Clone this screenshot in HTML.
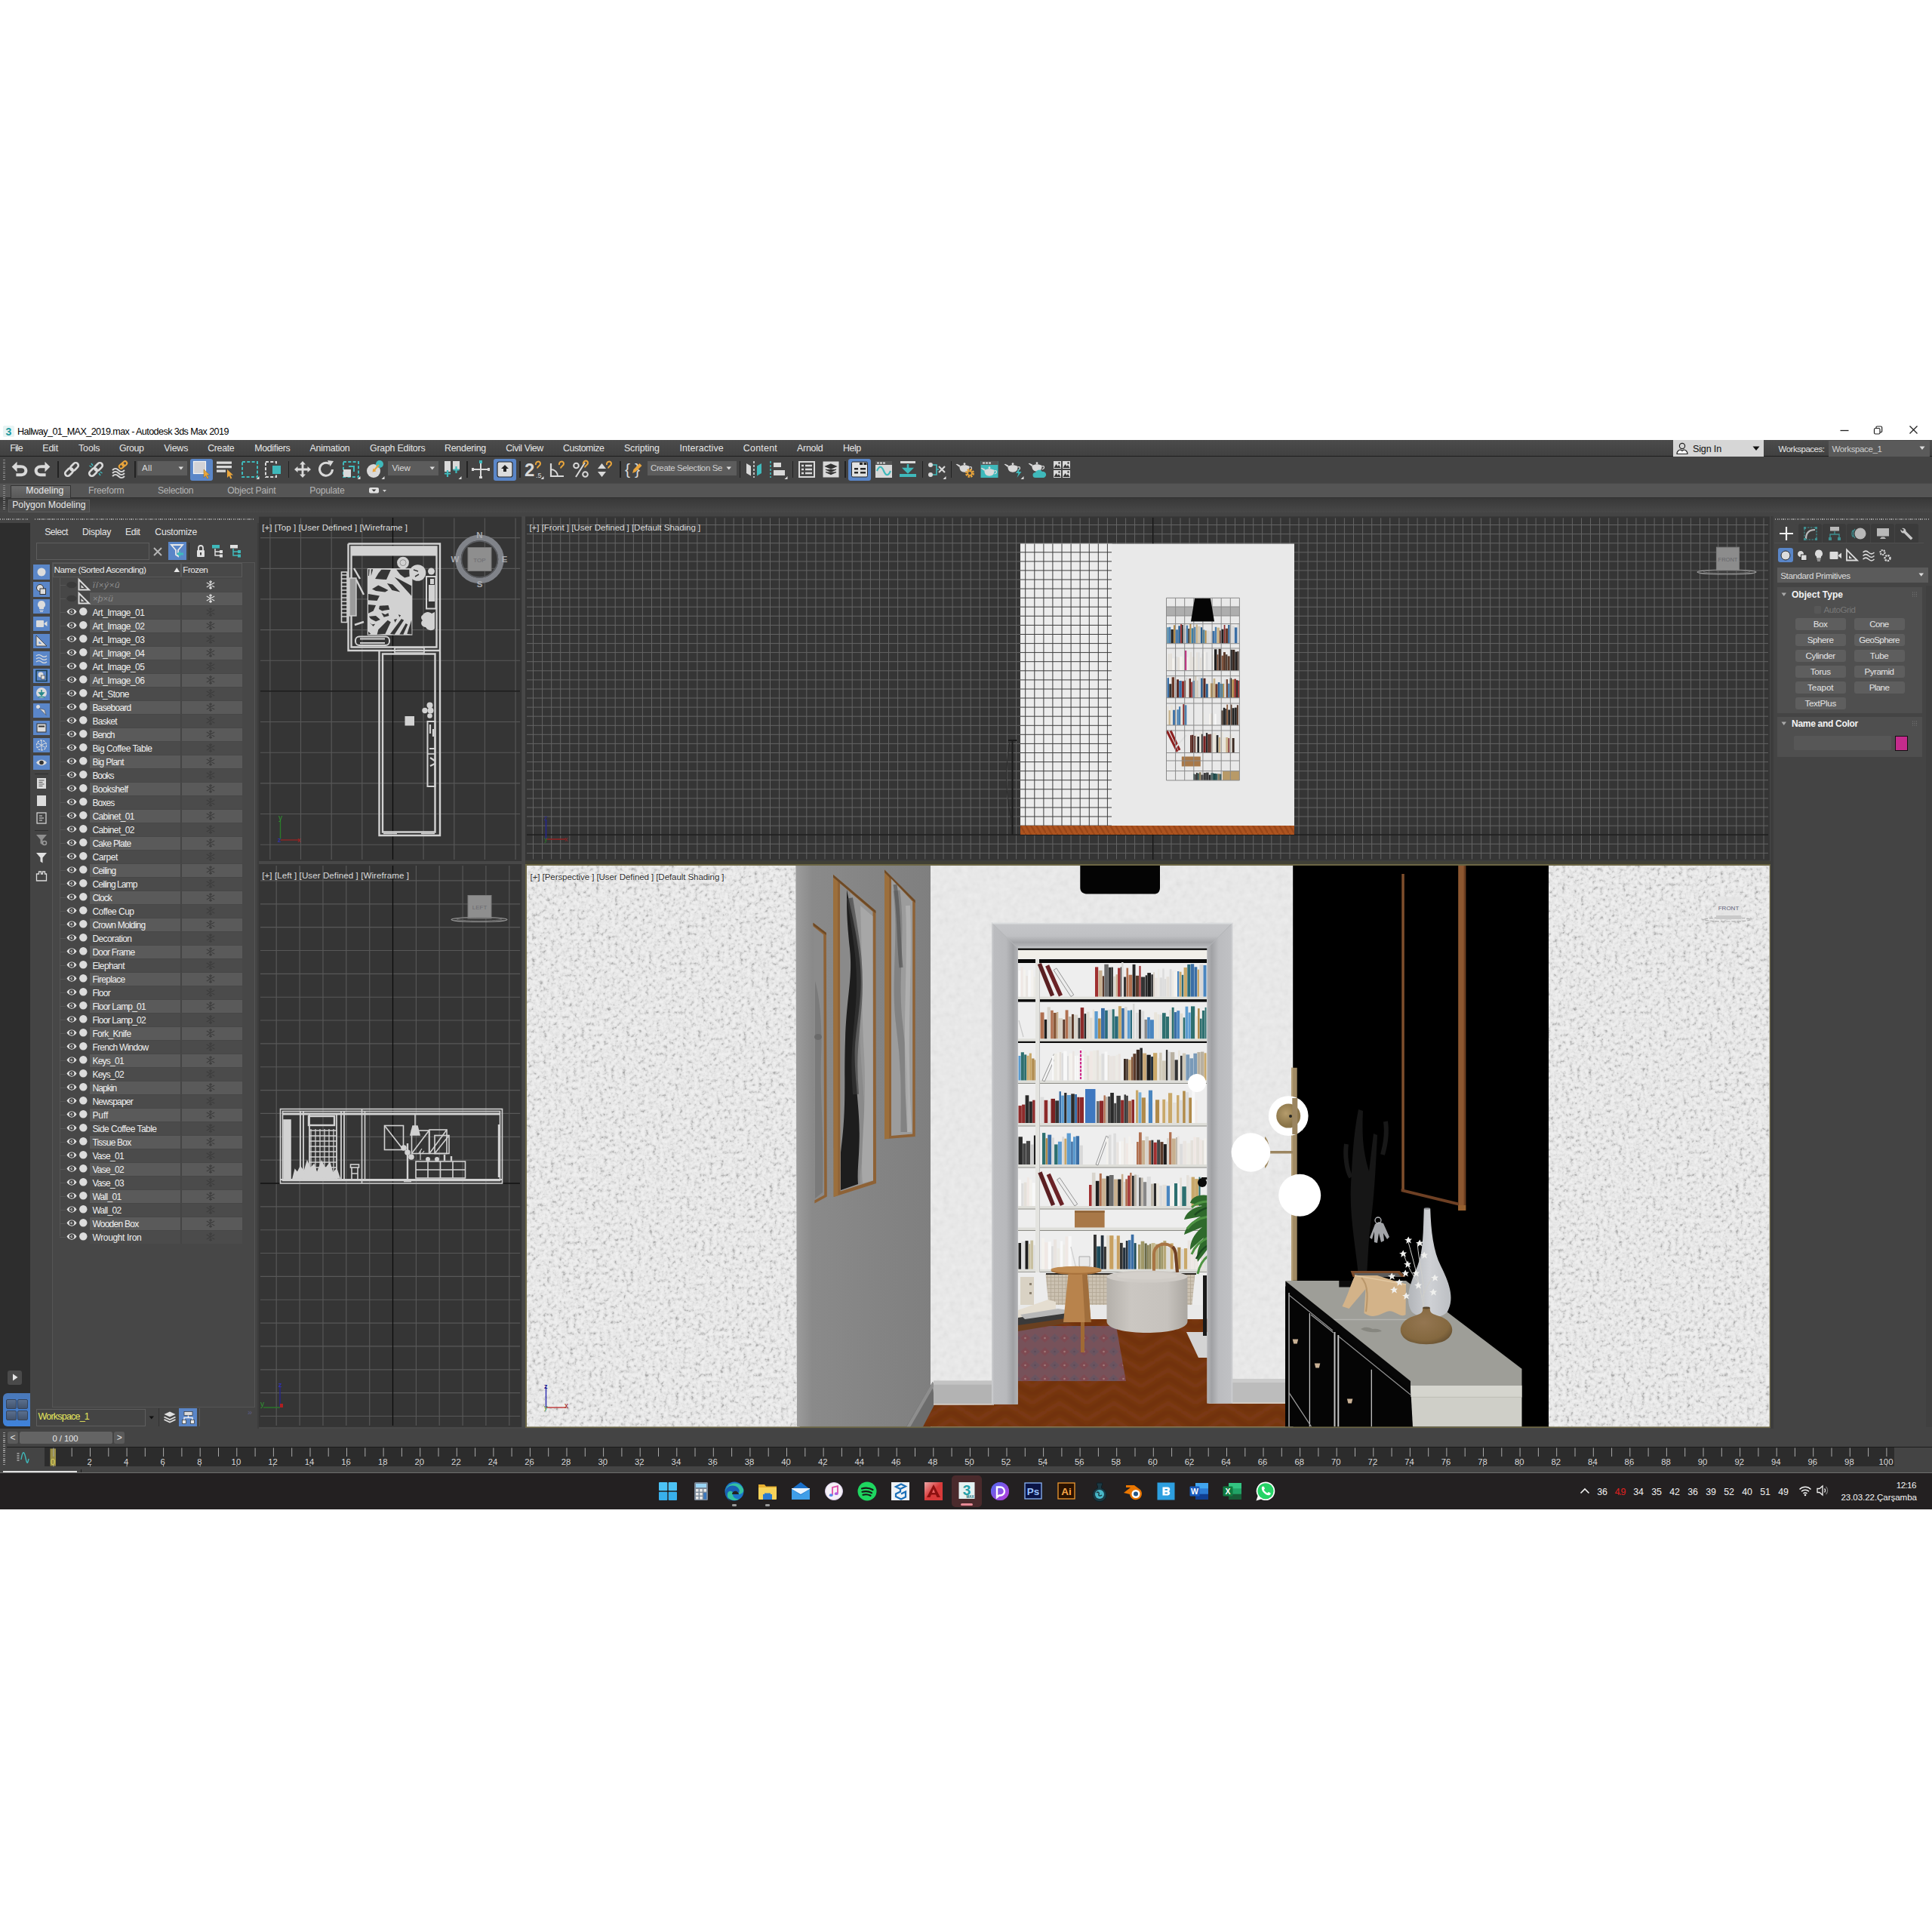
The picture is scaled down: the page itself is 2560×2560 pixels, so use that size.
<!DOCTYPE html>
<html><head><meta charset="utf-8"><title>3ds Max</title>
<style>
html,body{margin:0;padding:0;background:#fff;}
body{width:2560px;height:2560px;position:relative;overflow:hidden;font-family:"Liberation Sans",sans-serif;}
div,svg{box-sizing:border-box;}
svg{overflow:visible;}
</style></head><body>
<div style="position:absolute;left:0;top:560px;width:2560px;height:1440px;background:#444444"></div>
<!-- part_chrome -->
<div style="position:absolute;left:0.0px;top:560.0px;width:2560.0px;height:23.0px;background:#ffffff;"></div>
<svg style="position:absolute;left:3.0px;top:563.0px;" width="17" height="17" viewBox="0 0 17 17"><rect x="1" y="1" width="15" height="15" rx="2" fill="#e8f4f4"/><text x="8.5" y="13.5" font-size="14" font-weight="bold" text-anchor="middle" fill="#1f9aa0" font-family="Liberation Sans">3</text></svg>
<div style="position:absolute;top:563.0px;height:18px;line-height:18px;font-size:12.60px;color:#000;white-space:pre;letter-spacing:-0.584px;left:23.0px;">Hallway_01_MAX_2019.max - Autodesk 3ds Max 2019</div>
<svg style="position:absolute;left:2430.0px;top:558.8px;" width="130" height="20" viewBox="0 0 130 20"><path d="M8.500 11.500h11" stroke="#222" stroke-width="1.300"/><rect x="53.5" y="8.5" width="7.5" height="7.5" rx="1.5" fill="none" stroke="#222" stroke-width="1.2"/><path d="M56 8.5v-1.3a1.2 1.2 0 0 1 1.2-1.2h5a1.5 1.5 0 0 1 1.5 1.5v5a1.2 1.2 0 0 1-1.2 1.2h-1.3" fill="none" stroke="#222" stroke-width="1.2"/><path d="M100.500 5.500l10 10M110.500 5.500l-10 10" stroke="#222" stroke-width="1.3"/></svg>
<div style="position:absolute;left:0.0px;top:583.0px;width:2560.0px;height:22.0px;background:linear-gradient(#4b4b4b,#404040);"></div>
<div style="position:absolute;left:0.0px;top:604.0px;width:2560.0px;height:1.3px;background:#1e1e1e;"></div>
<div style="position:absolute;top:585.8px;height:17px;line-height:17px;font-size:12.40px;color:#e6e6e6;white-space:pre;letter-spacing:-0.845px;left:13.2px;">File</div>
<div style="position:absolute;top:585.8px;height:17px;line-height:17px;font-size:12.40px;color:#e6e6e6;white-space:pre;letter-spacing:-0.167px;left:56.3px;">Edit</div>
<div style="position:absolute;top:585.8px;height:17px;line-height:17px;font-size:12.40px;color:#e6e6e6;white-space:pre;letter-spacing:-0.089px;left:104.0px;">Tools</div>
<div style="position:absolute;top:585.8px;height:17px;line-height:17px;font-size:12.40px;color:#e6e6e6;white-space:pre;letter-spacing:-0.412px;left:158.0px;">Group</div>
<div style="position:absolute;top:585.8px;height:17px;line-height:17px;font-size:12.40px;color:#e6e6e6;white-space:pre;letter-spacing:-0.170px;left:217.2px;">Views</div>
<div style="position:absolute;top:585.8px;height:17px;line-height:17px;font-size:12.40px;color:#e6e6e6;white-space:pre;letter-spacing:-0.336px;left:275.2px;">Create</div>
<div style="position:absolute;top:585.8px;height:17px;line-height:17px;font-size:12.40px;color:#e6e6e6;white-space:pre;letter-spacing:-0.344px;left:337.3px;">Modifiers</div>
<div style="position:absolute;top:585.8px;height:17px;line-height:17px;font-size:12.40px;color:#e6e6e6;white-space:pre;letter-spacing:-0.249px;left:410.6px;">Animation</div>
<div style="position:absolute;top:585.8px;height:17px;line-height:17px;font-size:12.40px;color:#e6e6e6;white-space:pre;letter-spacing:-0.238px;left:490.0px;">Graph Editors</div>
<div style="position:absolute;top:585.8px;height:17px;line-height:17px;font-size:12.40px;color:#e6e6e6;white-space:pre;letter-spacing:-0.246px;left:589.0px;">Rendering</div>
<div style="position:absolute;top:585.8px;height:17px;line-height:17px;font-size:12.40px;color:#e6e6e6;white-space:pre;letter-spacing:-0.372px;left:670.2px;">Civil View</div>
<div style="position:absolute;top:585.8px;height:17px;line-height:17px;font-size:12.40px;color:#e6e6e6;white-space:pre;letter-spacing:-0.452px;left:746.0px;">Customize</div>
<div style="position:absolute;top:585.8px;height:17px;line-height:17px;font-size:12.40px;color:#e6e6e6;white-space:pre;letter-spacing:-0.160px;left:827.0px;">Scripting</div>
<div style="position:absolute;top:585.8px;height:17px;line-height:17px;font-size:12.40px;color:#e6e6e6;white-space:pre;letter-spacing:0.109px;left:900.4px;">Interactive</div>
<div style="position:absolute;top:585.8px;height:17px;line-height:17px;font-size:12.40px;color:#e6e6e6;white-space:pre;letter-spacing:0.253px;left:984.8px;">Content</div>
<div style="position:absolute;top:585.8px;height:17px;line-height:17px;font-size:12.40px;color:#e6e6e6;white-space:pre;letter-spacing:-0.240px;left:1056.0px;">Arnold</div>
<div style="position:absolute;top:585.8px;height:17px;line-height:17px;font-size:12.40px;color:#e6e6e6;white-space:pre;letter-spacing:-0.475px;left:1117.0px;">Help</div>
<div style="position:absolute;left:2216.6px;top:583.0px;width:120.6px;height:21.8px;background:#d6d6d6;"></div>
<svg style="position:absolute;left:2220.0px;top:585.0px;" width="18" height="18" viewBox="0 0 18 18"><circle cx="9" cy="6" r="3.6" fill="none" stroke="#222" stroke-width="1.2"/><path d="M2 16.500c0-4 3-5.500 5-5.500l2 1.500 2-1.500c2 0 5 1.500 5 5.500z" fill="#fff" stroke="#222" stroke-width="1.2"/></svg>
<div style="position:absolute;top:586.2px;height:18px;line-height:18px;font-size:12.60px;color:#111;white-space:pre;letter-spacing:-0.175px;left:2243.0px;">Sign In</div>
<svg style="position:absolute;left:2322.0px;top:591.0px;" width="10" height="7" viewBox="0 0 10 7"><path d="M0.500 0.500h9l-4.500 5.500z" fill="#111"/></svg>
<div style="position:absolute;top:586.5px;height:16px;line-height:16px;font-size:11.50px;color:#e6e6e6;white-space:pre;letter-spacing:-0.477px;left:2356.5px;">Workspaces:</div>
<div style="position:absolute;left:2423.0px;top:584.0px;width:134.0px;height:20.5px;background:#5a5a5a;"></div>
<div style="position:absolute;top:586.5px;height:16px;line-height:16px;font-size:11.50px;color:#d0d0d0;white-space:pre;letter-spacing:-0.372px;left:2427.5px;">Workspace_1</div>
<svg style="position:absolute;left:2543.0px;top:591.0px;" width="8" height="6" viewBox="0 0 8 6"><path d="M0.500 0.500h7l-3.500 4.500z" fill="#ddd"/></svg>
<div style="position:absolute;left:0.0px;top:605.3px;width:2560.0px;height:34.2px;background:#444444;"></div>
<div style="position:absolute;left:0.0px;top:639.5px;width:2560.0px;height:20.0px;background:#555555;"></div>
<div style="position:absolute;left:0.0px;top:639.5px;width:2560.0px;height:1.0px;background:#4a4a4a;"></div>
<div style="position:absolute;left:0.0px;top:659.0px;width:2560.0px;height:1.0px;background:#2f2f2f;"></div>
<div style="position:absolute;left:0.0px;top:660.0px;width:2560.0px;height:19.0px;background:linear-gradient(#383838,#484848);"></div>
<div style="position:absolute;left:0.0px;top:679.0px;width:2560.0px;height:5.0px;background:#444;"></div>
<div style="position:absolute;left:4.0px;top:609.0px;width:3.0px;height:28.0px;background:repeating-linear-gradient(#888 0 1px,transparent 1px 2.600px);"></div>
<div style="position:absolute;left:4.0px;top:643.0px;width:3.0px;height:34.0px;background:repeating-linear-gradient(#888 0 1px,transparent 1px 2.600px);"></div>
<div style="position:absolute;left:14.0px;top:642.5px;width:80.0px;height:17.0px;background:linear-gradient(#6a6a6a,#585858);border:1px solid #333;border-bottom:none;box-sizing:border-box;"></div>
<div style="position:absolute;top:642.3px;height:17px;line-height:17px;font-size:12.20px;color:#e8e8e8;white-space:pre;letter-spacing:0.099px;left:34.2px;">Modeling</div>
<div style="position:absolute;top:642.3px;height:17px;line-height:17px;font-size:12.20px;color:#b4b4b4;white-space:pre;letter-spacing:-0.248px;left:117.0px;">Freeform</div>
<div style="position:absolute;top:642.3px;height:17px;line-height:17px;font-size:12.20px;color:#b4b4b4;white-space:pre;letter-spacing:-0.321px;left:209.0px;">Selection</div>
<div style="position:absolute;top:642.3px;height:17px;line-height:17px;font-size:12.20px;color:#b4b4b4;white-space:pre;letter-spacing:-0.188px;left:301.3px;">Object Paint</div>
<div style="position:absolute;top:642.3px;height:17px;line-height:17px;font-size:12.20px;color:#b4b4b4;white-space:pre;letter-spacing:-0.245px;left:410.3px;">Populate</div>
<svg style="position:absolute;left:488.0px;top:645.0px;" width="26" height="10" viewBox="0 0 26 10"><rect x="1" y="1" width="13" height="7.500" rx="2" fill="#e0e0e0"/><path d="M4.500 3.500h6l-3 3z" fill="#333"/><path d="M19 4h5l-2.500 3z" fill="#ccc"/></svg>
<div style="position:absolute;left:11.0px;top:661.5px;width:108.0px;height:17.0px;background:#4d4d4d;border:1px solid #5c5c5c;box-sizing:border-box;"></div>
<div style="position:absolute;top:660.9px;height:17px;line-height:17px;font-size:12.20px;color:#e8e8e8;white-space:pre;letter-spacing:0.032px;left:16.2px;">Polygon Modeling</div>
<!-- part_toolbar -->
<svg style="position:absolute;left:11.5px;top:608.0px" width="28" height="28" viewBox="-14 -14 28 28"><path transform="scale(1.15)" d="M-9 -3l6 -6v4h4c5 0 8 3 8 6.500s-3 6.500-7 6.500h-6v-3.500h6c2 0 3.500-1 3.500-3s-1.500-3-3.500-3h-5v4.500z" fill="#d9d9d9"/></svg>
<svg style="position:absolute;left:42.3px;top:608.0px" width="28" height="28" viewBox="-14 -14 28 28"><path transform="scale(-1.15 1.15)" d="M-9 -3l6 -6v4h4c5 0 8 3 8 6.500s-3 6.500-7 6.500h-6v-3.500h6c2 0 3.500-1 3.500-3s-1.500-3-3.500-3h-5v4.500z" fill="#d9d9d9"/></svg>
<div style="position:absolute;left:76.0px;top:611.0px;width:1.6px;height:22.0px;background:#222222;"></div>
<svg style="position:absolute;left:81.0px;top:608.0px" width="28" height="28" viewBox="-14 -14 28 28"><g transform="rotate(-45)" fill="none" stroke="#d9d9d9" stroke-width="2.600"><rect x="-11" y="-3.500" width="12" height="7" rx="3.500"/><rect x="-1" y="-3.500" width="12" height="7" rx="3.500"/></g></svg>
<svg style="position:absolute;left:112.8px;top:608.0px" width="28" height="28" viewBox="-14 -14 28 28"><g transform="rotate(-45)" fill="none" stroke="#d9d9d9" stroke-width="2.600"><rect x="-11" y="-3.500" width="12" height="7" rx="3.500"/><rect x="-1" y="-3.500" width="12" height="7" rx="3.500"/></g><path d="M-6 -8l2 3M-8.500 -5l3 2M6 8l-2-3M8.500 5l-3-2" stroke="#3fb9bb" stroke-width="1.500"/></svg>
<svg style="position:absolute;left:145.0px;top:608.0px" width="28" height="28" viewBox="-14 -14 28 28"><path d="M-10 1c3-3 5-3 8 0s5 3 8 0M-10 5c3-3 5-3 8 0s5 3 8 0M-10 9c3-3 5-3 8 0s5 3 8 0" fill="none" stroke="#d9d9d9" stroke-width="2"/><g transform="translate(4 -6) rotate(-40)" fill="none" stroke="#e9a53c" stroke-width="2"><rect x="-6" y="-2.500" width="7" height="5" rx="2.500"/><rect x="-1" y="-2.500" width="7" height="5" rx="2.500"/></g></svg>
<div style="position:absolute;left:178.0px;top:611.0px;width:1.6px;height:22.0px;background:#222222;"></div>
<div style="position:absolute;left:182.0px;top:610.6px;width:66.3px;height:19.0px;background:#5c5c5c;"></div>
<div style="position:absolute;top:612.2px;height:16px;line-height:16px;font-size:11.50px;color:#d8d8d8;white-space:pre;letter-spacing:0.240px;left:188.0px;">All</div>
<svg style="position:absolute;left:236.0px;top:618.0px;" width="8" height="6" viewBox="0 0 8 6"><path d="M0.500 0.500h6.500l-3.250 4z" fill="#ddd"/></svg>
<div style="position:absolute;left:251.7px;top:608.0px;width:30.3px;height:28.8px;background:#5a86c8;border-radius:3px;"></div>
<svg style="position:absolute;left:253.0px;top:608.0px" width="28" height="28" viewBox="-14 -14 28 28"><rect x="-10.500" y="-10.500" width="16" height="16" fill="#d2d2d6" stroke="#f4f4f4" stroke-width="1.200"/><path d="M3 0l0 11 2.600-2.600 2 4 1.800-0.900-2-4 3.600 0z" fill="#e9a53c" stroke="#7a5a10" stroke-width="0.400"/></svg>
<svg style="position:absolute;left:284.0px;top:608.0px" width="28" height="28" viewBox="-14 -14 28 28"><path d="M-11 -10.500h20v3.300h-20zM-11 -5h20v3.300h-20zM-11 0.500h12v3.300h-12z" fill="#d9d9d9"/><path d="M3 0l0 11 2.600-2.600 2 4 1.800-0.900-2-4 3.600 0z" fill="#e9a53c"/></svg>
<svg style="position:absolute;left:317.0px;top:608.0px" width="28" height="28" viewBox="-14 -14 28 28"><rect x="-10" y="-10" width="20" height="20" fill="none" stroke="#3fb9bb" stroke-width="2" stroke-dasharray="4 2.300"/><path d="M12.5 13h-4l4 -4z" fill="#e0e0e0"/></svg>
<svg style="position:absolute;left:348.6px;top:608.0px" width="28" height="28" viewBox="-14 -14 28 28"><rect x="-11" y="-10" width="14" height="20" fill="none" stroke="#d9d9d9" stroke-width="2" stroke-dasharray="4 2.300"/><rect x="-2" y="-5" width="11" height="11" fill="#3fb9bb"/></svg>
<div style="position:absolute;left:381.7px;top:611.0px;width:1.6px;height:22.0px;background:#222222;"></div>
<svg style="position:absolute;left:386.7px;top:608.0px" width="28" height="28" viewBox="-14 -14 28 28"><path d="M0 -11l4 4.500h-2.600v5.100h5.100v-2.600l4.500 4-4.500 4v-2.600h-5.100v5.100h2.600l-4 4.500-4-4.500h2.600v-5.100h-5.100v2.600l-4.500-4 4.500-4v2.600h5.100v-5.100h-2.600z" fill="#d9d9d9"/></svg>
<svg style="position:absolute;left:418.0px;top:608.0px" width="28" height="28" viewBox="-14 -14 28 28"><path d="M4.500 -7.500a8.500 8.500 0 1 0 4 7.500" fill="none" stroke="#d9d9d9" stroke-width="3"/><path d="M2 -12l8 1-4.500 7z" fill="#d9d9d9"/></svg>
<svg style="position:absolute;left:451.0px;top:608.0px" width="28" height="28" viewBox="-14 -14 28 28"><rect x="-10" y="-10" width="20" height="20" fill="none" stroke="#3fb9bb" stroke-width="2" stroke-dasharray="4 2.300"/><rect x="-10" y="0" width="10" height="10" fill="#d9d9d9"/><path d="M-3 -4h7v7" fill="none" stroke="#3fb9bb" stroke-width="2"/><path d="M12.5 13h-4l4 -4z" fill="#e0e0e0"/></svg>
<svg style="position:absolute;left:482.7px;top:608.0px" width="28" height="28" viewBox="-14 -14 28 28"><circle cx="-2" cy="2" r="9" fill="#d9d9d9"/><circle cx="6" cy="-7" r="5" fill="#3fb9bb"/><path d="M-2 2l7-8" stroke="#e9a53c" stroke-width="2"/><path d="M-3.500 3.500l1-5 4 4z" fill="#e9a53c"/><path d="M12.5 13h-4l4 -4z" fill="#e0e0e0"/></svg>
<div style="position:absolute;left:514.0px;top:610.6px;width:67.0px;height:19.0px;background:#5c5c5c;"></div>
<div style="position:absolute;top:612.2px;height:16px;line-height:16px;font-size:11.50px;color:#d8d8d8;white-space:pre;letter-spacing:-0.179px;left:519.5px;">View</div>
<svg style="position:absolute;left:569.0px;top:618.0px;" width="8" height="6" viewBox="0 0 8 6"><path d="M0.500 0.500h6.500l-3.250 4z" fill="#ddd"/></svg>
<svg style="position:absolute;left:584.7px;top:608.0px" width="28" height="28" viewBox="-14 -14 28 28"><path d="M-10 -11h8v14h-8zM1 -11h9v11h-9z" fill="#d9d9d9"/><path d="M-6 1v9M-10 5.500h8M5.500 -4v9M1.500 0.500h8" stroke="#3fb9bb" stroke-width="2.200"/><path d="M12.5 13h-4l4 -4z" fill="#e0e0e0"/></svg>
<div style="position:absolute;left:618.0px;top:611.0px;width:1.6px;height:22.0px;background:#222222;"></div>
<svg style="position:absolute;left:623.0px;top:608.0px" width="28" height="28" viewBox="-14 -14 28 28"><path d="M-10 0h20M0 -10v20" stroke="#d9d9d9" stroke-width="2"/><rect x="-2" y="-12" width="4" height="4" fill="#3fb9bb"/><rect x="-12" y="-2" width="3" height="4" fill="#d9d9d9"/><rect x="9" y="-2" width="3" height="4" fill="#d9d9d9"/><rect x="-2" y="9" width="4" height="3" fill="#d9d9d9"/></svg>
<div style="position:absolute;left:654.0px;top:608.0px;width:30.3px;height:28.8px;background:#5a86c8;border-radius:3px;"></div>
<svg style="position:absolute;left:655.2px;top:608.0px" width="28" height="28" viewBox="-14 -14 28 28"><rect x="-10" y="-10" width="20" height="20" rx="2.500" fill="#dcdcdc" stroke="#2a2a2a" stroke-width="1.200"/><path d="M0 -6l5 5h-3v4h-4v-4h-3z" fill="#222"/></svg>
<div style="position:absolute;left:688.0px;top:611.0px;width:1.6px;height:22.0px;background:#222222;"></div>
<svg style="position:absolute;left:693.5px;top:608.0px" width="28" height="28" viewBox="-14 -14 28 28"><text x="-13" y="9" font-size="24" font-weight="bold" fill="#d9d9d9" font-family="Liberation Sans">2</text><text x="2" y="11" font-size="9" fill="#d9d9d9" font-family="Liberation Sans">.5</text><path d="M2 -6c-1-5 6-6 6-1.500 0 3-4 3-4 6" fill="none" stroke="#e9a53c" stroke-width="2"/><path d="M12.5 13h-4l4 -4z" fill="#e0e0e0"/></svg>
<svg style="position:absolute;left:724.5px;top:608.0px" width="28" height="28" viewBox="-14 -14 28 28"><path d="M-9 -8v17h17" fill="none" stroke="#d9d9d9" stroke-width="2.200"/><path d="M-9 0a9 9 0 0 1 9 9" fill="none" stroke="#d9d9d9" stroke-width="2"/><path d="M2 -6c-1-5 6-6 6-1.500 0 3-4 3-4 6" fill="none" stroke="#e9a53c" stroke-width="2"/></svg>
<svg style="position:absolute;left:756.0px;top:608.0px" width="28" height="28" viewBox="-14 -14 28 28"><circle cx="-6.500" cy="-5" r="3.300" fill="none" stroke="#d9d9d9" stroke-width="2"/><circle cx="5.500" cy="6.500" r="3.300" fill="none" stroke="#d9d9d9" stroke-width="2"/><path d="M-7 10l12-19" stroke="#d9d9d9" stroke-width="2"/><path d="M3 -7c-1-5 6-6 6-1.500 0 3-4 3-4 6" fill="none" stroke="#e9a53c" stroke-width="2"/></svg>
<svg style="position:absolute;left:788.0px;top:608.0px" width="28" height="28" viewBox="-14 -14 28 28"><path d="M-10 -1l5.500-7 5.500 7zM-10 3l5.500 7 5.500-7z" fill="#d9d9d9"/><path d="M2 -6c-1-5 6-6 6-1.500 0 3-4 3-4 6" fill="none" stroke="#e9a53c" stroke-width="2"/></svg>
<div style="position:absolute;left:821.2px;top:611.0px;width:1.6px;height:22.0px;background:#222222;"></div>
<svg style="position:absolute;left:826.7px;top:608.0px" width="28" height="28" viewBox="-14 -14 28 28"><text x="-13" y="7" font-size="21" fill="#d9d9d9" font-family="Liberation Sans">{</text><text x="0" y="7" font-size="21" fill="#d9d9d9" font-family="Liberation Sans">}</text><path d="M-3 5l1.500-5 8-8 3 3-8 8z" fill="#e9a53c"/></svg>
<div style="position:absolute;left:858.0px;top:610.6px;width:118.0px;height:19.0px;background:#5c5c5c;"></div>
<div style="position:absolute;top:612.0px;height:16px;line-height:16px;font-size:11.50px;color:#d0d0d0;white-space:pre;letter-spacing:-0.383px;left:862.0px;">Create Selection Se</div>
<svg style="position:absolute;left:962.0px;top:618.0px;" width="8" height="6" viewBox="0 0 8 6"><path d="M0.500 0.500h6.500l-3.250 4z" fill="#ddd"/></svg>
<div style="position:absolute;left:979.8px;top:611.0px;width:1.6px;height:22.0px;background:#222222;"></div>
<svg style="position:absolute;left:984.5px;top:608.0px" width="28" height="28" viewBox="-14 -14 28 28"><path d="M-10 -8l6 3.500v13l-6-3.500z" fill="#d9d9d9"/><path d="M10 -8l-6 3.500v13l6-3.500z" fill="#3fb9bb"/><path d="M0 -11v22" stroke="#d9d9d9" stroke-width="1.600" stroke-dasharray="3 2"/></svg>
<svg style="position:absolute;left:1016.8px;top:608.0px" width="28" height="28" viewBox="-14 -14 28 28"><path d="M-10 -11v22" stroke="#3fb9bb" stroke-width="1.600" stroke-dasharray="3 2"/><rect x="-6" y="-9" width="10" height="6" fill="#d9d9d9"/><rect x="-6" y="1" width="15" height="7" fill="#d9d9d9"/><path d="M12.5 13h-4l4 -4z" fill="#e0e0e0"/></svg>
<div style="position:absolute;left:1049.9px;top:611.0px;width:1.6px;height:22.0px;background:#222222;"></div>
<svg style="position:absolute;left:1054.8px;top:608.0px" width="28" height="28" viewBox="-14 -14 28 28"><rect x="-10" y="-10" width="20" height="20" fill="none" stroke="#d9d9d9" stroke-width="2"/><path d="M-7 -5h3M-2 -5h9M-7 0h3M-2 0h9M-7 5h3M-2 5h9" stroke="#d9d9d9" stroke-width="2.400"/></svg>
<svg style="position:absolute;left:1086.9px;top:608.0px" width="28" height="28" viewBox="-14 -14 28 28"><rect x="-10.500" y="-10.500" width="21" height="21" fill="#d9d9d9"/><path d="M0 -7l7 3-7 3-7-3zM-7 0l7 3 7-3M-7 3.500l7 3 7-3" fill="#333" stroke="#333" stroke-width="1.300"/></svg>
<div style="position:absolute;left:1119.2px;top:611.0px;width:1.6px;height:22.0px;background:#222222;"></div>
<div style="position:absolute;left:1124.0px;top:608.0px;width:30.3px;height:28.8px;background:#5a86c8;border-radius:3px;"></div>
<svg style="position:absolute;left:1125.2px;top:608.0px" width="28" height="28" viewBox="-14 -14 28 28"><rect x="-10.500" y="-10" width="21" height="20" rx="1.500" fill="#e2e2e2" stroke="#2a2a2a" stroke-width="1"/><path d="M0 -9h4v3h-4zM5.500 -9h4v3h-4zM-7 -2h5v2.500h-5zM1 -2h7v2.500h-7zM-7 3h5v2.500h-5zM1 3h7v2.500h-7z" fill="#2a2a2a"/></svg>
<svg style="position:absolute;left:1156.7px;top:608.0px" width="28" height="28" viewBox="-14 -14 28 28"><rect x="-11" y="-11" width="22" height="22" fill="#d9d9d9"/><rect x="-11" y="-11" width="22" height="5" fill="#555"/><path d="M-9 -8.500h3M-5 -8.500h3M-1 -8.500h3" stroke="#d9d9d9" stroke-width="2"/><path d="M-9 2c3-7 6-7 9 0s6 7 9 0" fill="none" stroke="#3fb9bb" stroke-width="2.200"/></svg>
<svg style="position:absolute;left:1189.0px;top:608.0px" width="28" height="28" viewBox="-14 -14 28 28"><path d="M-10 -9.500h20" stroke="#d9d9d9" stroke-width="3"/><path d="M0 -7v9M-5 -1l5 5 5-5z" fill="#3fb9bb" stroke="#3fb9bb" stroke-width="2.500"/><rect x="-11" y="6" width="22" height="4" fill="#3fb9bb"/></svg>
<div style="position:absolute;left:1221.8px;top:611.0px;width:1.6px;height:22.0px;background:#222222;"></div>
<svg style="position:absolute;left:1227.0px;top:608.0px" width="28" height="28" viewBox="-14 -14 28 28"><circle cx="-8" cy="-6" r="3" fill="#d9d9d9"/><circle cx="-8" cy="7" r="3" fill="#d9d9d9"/><path d="M-5 -6h5v13h-5M0 0h3" fill="none" stroke="#3fb9bb" stroke-width="1.600"/><path d="M3 -4l8 8M11 -4l-8 8" stroke="#d9d9d9" stroke-width="2.200"/><path d="M12.5 13h-4l4 -4z" fill="#e0e0e0"/></svg>
<div style="position:absolute;left:1259.7px;top:611.0px;width:1.6px;height:22.0px;background:#222222;"></div>
<svg style="position:absolute;left:1265.6px;top:608.0px" width="28" height="28" viewBox="-14 -14 28 28"><g transform="translate(-2 -3) scale(0.95)" fill="#d9d9d9"><path d="M-7 -1c0 6 3 8 7 8s7-2 7-8c-2-1.500-5-2-7-2s-5 0.500-7 2z"/><circle cx="0" cy="-4.500" r="1.500"/><path d="M-7 0l-5-4 1.500-0.500 4.500 2z"/><path d="M7 0c4-2 4 4 0 4" fill="none" stroke="#d9d9d9" stroke-width="1.300"/></g><circle cx="5" cy="5" r="4.500" fill="none" stroke="#e9a53c" stroke-width="3" stroke-dasharray="2.300 1.200"/><circle cx="5" cy="5" r="2.800" fill="none" stroke="#e9a53c" stroke-width="1.600"/></svg>
<svg style="position:absolute;left:1296.7px;top:608.0px" width="28" height="28" viewBox="-14 -14 28 28"><rect x="-11.500" y="-11" width="23" height="22" fill="#3fb9bb"/><rect x="-11.500" y="-11" width="23" height="5" fill="#555"/><path d="M-9 -8.500h3M-5 -8.500h3M-1 -8.500h3" stroke="#d9d9d9" stroke-width="2"/><g transform="translate(0 2) scale(0.95)" fill="#d9d9d9"><path d="M-7 -1c0 6 3 8 7 8s7-2 7-8c-2-1.500-5-2-7-2s-5 0.500-7 2z"/><circle cx="0" cy="-4.500" r="1.500"/><path d="M-7 0l-5-4 1.500-0.500 4.500 2z"/><path d="M7 0c4-2 4 4 0 4" fill="none" stroke="#d9d9d9" stroke-width="1.300"/></g></svg>
<svg style="position:absolute;left:1329.5px;top:608.0px" width="28" height="28" viewBox="-14 -14 28 28"><g transform="translate(-2 -3) scale(0.95)" fill="#d9d9d9"><path d="M-7 -1c0 6 3 8 7 8s7-2 7-8c-2-1.500-5-2-7-2s-5 0.500-7 2z"/><circle cx="0" cy="-4.500" r="1.500"/><path d="M-7 0l-5-4 1.500-0.500 4.500 2z"/><path d="M7 0c4-2 4 4 0 4" fill="none" stroke="#d9d9d9" stroke-width="1.300"/></g><path d="M7 -2l-5 7h3.500l-2 6 6-8h-3.500z" fill="#3fb9bb"/><path d="M12.5 13h-4l4 -4z" fill="#e0e0e0"/></svg>
<svg style="position:absolute;left:1361.3px;top:608.0px" width="28" height="28" viewBox="-14 -14 28 28"><g transform="translate(-1 -4) scale(0.95)" fill="#d9d9d9"><path d="M-7 -1c0 6 3 8 7 8s7-2 7-8c-2-1.500-5-2-7-2s-5 0.500-7 2z"/><circle cx="0" cy="-4.500" r="1.500"/><path d="M-7 0l-5-4 1.500-0.500 4.500 2z"/><path d="M7 0c4-2 4 4 0 4" fill="none" stroke="#d9d9d9" stroke-width="1.300"/></g><path d="M-3 11a3.500 3.500 0 0 1 0-7 5 5 0 0 1 9-1 4 4 0 0 1 2 8z" fill="#3fb9bb"/></svg>
<svg style="position:absolute;left:1392.8px;top:608.0px" width="28" height="28" viewBox="-14 -14 28 28"><rect x="-11" y="-11" width="10" height="10" fill="#d9d9d9"/><path d="M-10.5 -2l3-5 2 3 1.500-2 2.500 4z" fill="#333"/><circle cx="-3.5" cy="-8.5" r="1.200" fill="#333"/><rect x="1" y="-11" width="10" height="10" fill="#d9d9d9"/><path d="M1.5 -2l3-5 2 3 1.500-2 2.500 4z" fill="#333"/><circle cx="8.5" cy="-8.5" r="1.200" fill="#333"/><rect x="-11" y="1" width="10" height="10" fill="#d9d9d9"/><path d="M-10.5 10l3-5 2 3 1.500-2 2.500 4z" fill="#333"/><circle cx="-3.5" cy="3.5" r="1.200" fill="#333"/><rect x="1" y="1" width="10" height="10" fill="#d9d9d9"/><path d="M1.5 10l3-5 2 3 1.500-2 2.500 4z" fill="#333"/><circle cx="8.5" cy="3.5" r="1.200" fill="#333"/></svg>
<!-- part_left -->
<div style="position:absolute;left:0.0px;top:686.5px;width:37.0px;height:2.6px;background:repeating-linear-gradient(90deg,#999 0 1.300px,transparent 1.300px 2.600px);"></div>
<div style="position:absolute;left:46.0px;top:686.5px;width:291.0px;height:2.6px;background:repeating-linear-gradient(90deg,#999 0 1.300px,transparent 1.300px 2.600px);"></div>
<div style="position:absolute;left:0.0px;top:693.0px;width:40.0px;height:1204.0px;background:#2d2d2d;"></div>
<div style="position:absolute;left:9.7px;top:1816.0px;width:19.3px;height:18.5px;background:#4a4a4a;border-radius:3px;"></div>
<svg style="position:absolute;left:15.0px;top:1819.0px;" width="10" height="12" viewBox="0 0 10 12"><path d="M2 1.500l6.500 4.500-6.500 4.500z" fill="#e6e6e6"/></svg>
<div style="position:absolute;left:3.7px;top:1846.0px;width:36.3px;height:44.0px;background:linear-gradient(#4a78b8,#3f83dc);border-radius:6px 0 0 6px;"></div>
<div style="position:absolute;left:7.5px;top:1854.0px;width:14.0px;height:13.0px;background:linear-gradient(#5a6f8e,#43546e);border:1px solid #35435a;border-radius:2px;"></div>
<div style="position:absolute;left:22.5px;top:1854.0px;width:14.0px;height:13.0px;background:linear-gradient(#5a6f8e,#43546e);border:1px solid #35435a;border-radius:2px;"></div>
<div style="position:absolute;left:7.5px;top:1868.5px;width:14.0px;height:13.0px;background:linear-gradient(#5a6f8e,#43546e);border:1px solid #35435a;border-radius:2px;"></div>
<div style="position:absolute;left:22.5px;top:1868.5px;width:14.0px;height:13.0px;background:linear-gradient(#5a6f8e,#43546e);border:1px solid #35435a;border-radius:2px;"></div>
<div style="position:absolute;top:696.8px;height:17px;line-height:17px;font-size:12.20px;color:#e6e6e6;white-space:pre;letter-spacing:-0.518px;left:59.2px;">Select</div>
<div style="position:absolute;top:696.8px;height:17px;line-height:17px;font-size:12.20px;color:#e6e6e6;white-space:pre;letter-spacing:-0.286px;left:109.0px;">Display</div>
<div style="position:absolute;top:696.8px;height:17px;line-height:17px;font-size:12.20px;color:#e6e6e6;white-space:pre;letter-spacing:-0.381px;left:166.0px;">Edit</div>
<div style="position:absolute;top:696.8px;height:17px;line-height:17px;font-size:12.20px;color:#e6e6e6;white-space:pre;letter-spacing:-0.214px;left:205.3px;">Customize</div>
<div style="position:absolute;left:48.0px;top:719.0px;width:149.5px;height:22.5px;background:#444;border:1px solid #5e5e5e;"></div>
<svg style="position:absolute;left:202.0px;top:723.5px;" width="14" height="14" viewBox="0 0 14 14"><path d="M2 2l10 10M12 2l-10 10" stroke="#b5b5b5" stroke-width="2"/></svg>
<div style="position:absolute;left:222.7px;top:717.8px;width:24.7px;height:24.2px;background:#5a86c8;"></div>
<svg style="position:absolute;left:224.0px;top:719.0px;" width="22" height="22" viewBox="0 0 22 22"><path d="M3 3h15l-6 7v8l-3-2v-6z" fill="none" stroke="#e8e8e8" stroke-width="1.800"/><path d="M10 15l5-4v2.500h4v3h-4v2.500z" fill="#3fb9bb"/></svg>
<div style="position:absolute;left:250.0px;top:719.0px;width:1.3px;height:23.0px;background:#2c2c2c;"></div>
<svg style="position:absolute;left:258.0px;top:720.0px;" width="16" height="20" viewBox="0 0 16 20"><rect x="3" y="9" width="10" height="9" rx="1" fill="#e0e0e0"/><path d="M5 9v-3a3 3 0 0 1 6 0v3" fill="none" stroke="#e0e0e0" stroke-width="1.800"/><rect x="7" y="12" width="2" height="3.500" fill="#444"/></svg>
<svg style="position:absolute;left:279.0px;top:720.0px;" width="20" height="20" viewBox="0 0 20 20"><rect x="2" y="2" width="10" height="4.500" fill="#3fb9bb"/><path d="M6 7v9h6M6 11h6" fill="none" stroke="#e0e0e0" stroke-width="1.500"/><rect x="12" y="9" width="4" height="4" fill="#e0e0e0"/><rect x="12" y="14.500" width="4" height="4" fill="#e0e0e0"/></svg>
<svg style="position:absolute;left:303.0px;top:720.0px;" width="20" height="20" viewBox="0 0 20 20"><rect x="2" y="2" width="10" height="4.500" fill="#e0e0e0"/><path d="M6 7v9h6M6 11h6" fill="none" stroke="#3fb9bb" stroke-width="1.500"/><rect x="12" y="9" width="4" height="4" fill="#3fb9bb"/><rect x="12" y="14.500" width="4" height="4" fill="#3fb9bb"/></svg>
<div style="position:absolute;left:68.6px;top:745.0px;width:269.6px;height:1119.5px;background:#474747;border:1px solid #555;"></div>
<div style="position:absolute;left:69.5px;top:745.5px;width:251.0px;height:19.0px;background:#484848;border:1px solid #5a5a5a;"></div>
<div style="position:absolute;left:239.4px;top:745.5px;width:1.3px;height:19.0px;background:#5a5a5a;"></div>
<div style="position:absolute;top:746.5px;height:17px;line-height:17px;font-size:11.80px;color:#e8e8e8;white-space:pre;letter-spacing:-0.570px;left:71.5px;">Name (Sorted Ascending)</div>
<svg style="position:absolute;left:229.5px;top:751.0px;" width="9" height="8" viewBox="0 0 9 8"><path d="M0.500 7h7.500l-3.750-6z" fill="#e8e8e8"/></svg>
<div style="position:absolute;top:746.5px;height:17px;line-height:17px;font-size:11.80px;color:#e8e8e8;white-space:pre;letter-spacing:-0.620px;left:242.3px;">Frozen</div>
<div style="position:absolute;left:78.8px;top:766.0px;width:1.0px;height:872.0px;background:#565656;"></div>
<div style="position:absolute;left:119.0px;top:767.0px;width:201.5px;height:17.4px;background:#4b4b4b;"></div>
<div style="position:absolute;left:239.2px;top:767.0px;width:1.6px;height:17.4px;background:#444;"></div>
<div style="position:absolute;left:79.0px;top:775.4px;width:8.0px;height:1.0px;background:#565656;"></div>
<svg style="position:absolute;left:88.0px;top:770.4px;" width="14" height="10" viewBox="0 0 14 10"><ellipse cx="7" cy="5" rx="6.500" ry="4.200" fill="#3a3a3a"/></svg>
<svg style="position:absolute;left:102.5px;top:767.4px;" width="16" height="16" viewBox="0 0 16 16"><path d="M1.500 1v13.500h13.500z" fill="none" stroke="#dcdcdc" stroke-width="2"/><path d="M4.500 8v4h4z" fill="#dcdcdc"/></svg>
<div style="position:absolute;top:767.4px;height:17px;line-height:17px;font-size:11.80px;color:#8e8e8e;white-space:pre;font-style:italic;letter-spacing:0.616px;left:122.8px;">ïí×ý×û</div>
<svg style="position:absolute;left:272.0px;top:768.4px;" width="14" height="14" viewBox="0 0 14 14"><g transform="translate(7 7) scale(1)" stroke="#e0e0e0" stroke-width="1.100" fill="none"><path d="M0 -6v12M-5.200 -3l10.400 6M-5.200 3l10.400 -6M-1.800 -4.500l1.800 1.500 1.800-1.500M-1.800 4.500l1.800-1.500 1.800 1.500"/></g></svg>
<div style="position:absolute;left:119.0px;top:785.0px;width:201.5px;height:17.4px;background:#5a5a5a;"></div>
<div style="position:absolute;left:239.2px;top:785.0px;width:1.6px;height:17.4px;background:#444;"></div>
<div style="position:absolute;left:79.0px;top:793.4px;width:8.0px;height:1.0px;background:#565656;"></div>
<svg style="position:absolute;left:88.0px;top:788.4px;" width="14" height="10" viewBox="0 0 14 10"><ellipse cx="7" cy="5" rx="6.500" ry="4.200" fill="#3a3a3a"/></svg>
<svg style="position:absolute;left:102.5px;top:785.4px;" width="16" height="16" viewBox="0 0 16 16"><path d="M1.500 1v13.500h13.500z" fill="none" stroke="#dcdcdc" stroke-width="2"/><path d="M4.500 8v4h4z" fill="#dcdcdc"/></svg>
<div style="position:absolute;top:785.4px;height:17px;line-height:17px;font-size:11.80px;color:#8e8e8e;white-space:pre;font-style:italic;letter-spacing:0.023px;left:122.8px;">×þ×ü</div>
<svg style="position:absolute;left:272.0px;top:786.4px;" width="14" height="14" viewBox="0 0 14 14"><g transform="translate(7 7) scale(1)" stroke="#e0e0e0" stroke-width="1.100" fill="none"><path d="M0 -6v12M-5.200 -3l10.400 6M-5.200 3l10.400 -6M-1.800 -4.500l1.800 1.500 1.800-1.500M-1.800 4.500l1.800-1.500 1.800 1.500"/></g></svg>
<div style="position:absolute;left:119.0px;top:803.0px;width:201.5px;height:17.4px;background:#4b4b4b;"></div>
<div style="position:absolute;left:239.2px;top:803.0px;width:1.6px;height:17.4px;background:#444;"></div>
<div style="position:absolute;left:79.0px;top:811.4px;width:8.0px;height:1.0px;background:#565656;"></div>
<svg style="position:absolute;left:88.0px;top:805.4px;" width="14" height="11" viewBox="0 0 14 11"><path d="M0.500 5.500c3-5.500 10-5.500 13 0c-3 5.500-10 5.500-13 0z" fill="#e4e4e4"/><circle cx="7" cy="5.500" r="3.300" fill="#3c3c3c"/><circle cx="7" cy="5.500" r="1.600" fill="#e4e4e4"/><circle cx="7.600" cy="5.500" r="1" fill="#3c3c3c"/></svg>
<svg style="position:absolute;left:104.5px;top:805.4px;" width="11" height="11" viewBox="0 0 11 11"><circle cx="5.300" cy="5.300" r="5.200" fill="#dcdcdc"/></svg>
<div style="position:absolute;top:803.7px;height:17px;line-height:17px;font-size:12.00px;color:#f0f0f0;white-space:pre;letter-spacing:-0.531px;left:122.4px;">Art_Image_01</div>
<svg style="position:absolute;left:272.0px;top:804.4px;" width="14" height="14" viewBox="0 0 14 14"><g transform="translate(7 7) scale(1)" stroke="#3e3e3e" stroke-width="1.100" fill="none"><path d="M0 -6v12M-5.200 -3l10.400 6M-5.200 3l10.400 -6M-1.800 -4.500l1.800 1.500 1.800-1.500M-1.800 4.500l1.800-1.500 1.800 1.500"/></g></svg>
<div style="position:absolute;left:119.0px;top:821.0px;width:201.5px;height:17.4px;background:#5a5a5a;"></div>
<div style="position:absolute;left:239.2px;top:821.0px;width:1.6px;height:17.4px;background:#444;"></div>
<div style="position:absolute;left:79.0px;top:829.4px;width:8.0px;height:1.0px;background:#565656;"></div>
<svg style="position:absolute;left:88.0px;top:823.4px;" width="14" height="11" viewBox="0 0 14 11"><path d="M0.500 5.500c3-5.500 10-5.500 13 0c-3 5.500-10 5.500-13 0z" fill="#e4e4e4"/><circle cx="7" cy="5.500" r="3.300" fill="#3c3c3c"/><circle cx="7" cy="5.500" r="1.600" fill="#e4e4e4"/><circle cx="7.600" cy="5.500" r="1" fill="#3c3c3c"/></svg>
<svg style="position:absolute;left:104.5px;top:823.4px;" width="11" height="11" viewBox="0 0 11 11"><circle cx="5.300" cy="5.300" r="5.200" fill="#dcdcdc"/></svg>
<div style="position:absolute;top:821.7px;height:17px;line-height:17px;font-size:12.00px;color:#f0f0f0;white-space:pre;letter-spacing:-0.531px;left:122.4px;">Art_Image_02</div>
<svg style="position:absolute;left:272.0px;top:822.4px;" width="14" height="14" viewBox="0 0 14 14"><g transform="translate(7 7) scale(1)" stroke="#3e3e3e" stroke-width="1.100" fill="none"><path d="M0 -6v12M-5.200 -3l10.400 6M-5.200 3l10.400 -6M-1.800 -4.500l1.800 1.500 1.800-1.500M-1.800 4.500l1.800-1.500 1.800 1.500"/></g></svg>
<div style="position:absolute;left:119.0px;top:839.0px;width:201.5px;height:17.4px;background:#4b4b4b;"></div>
<div style="position:absolute;left:239.2px;top:839.0px;width:1.6px;height:17.4px;background:#444;"></div>
<div style="position:absolute;left:79.0px;top:847.4px;width:8.0px;height:1.0px;background:#565656;"></div>
<svg style="position:absolute;left:88.0px;top:841.4px;" width="14" height="11" viewBox="0 0 14 11"><path d="M0.500 5.500c3-5.500 10-5.500 13 0c-3 5.500-10 5.500-13 0z" fill="#e4e4e4"/><circle cx="7" cy="5.500" r="3.300" fill="#3c3c3c"/><circle cx="7" cy="5.500" r="1.600" fill="#e4e4e4"/><circle cx="7.600" cy="5.500" r="1" fill="#3c3c3c"/></svg>
<svg style="position:absolute;left:104.5px;top:841.4px;" width="11" height="11" viewBox="0 0 11 11"><circle cx="5.300" cy="5.300" r="5.200" fill="#dcdcdc"/></svg>
<div style="position:absolute;top:839.7px;height:17px;line-height:17px;font-size:12.00px;color:#f0f0f0;white-space:pre;letter-spacing:-0.531px;left:122.4px;">Art_Image_03</div>
<svg style="position:absolute;left:272.0px;top:840.4px;" width="14" height="14" viewBox="0 0 14 14"><g transform="translate(7 7) scale(1)" stroke="#3e3e3e" stroke-width="1.100" fill="none"><path d="M0 -6v12M-5.200 -3l10.400 6M-5.200 3l10.400 -6M-1.800 -4.500l1.800 1.500 1.800-1.500M-1.800 4.500l1.800-1.500 1.800 1.500"/></g></svg>
<div style="position:absolute;left:119.0px;top:857.0px;width:201.5px;height:17.4px;background:#5a5a5a;"></div>
<div style="position:absolute;left:239.2px;top:857.0px;width:1.6px;height:17.4px;background:#444;"></div>
<div style="position:absolute;left:79.0px;top:865.4px;width:8.0px;height:1.0px;background:#565656;"></div>
<svg style="position:absolute;left:88.0px;top:859.4px;" width="14" height="11" viewBox="0 0 14 11"><path d="M0.500 5.500c3-5.500 10-5.500 13 0c-3 5.500-10 5.500-13 0z" fill="#e4e4e4"/><circle cx="7" cy="5.500" r="3.300" fill="#3c3c3c"/><circle cx="7" cy="5.500" r="1.600" fill="#e4e4e4"/><circle cx="7.600" cy="5.500" r="1" fill="#3c3c3c"/></svg>
<svg style="position:absolute;left:104.5px;top:859.4px;" width="11" height="11" viewBox="0 0 11 11"><circle cx="5.300" cy="5.300" r="5.200" fill="#dcdcdc"/></svg>
<div style="position:absolute;top:857.7px;height:17px;line-height:17px;font-size:12.00px;color:#f0f0f0;white-space:pre;letter-spacing:-0.531px;left:122.4px;">Art_Image_04</div>
<svg style="position:absolute;left:272.0px;top:858.4px;" width="14" height="14" viewBox="0 0 14 14"><g transform="translate(7 7) scale(1)" stroke="#3e3e3e" stroke-width="1.100" fill="none"><path d="M0 -6v12M-5.200 -3l10.400 6M-5.200 3l10.400 -6M-1.800 -4.500l1.800 1.500 1.800-1.500M-1.800 4.500l1.800-1.500 1.800 1.500"/></g></svg>
<div style="position:absolute;left:119.0px;top:875.0px;width:201.5px;height:17.4px;background:#4b4b4b;"></div>
<div style="position:absolute;left:239.2px;top:875.0px;width:1.6px;height:17.4px;background:#444;"></div>
<div style="position:absolute;left:79.0px;top:883.4px;width:8.0px;height:1.0px;background:#565656;"></div>
<svg style="position:absolute;left:88.0px;top:877.4px;" width="14" height="11" viewBox="0 0 14 11"><path d="M0.500 5.500c3-5.500 10-5.500 13 0c-3 5.500-10 5.500-13 0z" fill="#e4e4e4"/><circle cx="7" cy="5.500" r="3.300" fill="#3c3c3c"/><circle cx="7" cy="5.500" r="1.600" fill="#e4e4e4"/><circle cx="7.600" cy="5.500" r="1" fill="#3c3c3c"/></svg>
<svg style="position:absolute;left:104.5px;top:877.4px;" width="11" height="11" viewBox="0 0 11 11"><circle cx="5.300" cy="5.300" r="5.200" fill="#dcdcdc"/></svg>
<div style="position:absolute;top:875.7px;height:17px;line-height:17px;font-size:12.00px;color:#f0f0f0;white-space:pre;letter-spacing:-0.531px;left:122.4px;">Art_Image_05</div>
<svg style="position:absolute;left:272.0px;top:876.4px;" width="14" height="14" viewBox="0 0 14 14"><g transform="translate(7 7) scale(1)" stroke="#3e3e3e" stroke-width="1.100" fill="none"><path d="M0 -6v12M-5.200 -3l10.400 6M-5.200 3l10.400 -6M-1.800 -4.500l1.800 1.500 1.800-1.500M-1.800 4.500l1.800-1.500 1.800 1.500"/></g></svg>
<div style="position:absolute;left:119.0px;top:893.0px;width:201.5px;height:17.4px;background:#5a5a5a;"></div>
<div style="position:absolute;left:239.2px;top:893.0px;width:1.6px;height:17.4px;background:#444;"></div>
<div style="position:absolute;left:79.0px;top:901.4px;width:8.0px;height:1.0px;background:#565656;"></div>
<svg style="position:absolute;left:88.0px;top:895.4px;" width="14" height="11" viewBox="0 0 14 11"><path d="M0.500 5.500c3-5.500 10-5.500 13 0c-3 5.500-10 5.500-13 0z" fill="#e4e4e4"/><circle cx="7" cy="5.500" r="3.300" fill="#3c3c3c"/><circle cx="7" cy="5.500" r="1.600" fill="#e4e4e4"/><circle cx="7.600" cy="5.500" r="1" fill="#3c3c3c"/></svg>
<svg style="position:absolute;left:104.5px;top:895.4px;" width="11" height="11" viewBox="0 0 11 11"><circle cx="5.300" cy="5.300" r="5.200" fill="#dcdcdc"/></svg>
<div style="position:absolute;top:893.7px;height:17px;line-height:17px;font-size:12.00px;color:#f0f0f0;white-space:pre;letter-spacing:-0.531px;left:122.4px;">Art_Image_06</div>
<svg style="position:absolute;left:272.0px;top:894.4px;" width="14" height="14" viewBox="0 0 14 14"><g transform="translate(7 7) scale(1)" stroke="#3e3e3e" stroke-width="1.100" fill="none"><path d="M0 -6v12M-5.200 -3l10.400 6M-5.200 3l10.400 -6M-1.800 -4.500l1.800 1.500 1.800-1.500M-1.800 4.500l1.800-1.500 1.800 1.500"/></g></svg>
<div style="position:absolute;left:119.0px;top:911.0px;width:201.5px;height:17.4px;background:#4b4b4b;"></div>
<div style="position:absolute;left:239.2px;top:911.0px;width:1.6px;height:17.4px;background:#444;"></div>
<div style="position:absolute;left:79.0px;top:919.4px;width:8.0px;height:1.0px;background:#565656;"></div>
<svg style="position:absolute;left:88.0px;top:913.4px;" width="14" height="11" viewBox="0 0 14 11"><path d="M0.500 5.500c3-5.500 10-5.500 13 0c-3 5.500-10 5.500-13 0z" fill="#e4e4e4"/><circle cx="7" cy="5.500" r="3.300" fill="#3c3c3c"/><circle cx="7" cy="5.500" r="1.600" fill="#e4e4e4"/><circle cx="7.600" cy="5.500" r="1" fill="#3c3c3c"/></svg>
<svg style="position:absolute;left:104.5px;top:913.4px;" width="11" height="11" viewBox="0 0 11 11"><circle cx="5.300" cy="5.300" r="5.200" fill="#dcdcdc"/></svg>
<div style="position:absolute;top:911.7px;height:17px;line-height:17px;font-size:12.00px;color:#f0f0f0;white-space:pre;letter-spacing:-0.540px;left:122.4px;">Art_Stone</div>
<svg style="position:absolute;left:272.0px;top:912.4px;" width="14" height="14" viewBox="0 0 14 14"><g transform="translate(7 7) scale(1)" stroke="#3e3e3e" stroke-width="1.100" fill="none"><path d="M0 -6v12M-5.200 -3l10.400 6M-5.200 3l10.400 -6M-1.800 -4.500l1.800 1.500 1.800-1.500M-1.800 4.500l1.800-1.500 1.800 1.500"/></g></svg>
<div style="position:absolute;left:119.0px;top:929.0px;width:201.5px;height:17.4px;background:#5a5a5a;"></div>
<div style="position:absolute;left:239.2px;top:929.0px;width:1.6px;height:17.4px;background:#444;"></div>
<div style="position:absolute;left:79.0px;top:937.4px;width:8.0px;height:1.0px;background:#565656;"></div>
<svg style="position:absolute;left:88.0px;top:931.4px;" width="14" height="11" viewBox="0 0 14 11"><path d="M0.500 5.500c3-5.500 10-5.500 13 0c-3 5.500-10 5.500-13 0z" fill="#e4e4e4"/><circle cx="7" cy="5.500" r="3.300" fill="#3c3c3c"/><circle cx="7" cy="5.500" r="1.600" fill="#e4e4e4"/><circle cx="7.600" cy="5.500" r="1" fill="#3c3c3c"/></svg>
<svg style="position:absolute;left:104.5px;top:931.4px;" width="11" height="11" viewBox="0 0 11 11"><circle cx="5.300" cy="5.300" r="5.200" fill="#dcdcdc"/></svg>
<div style="position:absolute;top:929.7px;height:17px;line-height:17px;font-size:12.00px;color:#f0f0f0;white-space:pre;letter-spacing:-0.782px;left:122.4px;">Baseboard</div>
<svg style="position:absolute;left:272.0px;top:930.4px;" width="14" height="14" viewBox="0 0 14 14"><g transform="translate(7 7) scale(1)" stroke="#3e3e3e" stroke-width="1.100" fill="none"><path d="M0 -6v12M-5.200 -3l10.400 6M-5.200 3l10.400 -6M-1.800 -4.500l1.800 1.500 1.800-1.500M-1.800 4.500l1.800-1.500 1.800 1.500"/></g></svg>
<div style="position:absolute;left:119.0px;top:947.0px;width:201.5px;height:17.4px;background:#4b4b4b;"></div>
<div style="position:absolute;left:239.2px;top:947.0px;width:1.6px;height:17.4px;background:#444;"></div>
<div style="position:absolute;left:79.0px;top:955.4px;width:8.0px;height:1.0px;background:#565656;"></div>
<svg style="position:absolute;left:88.0px;top:949.4px;" width="14" height="11" viewBox="0 0 14 11"><path d="M0.500 5.500c3-5.500 10-5.500 13 0c-3 5.500-10 5.500-13 0z" fill="#e4e4e4"/><circle cx="7" cy="5.500" r="3.300" fill="#3c3c3c"/><circle cx="7" cy="5.500" r="1.600" fill="#e4e4e4"/><circle cx="7.600" cy="5.500" r="1" fill="#3c3c3c"/></svg>
<svg style="position:absolute;left:104.5px;top:949.4px;" width="11" height="11" viewBox="0 0 11 11"><circle cx="5.300" cy="5.300" r="5.200" fill="#dcdcdc"/></svg>
<div style="position:absolute;top:947.7px;height:17px;line-height:17px;font-size:12.00px;color:#f0f0f0;white-space:pre;letter-spacing:-0.697px;left:122.4px;">Basket</div>
<svg style="position:absolute;left:272.0px;top:948.4px;" width="14" height="14" viewBox="0 0 14 14"><g transform="translate(7 7) scale(1)" stroke="#3e3e3e" stroke-width="1.100" fill="none"><path d="M0 -6v12M-5.200 -3l10.400 6M-5.200 3l10.400 -6M-1.800 -4.500l1.800 1.500 1.800-1.500M-1.800 4.500l1.800-1.500 1.800 1.500"/></g></svg>
<div style="position:absolute;left:119.0px;top:965.0px;width:201.5px;height:17.4px;background:#5a5a5a;"></div>
<div style="position:absolute;left:239.2px;top:965.0px;width:1.6px;height:17.4px;background:#444;"></div>
<div style="position:absolute;left:79.0px;top:973.4px;width:8.0px;height:1.0px;background:#565656;"></div>
<svg style="position:absolute;left:88.0px;top:967.4px;" width="14" height="11" viewBox="0 0 14 11"><path d="M0.500 5.500c3-5.500 10-5.500 13 0c-3 5.500-10 5.500-13 0z" fill="#e4e4e4"/><circle cx="7" cy="5.500" r="3.300" fill="#3c3c3c"/><circle cx="7" cy="5.500" r="1.600" fill="#e4e4e4"/><circle cx="7.600" cy="5.500" r="1" fill="#3c3c3c"/></svg>
<svg style="position:absolute;left:104.5px;top:967.4px;" width="11" height="11" viewBox="0 0 11 11"><circle cx="5.300" cy="5.300" r="5.200" fill="#dcdcdc"/></svg>
<div style="position:absolute;top:965.7px;height:17px;line-height:17px;font-size:12.00px;color:#f0f0f0;white-space:pre;letter-spacing:-1.005px;left:122.4px;">Bench</div>
<svg style="position:absolute;left:272.0px;top:966.4px;" width="14" height="14" viewBox="0 0 14 14"><g transform="translate(7 7) scale(1)" stroke="#3e3e3e" stroke-width="1.100" fill="none"><path d="M0 -6v12M-5.200 -3l10.400 6M-5.200 3l10.400 -6M-1.800 -4.500l1.800 1.500 1.800-1.500M-1.800 4.500l1.800-1.500 1.800 1.500"/></g></svg>
<div style="position:absolute;left:119.0px;top:983.0px;width:201.5px;height:17.4px;background:#4b4b4b;"></div>
<div style="position:absolute;left:239.2px;top:983.0px;width:1.6px;height:17.4px;background:#444;"></div>
<div style="position:absolute;left:79.0px;top:991.4px;width:8.0px;height:1.0px;background:#565656;"></div>
<svg style="position:absolute;left:88.0px;top:985.4px;" width="14" height="11" viewBox="0 0 14 11"><path d="M0.500 5.500c3-5.500 10-5.500 13 0c-3 5.500-10 5.500-13 0z" fill="#e4e4e4"/><circle cx="7" cy="5.500" r="3.300" fill="#3c3c3c"/><circle cx="7" cy="5.500" r="1.600" fill="#e4e4e4"/><circle cx="7.600" cy="5.500" r="1" fill="#3c3c3c"/></svg>
<svg style="position:absolute;left:104.5px;top:985.4px;" width="11" height="11" viewBox="0 0 11 11"><circle cx="5.300" cy="5.300" r="5.200" fill="#dcdcdc"/></svg>
<div style="position:absolute;top:983.7px;height:17px;line-height:17px;font-size:12.00px;color:#f0f0f0;white-space:pre;letter-spacing:-0.538px;left:122.4px;">Big Coffee Table</div>
<svg style="position:absolute;left:272.0px;top:984.4px;" width="14" height="14" viewBox="0 0 14 14"><g transform="translate(7 7) scale(1)" stroke="#3e3e3e" stroke-width="1.100" fill="none"><path d="M0 -6v12M-5.200 -3l10.400 6M-5.200 3l10.400 -6M-1.800 -4.500l1.800 1.500 1.800-1.500M-1.800 4.500l1.800-1.500 1.800 1.500"/></g></svg>
<div style="position:absolute;left:119.0px;top:1001.0px;width:201.5px;height:17.4px;background:#5a5a5a;"></div>
<div style="position:absolute;left:239.2px;top:1001.0px;width:1.6px;height:17.4px;background:#444;"></div>
<div style="position:absolute;left:79.0px;top:1009.4px;width:8.0px;height:1.0px;background:#565656;"></div>
<svg style="position:absolute;left:88.0px;top:1003.4px;" width="14" height="11" viewBox="0 0 14 11"><path d="M0.500 5.500c3-5.500 10-5.500 13 0c-3 5.500-10 5.500-13 0z" fill="#e4e4e4"/><circle cx="7" cy="5.500" r="3.300" fill="#3c3c3c"/><circle cx="7" cy="5.500" r="1.600" fill="#e4e4e4"/><circle cx="7.600" cy="5.500" r="1" fill="#3c3c3c"/></svg>
<svg style="position:absolute;left:104.5px;top:1003.4px;" width="11" height="11" viewBox="0 0 11 11"><circle cx="5.300" cy="5.300" r="5.200" fill="#dcdcdc"/></svg>
<div style="position:absolute;top:1001.7px;height:17px;line-height:17px;font-size:12.00px;color:#f0f0f0;white-space:pre;letter-spacing:-0.725px;left:122.4px;">Big Plant</div>
<svg style="position:absolute;left:272.0px;top:1002.4px;" width="14" height="14" viewBox="0 0 14 14"><g transform="translate(7 7) scale(1)" stroke="#3e3e3e" stroke-width="1.100" fill="none"><path d="M0 -6v12M-5.200 -3l10.400 6M-5.200 3l10.400 -6M-1.800 -4.500l1.800 1.500 1.800-1.500M-1.800 4.500l1.800-1.500 1.800 1.500"/></g></svg>
<div style="position:absolute;left:119.0px;top:1019.0px;width:201.5px;height:17.4px;background:#4b4b4b;"></div>
<div style="position:absolute;left:239.2px;top:1019.0px;width:1.6px;height:17.4px;background:#444;"></div>
<div style="position:absolute;left:79.0px;top:1027.4px;width:8.0px;height:1.0px;background:#565656;"></div>
<svg style="position:absolute;left:88.0px;top:1021.4px;" width="14" height="11" viewBox="0 0 14 11"><path d="M0.500 5.500c3-5.500 10-5.500 13 0c-3 5.500-10 5.500-13 0z" fill="#e4e4e4"/><circle cx="7" cy="5.500" r="3.300" fill="#3c3c3c"/><circle cx="7" cy="5.500" r="1.600" fill="#e4e4e4"/><circle cx="7.600" cy="5.500" r="1" fill="#3c3c3c"/></svg>
<svg style="position:absolute;left:104.5px;top:1021.4px;" width="11" height="11" viewBox="0 0 11 11"><circle cx="5.300" cy="5.300" r="5.200" fill="#dcdcdc"/></svg>
<div style="position:absolute;top:1019.7px;height:17px;line-height:17px;font-size:12.00px;color:#f0f0f0;white-space:pre;letter-spacing:-1.070px;left:122.4px;">Books</div>
<svg style="position:absolute;left:272.0px;top:1020.4px;" width="14" height="14" viewBox="0 0 14 14"><g transform="translate(7 7) scale(1)" stroke="#3e3e3e" stroke-width="1.100" fill="none"><path d="M0 -6v12M-5.200 -3l10.400 6M-5.200 3l10.400 -6M-1.800 -4.500l1.800 1.500 1.800-1.500M-1.800 4.500l1.800-1.500 1.800 1.500"/></g></svg>
<div style="position:absolute;left:119.0px;top:1037.0px;width:201.5px;height:17.4px;background:#5a5a5a;"></div>
<div style="position:absolute;left:239.2px;top:1037.0px;width:1.6px;height:17.4px;background:#444;"></div>
<div style="position:absolute;left:79.0px;top:1045.4px;width:8.0px;height:1.0px;background:#565656;"></div>
<svg style="position:absolute;left:88.0px;top:1039.4px;" width="14" height="11" viewBox="0 0 14 11"><path d="M0.500 5.500c3-5.500 10-5.500 13 0c-3 5.500-10 5.500-13 0z" fill="#e4e4e4"/><circle cx="7" cy="5.500" r="3.300" fill="#3c3c3c"/><circle cx="7" cy="5.500" r="1.600" fill="#e4e4e4"/><circle cx="7.600" cy="5.500" r="1" fill="#3c3c3c"/></svg>
<svg style="position:absolute;left:104.5px;top:1039.4px;" width="11" height="11" viewBox="0 0 11 11"><circle cx="5.300" cy="5.300" r="5.200" fill="#dcdcdc"/></svg>
<div style="position:absolute;top:1037.7px;height:17px;line-height:17px;font-size:12.00px;color:#f0f0f0;white-space:pre;letter-spacing:-0.633px;left:122.4px;">Bookshelf</div>
<svg style="position:absolute;left:272.0px;top:1038.4px;" width="14" height="14" viewBox="0 0 14 14"><g transform="translate(7 7) scale(1)" stroke="#3e3e3e" stroke-width="1.100" fill="none"><path d="M0 -6v12M-5.200 -3l10.400 6M-5.200 3l10.400 -6M-1.800 -4.500l1.800 1.500 1.800-1.500M-1.800 4.500l1.800-1.500 1.800 1.500"/></g></svg>
<div style="position:absolute;left:119.0px;top:1055.0px;width:201.5px;height:17.4px;background:#4b4b4b;"></div>
<div style="position:absolute;left:239.2px;top:1055.0px;width:1.6px;height:17.4px;background:#444;"></div>
<div style="position:absolute;left:79.0px;top:1063.4px;width:8.0px;height:1.0px;background:#565656;"></div>
<svg style="position:absolute;left:88.0px;top:1057.4px;" width="14" height="11" viewBox="0 0 14 11"><path d="M0.500 5.500c3-5.500 10-5.500 13 0c-3 5.500-10 5.500-13 0z" fill="#e4e4e4"/><circle cx="7" cy="5.500" r="3.300" fill="#3c3c3c"/><circle cx="7" cy="5.500" r="1.600" fill="#e4e4e4"/><circle cx="7.600" cy="5.500" r="1" fill="#3c3c3c"/></svg>
<svg style="position:absolute;left:104.5px;top:1057.4px;" width="11" height="11" viewBox="0 0 11 11"><circle cx="5.300" cy="5.300" r="5.200" fill="#dcdcdc"/></svg>
<div style="position:absolute;top:1055.7px;height:17px;line-height:17px;font-size:12.00px;color:#f0f0f0;white-space:pre;letter-spacing:-0.870px;left:122.4px;">Boxes</div>
<svg style="position:absolute;left:272.0px;top:1056.4px;" width="14" height="14" viewBox="0 0 14 14"><g transform="translate(7 7) scale(1)" stroke="#3e3e3e" stroke-width="1.100" fill="none"><path d="M0 -6v12M-5.200 -3l10.400 6M-5.200 3l10.400 -6M-1.800 -4.500l1.800 1.500 1.800-1.500M-1.800 4.500l1.800-1.500 1.800 1.500"/></g></svg>
<div style="position:absolute;left:119.0px;top:1073.0px;width:201.5px;height:17.4px;background:#5a5a5a;"></div>
<div style="position:absolute;left:239.2px;top:1073.0px;width:1.6px;height:17.4px;background:#444;"></div>
<div style="position:absolute;left:79.0px;top:1081.4px;width:8.0px;height:1.0px;background:#565656;"></div>
<svg style="position:absolute;left:88.0px;top:1075.4px;" width="14" height="11" viewBox="0 0 14 11"><path d="M0.500 5.500c3-5.500 10-5.500 13 0c-3 5.500-10 5.500-13 0z" fill="#e4e4e4"/><circle cx="7" cy="5.500" r="3.300" fill="#3c3c3c"/><circle cx="7" cy="5.500" r="1.600" fill="#e4e4e4"/><circle cx="7.600" cy="5.500" r="1" fill="#3c3c3c"/></svg>
<svg style="position:absolute;left:104.5px;top:1075.4px;" width="11" height="11" viewBox="0 0 11 11"><circle cx="5.300" cy="5.300" r="5.200" fill="#dcdcdc"/></svg>
<div style="position:absolute;top:1073.7px;height:17px;line-height:17px;font-size:12.00px;color:#f0f0f0;white-space:pre;letter-spacing:-0.588px;left:122.4px;">Cabinet_01</div>
<svg style="position:absolute;left:272.0px;top:1074.4px;" width="14" height="14" viewBox="0 0 14 14"><g transform="translate(7 7) scale(1)" stroke="#3e3e3e" stroke-width="1.100" fill="none"><path d="M0 -6v12M-5.200 -3l10.400 6M-5.200 3l10.400 -6M-1.800 -4.500l1.800 1.500 1.800-1.500M-1.800 4.500l1.800-1.500 1.800 1.500"/></g></svg>
<div style="position:absolute;left:119.0px;top:1091.0px;width:201.5px;height:17.4px;background:#4b4b4b;"></div>
<div style="position:absolute;left:239.2px;top:1091.0px;width:1.6px;height:17.4px;background:#444;"></div>
<div style="position:absolute;left:79.0px;top:1099.4px;width:8.0px;height:1.0px;background:#565656;"></div>
<svg style="position:absolute;left:88.0px;top:1093.4px;" width="14" height="11" viewBox="0 0 14 11"><path d="M0.500 5.500c3-5.500 10-5.500 13 0c-3 5.500-10 5.500-13 0z" fill="#e4e4e4"/><circle cx="7" cy="5.500" r="3.300" fill="#3c3c3c"/><circle cx="7" cy="5.500" r="1.600" fill="#e4e4e4"/><circle cx="7.600" cy="5.500" r="1" fill="#3c3c3c"/></svg>
<svg style="position:absolute;left:104.5px;top:1093.4px;" width="11" height="11" viewBox="0 0 11 11"><circle cx="5.300" cy="5.300" r="5.200" fill="#dcdcdc"/></svg>
<div style="position:absolute;top:1091.7px;height:17px;line-height:17px;font-size:12.00px;color:#f0f0f0;white-space:pre;letter-spacing:-0.588px;left:122.4px;">Cabinet_02</div>
<svg style="position:absolute;left:272.0px;top:1092.4px;" width="14" height="14" viewBox="0 0 14 14"><g transform="translate(7 7) scale(1)" stroke="#3e3e3e" stroke-width="1.100" fill="none"><path d="M0 -6v12M-5.200 -3l10.400 6M-5.200 3l10.400 -6M-1.800 -4.500l1.800 1.500 1.800-1.500M-1.800 4.500l1.800-1.500 1.800 1.500"/></g></svg>
<div style="position:absolute;left:119.0px;top:1109.0px;width:201.5px;height:17.4px;background:#5a5a5a;"></div>
<div style="position:absolute;left:239.2px;top:1109.0px;width:1.6px;height:17.4px;background:#444;"></div>
<div style="position:absolute;left:79.0px;top:1117.4px;width:8.0px;height:1.0px;background:#565656;"></div>
<svg style="position:absolute;left:88.0px;top:1111.4px;" width="14" height="11" viewBox="0 0 14 11"><path d="M0.500 5.500c3-5.500 10-5.500 13 0c-3 5.500-10 5.500-13 0z" fill="#e4e4e4"/><circle cx="7" cy="5.500" r="3.300" fill="#3c3c3c"/><circle cx="7" cy="5.500" r="1.600" fill="#e4e4e4"/><circle cx="7.600" cy="5.500" r="1" fill="#3c3c3c"/></svg>
<svg style="position:absolute;left:104.5px;top:1111.4px;" width="11" height="11" viewBox="0 0 11 11"><circle cx="5.300" cy="5.300" r="5.200" fill="#dcdcdc"/></svg>
<div style="position:absolute;top:1109.7px;height:17px;line-height:17px;font-size:12.00px;color:#f0f0f0;white-space:pre;letter-spacing:-0.770px;left:122.4px;">Cake Plate</div>
<svg style="position:absolute;left:272.0px;top:1110.4px;" width="14" height="14" viewBox="0 0 14 14"><g transform="translate(7 7) scale(1)" stroke="#3e3e3e" stroke-width="1.100" fill="none"><path d="M0 -6v12M-5.200 -3l10.400 6M-5.200 3l10.400 -6M-1.800 -4.500l1.800 1.500 1.800-1.500M-1.800 4.500l1.800-1.500 1.800 1.500"/></g></svg>
<div style="position:absolute;left:119.0px;top:1127.0px;width:201.5px;height:17.4px;background:#4b4b4b;"></div>
<div style="position:absolute;left:239.2px;top:1127.0px;width:1.6px;height:17.4px;background:#444;"></div>
<div style="position:absolute;left:79.0px;top:1135.4px;width:8.0px;height:1.0px;background:#565656;"></div>
<svg style="position:absolute;left:88.0px;top:1129.4px;" width="14" height="11" viewBox="0 0 14 11"><path d="M0.500 5.500c3-5.500 10-5.500 13 0c-3 5.500-10 5.500-13 0z" fill="#e4e4e4"/><circle cx="7" cy="5.500" r="3.300" fill="#3c3c3c"/><circle cx="7" cy="5.500" r="1.600" fill="#e4e4e4"/><circle cx="7.600" cy="5.500" r="1" fill="#3c3c3c"/></svg>
<svg style="position:absolute;left:104.5px;top:1129.4px;" width="11" height="11" viewBox="0 0 11 11"><circle cx="5.300" cy="5.300" r="5.200" fill="#dcdcdc"/></svg>
<div style="position:absolute;top:1127.7px;height:17px;line-height:17px;font-size:12.00px;color:#f0f0f0;white-space:pre;letter-spacing:-0.419px;left:122.4px;">Carpet</div>
<svg style="position:absolute;left:272.0px;top:1128.4px;" width="14" height="14" viewBox="0 0 14 14"><g transform="translate(7 7) scale(1)" stroke="#3e3e3e" stroke-width="1.100" fill="none"><path d="M0 -6v12M-5.200 -3l10.400 6M-5.200 3l10.400 -6M-1.800 -4.500l1.800 1.500 1.800-1.500M-1.800 4.500l1.800-1.500 1.800 1.500"/></g></svg>
<div style="position:absolute;left:119.0px;top:1145.0px;width:201.5px;height:17.4px;background:#5a5a5a;"></div>
<div style="position:absolute;left:239.2px;top:1145.0px;width:1.6px;height:17.4px;background:#444;"></div>
<div style="position:absolute;left:79.0px;top:1153.4px;width:8.0px;height:1.0px;background:#565656;"></div>
<svg style="position:absolute;left:88.0px;top:1147.4px;" width="14" height="11" viewBox="0 0 14 11"><path d="M0.500 5.500c3-5.500 10-5.500 13 0c-3 5.500-10 5.500-13 0z" fill="#e4e4e4"/><circle cx="7" cy="5.500" r="3.300" fill="#3c3c3c"/><circle cx="7" cy="5.500" r="1.600" fill="#e4e4e4"/><circle cx="7.600" cy="5.500" r="1" fill="#3c3c3c"/></svg>
<svg style="position:absolute;left:104.5px;top:1147.4px;" width="11" height="11" viewBox="0 0 11 11"><circle cx="5.300" cy="5.300" r="5.200" fill="#dcdcdc"/></svg>
<div style="position:absolute;top:1145.7px;height:17px;line-height:17px;font-size:12.00px;color:#f0f0f0;white-space:pre;letter-spacing:-0.812px;left:122.4px;">Ceiling</div>
<svg style="position:absolute;left:272.0px;top:1146.4px;" width="14" height="14" viewBox="0 0 14 14"><g transform="translate(7 7) scale(1)" stroke="#3e3e3e" stroke-width="1.100" fill="none"><path d="M0 -6v12M-5.200 -3l10.400 6M-5.200 3l10.400 -6M-1.800 -4.500l1.800 1.500 1.800-1.500M-1.800 4.500l1.800-1.500 1.800 1.500"/></g></svg>
<div style="position:absolute;left:119.0px;top:1163.0px;width:201.5px;height:17.4px;background:#4b4b4b;"></div>
<div style="position:absolute;left:239.2px;top:1163.0px;width:1.6px;height:17.4px;background:#444;"></div>
<div style="position:absolute;left:79.0px;top:1171.4px;width:8.0px;height:1.0px;background:#565656;"></div>
<svg style="position:absolute;left:88.0px;top:1165.4px;" width="14" height="11" viewBox="0 0 14 11"><path d="M0.500 5.500c3-5.500 10-5.500 13 0c-3 5.500-10 5.500-13 0z" fill="#e4e4e4"/><circle cx="7" cy="5.500" r="3.300" fill="#3c3c3c"/><circle cx="7" cy="5.500" r="1.600" fill="#e4e4e4"/><circle cx="7.600" cy="5.500" r="1" fill="#3c3c3c"/></svg>
<svg style="position:absolute;left:104.5px;top:1165.4px;" width="11" height="11" viewBox="0 0 11 11"><circle cx="5.300" cy="5.300" r="5.200" fill="#dcdcdc"/></svg>
<div style="position:absolute;top:1163.7px;height:17px;line-height:17px;font-size:12.00px;color:#f0f0f0;white-space:pre;letter-spacing:-0.919px;left:122.4px;">Ceiling Lamp</div>
<svg style="position:absolute;left:272.0px;top:1164.4px;" width="14" height="14" viewBox="0 0 14 14"><g transform="translate(7 7) scale(1)" stroke="#3e3e3e" stroke-width="1.100" fill="none"><path d="M0 -6v12M-5.200 -3l10.400 6M-5.200 3l10.400 -6M-1.800 -4.500l1.800 1.500 1.800-1.500M-1.800 4.500l1.800-1.500 1.800 1.500"/></g></svg>
<div style="position:absolute;left:119.0px;top:1181.0px;width:201.5px;height:17.4px;background:#5a5a5a;"></div>
<div style="position:absolute;left:239.2px;top:1181.0px;width:1.6px;height:17.4px;background:#444;"></div>
<div style="position:absolute;left:79.0px;top:1189.4px;width:8.0px;height:1.0px;background:#565656;"></div>
<svg style="position:absolute;left:88.0px;top:1183.4px;" width="14" height="11" viewBox="0 0 14 11"><path d="M0.500 5.500c3-5.500 10-5.500 13 0c-3 5.500-10 5.500-13 0z" fill="#e4e4e4"/><circle cx="7" cy="5.500" r="3.300" fill="#3c3c3c"/><circle cx="7" cy="5.500" r="1.600" fill="#e4e4e4"/><circle cx="7.600" cy="5.500" r="1" fill="#3c3c3c"/></svg>
<svg style="position:absolute;left:104.5px;top:1183.4px;" width="11" height="11" viewBox="0 0 11 11"><circle cx="5.300" cy="5.300" r="5.200" fill="#dcdcdc"/></svg>
<div style="position:absolute;top:1181.7px;height:17px;line-height:17px;font-size:12.00px;color:#f0f0f0;white-space:pre;letter-spacing:-0.901px;left:122.4px;">Clock</div>
<svg style="position:absolute;left:272.0px;top:1182.4px;" width="14" height="14" viewBox="0 0 14 14"><g transform="translate(7 7) scale(1)" stroke="#3e3e3e" stroke-width="1.100" fill="none"><path d="M0 -6v12M-5.200 -3l10.400 6M-5.200 3l10.400 -6M-1.800 -4.500l1.800 1.500 1.800-1.500M-1.800 4.500l1.800-1.500 1.800 1.500"/></g></svg>
<div style="position:absolute;left:119.0px;top:1199.0px;width:201.5px;height:17.4px;background:#4b4b4b;"></div>
<div style="position:absolute;left:239.2px;top:1199.0px;width:1.6px;height:17.4px;background:#444;"></div>
<div style="position:absolute;left:79.0px;top:1207.4px;width:8.0px;height:1.0px;background:#565656;"></div>
<svg style="position:absolute;left:88.0px;top:1201.4px;" width="14" height="11" viewBox="0 0 14 11"><path d="M0.500 5.500c3-5.500 10-5.500 13 0c-3 5.500-10 5.500-13 0z" fill="#e4e4e4"/><circle cx="7" cy="5.500" r="3.300" fill="#3c3c3c"/><circle cx="7" cy="5.500" r="1.600" fill="#e4e4e4"/><circle cx="7.600" cy="5.500" r="1" fill="#3c3c3c"/></svg>
<svg style="position:absolute;left:104.5px;top:1201.4px;" width="11" height="11" viewBox="0 0 11 11"><circle cx="5.300" cy="5.300" r="5.200" fill="#dcdcdc"/></svg>
<div style="position:absolute;top:1199.7px;height:17px;line-height:17px;font-size:12.00px;color:#f0f0f0;white-space:pre;letter-spacing:-0.548px;left:122.4px;">Coffee Cup</div>
<svg style="position:absolute;left:272.0px;top:1200.4px;" width="14" height="14" viewBox="0 0 14 14"><g transform="translate(7 7) scale(1)" stroke="#3e3e3e" stroke-width="1.100" fill="none"><path d="M0 -6v12M-5.200 -3l10.400 6M-5.200 3l10.400 -6M-1.800 -4.500l1.800 1.500 1.800-1.500M-1.800 4.500l1.800-1.500 1.800 1.500"/></g></svg>
<div style="position:absolute;left:119.0px;top:1217.0px;width:201.5px;height:17.4px;background:#5a5a5a;"></div>
<div style="position:absolute;left:239.2px;top:1217.0px;width:1.6px;height:17.4px;background:#444;"></div>
<div style="position:absolute;left:79.0px;top:1225.4px;width:8.0px;height:1.0px;background:#565656;"></div>
<svg style="position:absolute;left:88.0px;top:1219.4px;" width="14" height="11" viewBox="0 0 14 11"><path d="M0.500 5.500c3-5.500 10-5.500 13 0c-3 5.500-10 5.500-13 0z" fill="#e4e4e4"/><circle cx="7" cy="5.500" r="3.300" fill="#3c3c3c"/><circle cx="7" cy="5.500" r="1.600" fill="#e4e4e4"/><circle cx="7.600" cy="5.500" r="1" fill="#3c3c3c"/></svg>
<svg style="position:absolute;left:104.5px;top:1219.4px;" width="11" height="11" viewBox="0 0 11 11"><circle cx="5.300" cy="5.300" r="5.200" fill="#dcdcdc"/></svg>
<div style="position:absolute;top:1217.7px;height:17px;line-height:17px;font-size:12.00px;color:#f0f0f0;white-space:pre;letter-spacing:-0.771px;left:122.4px;">Crown Molding</div>
<svg style="position:absolute;left:272.0px;top:1218.4px;" width="14" height="14" viewBox="0 0 14 14"><g transform="translate(7 7) scale(1)" stroke="#3e3e3e" stroke-width="1.100" fill="none"><path d="M0 -6v12M-5.200 -3l10.400 6M-5.200 3l10.400 -6M-1.800 -4.500l1.800 1.500 1.800-1.500M-1.800 4.500l1.800-1.500 1.800 1.500"/></g></svg>
<div style="position:absolute;left:119.0px;top:1235.0px;width:201.5px;height:17.4px;background:#4b4b4b;"></div>
<div style="position:absolute;left:239.2px;top:1235.0px;width:1.6px;height:17.4px;background:#444;"></div>
<div style="position:absolute;left:79.0px;top:1243.4px;width:8.0px;height:1.0px;background:#565656;"></div>
<svg style="position:absolute;left:88.0px;top:1237.4px;" width="14" height="11" viewBox="0 0 14 11"><path d="M0.500 5.500c3-5.500 10-5.500 13 0c-3 5.500-10 5.500-13 0z" fill="#e4e4e4"/><circle cx="7" cy="5.500" r="3.300" fill="#3c3c3c"/><circle cx="7" cy="5.500" r="1.600" fill="#e4e4e4"/><circle cx="7.600" cy="5.500" r="1" fill="#3c3c3c"/></svg>
<svg style="position:absolute;left:104.5px;top:1237.4px;" width="11" height="11" viewBox="0 0 11 11"><circle cx="5.300" cy="5.300" r="5.200" fill="#dcdcdc"/></svg>
<div style="position:absolute;top:1235.7px;height:17px;line-height:17px;font-size:12.00px;color:#f0f0f0;white-space:pre;letter-spacing:-0.603px;left:122.4px;">Decoration</div>
<svg style="position:absolute;left:272.0px;top:1236.4px;" width="14" height="14" viewBox="0 0 14 14"><g transform="translate(7 7) scale(1)" stroke="#3e3e3e" stroke-width="1.100" fill="none"><path d="M0 -6v12M-5.200 -3l10.400 6M-5.200 3l10.400 -6M-1.800 -4.500l1.800 1.500 1.800-1.500M-1.800 4.500l1.800-1.500 1.800 1.500"/></g></svg>
<div style="position:absolute;left:119.0px;top:1253.0px;width:201.5px;height:17.4px;background:#5a5a5a;"></div>
<div style="position:absolute;left:239.2px;top:1253.0px;width:1.6px;height:17.4px;background:#444;"></div>
<div style="position:absolute;left:79.0px;top:1261.4px;width:8.0px;height:1.0px;background:#565656;"></div>
<svg style="position:absolute;left:88.0px;top:1255.4px;" width="14" height="11" viewBox="0 0 14 11"><path d="M0.500 5.500c3-5.500 10-5.500 13 0c-3 5.500-10 5.500-13 0z" fill="#e4e4e4"/><circle cx="7" cy="5.500" r="3.300" fill="#3c3c3c"/><circle cx="7" cy="5.500" r="1.600" fill="#e4e4e4"/><circle cx="7.600" cy="5.500" r="1" fill="#3c3c3c"/></svg>
<svg style="position:absolute;left:104.5px;top:1255.4px;" width="11" height="11" viewBox="0 0 11 11"><circle cx="5.300" cy="5.300" r="5.200" fill="#dcdcdc"/></svg>
<div style="position:absolute;top:1253.7px;height:17px;line-height:17px;font-size:12.00px;color:#f0f0f0;white-space:pre;letter-spacing:-0.801px;left:122.4px;">Door Frame</div>
<svg style="position:absolute;left:272.0px;top:1254.4px;" width="14" height="14" viewBox="0 0 14 14"><g transform="translate(7 7) scale(1)" stroke="#3e3e3e" stroke-width="1.100" fill="none"><path d="M0 -6v12M-5.200 -3l10.400 6M-5.200 3l10.400 -6M-1.800 -4.500l1.800 1.500 1.800-1.500M-1.800 4.500l1.800-1.500 1.800 1.500"/></g></svg>
<div style="position:absolute;left:119.0px;top:1271.0px;width:201.5px;height:17.4px;background:#4b4b4b;"></div>
<div style="position:absolute;left:239.2px;top:1271.0px;width:1.6px;height:17.4px;background:#444;"></div>
<div style="position:absolute;left:79.0px;top:1279.4px;width:8.0px;height:1.0px;background:#565656;"></div>
<svg style="position:absolute;left:88.0px;top:1273.4px;" width="14" height="11" viewBox="0 0 14 11"><path d="M0.500 5.500c3-5.500 10-5.500 13 0c-3 5.500-10 5.500-13 0z" fill="#e4e4e4"/><circle cx="7" cy="5.500" r="3.300" fill="#3c3c3c"/><circle cx="7" cy="5.500" r="1.600" fill="#e4e4e4"/><circle cx="7.600" cy="5.500" r="1" fill="#3c3c3c"/></svg>
<svg style="position:absolute;left:104.5px;top:1273.4px;" width="11" height="11" viewBox="0 0 11 11"><circle cx="5.300" cy="5.300" r="5.200" fill="#dcdcdc"/></svg>
<div style="position:absolute;top:1271.7px;height:17px;line-height:17px;font-size:12.00px;color:#f0f0f0;white-space:pre;letter-spacing:-0.609px;left:122.4px;">Elephant</div>
<svg style="position:absolute;left:272.0px;top:1272.4px;" width="14" height="14" viewBox="0 0 14 14"><g transform="translate(7 7) scale(1)" stroke="#3e3e3e" stroke-width="1.100" fill="none"><path d="M0 -6v12M-5.200 -3l10.400 6M-5.200 3l10.400 -6M-1.800 -4.500l1.800 1.500 1.800-1.500M-1.800 4.500l1.800-1.500 1.800 1.500"/></g></svg>
<div style="position:absolute;left:119.0px;top:1289.0px;width:201.5px;height:17.4px;background:#5a5a5a;"></div>
<div style="position:absolute;left:239.2px;top:1289.0px;width:1.6px;height:17.4px;background:#444;"></div>
<div style="position:absolute;left:79.0px;top:1297.4px;width:8.0px;height:1.0px;background:#565656;"></div>
<svg style="position:absolute;left:88.0px;top:1291.4px;" width="14" height="11" viewBox="0 0 14 11"><path d="M0.500 5.500c3-5.500 10-5.500 13 0c-3 5.500-10 5.500-13 0z" fill="#e4e4e4"/><circle cx="7" cy="5.500" r="3.300" fill="#3c3c3c"/><circle cx="7" cy="5.500" r="1.600" fill="#e4e4e4"/><circle cx="7.600" cy="5.500" r="1" fill="#3c3c3c"/></svg>
<svg style="position:absolute;left:104.5px;top:1291.4px;" width="11" height="11" viewBox="0 0 11 11"><circle cx="5.300" cy="5.300" r="5.200" fill="#dcdcdc"/></svg>
<div style="position:absolute;top:1289.7px;height:17px;line-height:17px;font-size:12.00px;color:#f0f0f0;white-space:pre;letter-spacing:-0.706px;left:122.4px;">Fireplace</div>
<svg style="position:absolute;left:272.0px;top:1290.4px;" width="14" height="14" viewBox="0 0 14 14"><g transform="translate(7 7) scale(1)" stroke="#3e3e3e" stroke-width="1.100" fill="none"><path d="M0 -6v12M-5.200 -3l10.400 6M-5.200 3l10.400 -6M-1.800 -4.500l1.800 1.500 1.800-1.500M-1.800 4.500l1.800-1.500 1.800 1.500"/></g></svg>
<div style="position:absolute;left:119.0px;top:1307.0px;width:201.5px;height:17.4px;background:#4b4b4b;"></div>
<div style="position:absolute;left:239.2px;top:1307.0px;width:1.6px;height:17.4px;background:#444;"></div>
<div style="position:absolute;left:79.0px;top:1315.4px;width:8.0px;height:1.0px;background:#565656;"></div>
<svg style="position:absolute;left:88.0px;top:1309.4px;" width="14" height="11" viewBox="0 0 14 11"><path d="M0.500 5.500c3-5.500 10-5.500 13 0c-3 5.500-10 5.500-13 0z" fill="#e4e4e4"/><circle cx="7" cy="5.500" r="3.300" fill="#3c3c3c"/><circle cx="7" cy="5.500" r="1.600" fill="#e4e4e4"/><circle cx="7.600" cy="5.500" r="1" fill="#3c3c3c"/></svg>
<svg style="position:absolute;left:104.5px;top:1309.4px;" width="11" height="11" viewBox="0 0 11 11"><circle cx="5.300" cy="5.300" r="5.200" fill="#dcdcdc"/></svg>
<div style="position:absolute;top:1307.7px;height:17px;line-height:17px;font-size:12.00px;color:#f0f0f0;white-space:pre;letter-spacing:-0.767px;left:122.4px;">Floor</div>
<svg style="position:absolute;left:272.0px;top:1308.4px;" width="14" height="14" viewBox="0 0 14 14"><g transform="translate(7 7) scale(1)" stroke="#3e3e3e" stroke-width="1.100" fill="none"><path d="M0 -6v12M-5.200 -3l10.400 6M-5.200 3l10.400 -6M-1.800 -4.500l1.800 1.500 1.800-1.500M-1.800 4.500l1.800-1.500 1.800 1.500"/></g></svg>
<div style="position:absolute;left:119.0px;top:1325.0px;width:201.5px;height:17.4px;background:#5a5a5a;"></div>
<div style="position:absolute;left:239.2px;top:1325.0px;width:1.6px;height:17.4px;background:#444;"></div>
<div style="position:absolute;left:79.0px;top:1333.4px;width:8.0px;height:1.0px;background:#565656;"></div>
<svg style="position:absolute;left:88.0px;top:1327.4px;" width="14" height="11" viewBox="0 0 14 11"><path d="M0.500 5.500c3-5.500 10-5.500 13 0c-3 5.500-10 5.500-13 0z" fill="#e4e4e4"/><circle cx="7" cy="5.500" r="3.300" fill="#3c3c3c"/><circle cx="7" cy="5.500" r="1.600" fill="#e4e4e4"/><circle cx="7.600" cy="5.500" r="1" fill="#3c3c3c"/></svg>
<svg style="position:absolute;left:104.5px;top:1327.4px;" width="11" height="11" viewBox="0 0 11 11"><circle cx="5.300" cy="5.300" r="5.200" fill="#dcdcdc"/></svg>
<div style="position:absolute;top:1325.7px;height:17px;line-height:17px;font-size:12.00px;color:#f0f0f0;white-space:pre;letter-spacing:-0.785px;left:122.4px;">Floor Lamp_01</div>
<svg style="position:absolute;left:272.0px;top:1326.4px;" width="14" height="14" viewBox="0 0 14 14"><g transform="translate(7 7) scale(1)" stroke="#3e3e3e" stroke-width="1.100" fill="none"><path d="M0 -6v12M-5.200 -3l10.400 6M-5.200 3l10.400 -6M-1.800 -4.500l1.800 1.500 1.800-1.500M-1.800 4.500l1.800-1.500 1.800 1.500"/></g></svg>
<div style="position:absolute;left:119.0px;top:1343.0px;width:201.5px;height:17.4px;background:#4b4b4b;"></div>
<div style="position:absolute;left:239.2px;top:1343.0px;width:1.6px;height:17.4px;background:#444;"></div>
<div style="position:absolute;left:79.0px;top:1351.4px;width:8.0px;height:1.0px;background:#565656;"></div>
<svg style="position:absolute;left:88.0px;top:1345.4px;" width="14" height="11" viewBox="0 0 14 11"><path d="M0.500 5.500c3-5.500 10-5.500 13 0c-3 5.500-10 5.500-13 0z" fill="#e4e4e4"/><circle cx="7" cy="5.500" r="3.300" fill="#3c3c3c"/><circle cx="7" cy="5.500" r="1.600" fill="#e4e4e4"/><circle cx="7.600" cy="5.500" r="1" fill="#3c3c3c"/></svg>
<svg style="position:absolute;left:104.5px;top:1345.4px;" width="11" height="11" viewBox="0 0 11 11"><circle cx="5.300" cy="5.300" r="5.200" fill="#dcdcdc"/></svg>
<div style="position:absolute;top:1343.7px;height:17px;line-height:17px;font-size:12.00px;color:#f0f0f0;white-space:pre;letter-spacing:-0.785px;left:122.4px;">Floor Lamp_02</div>
<svg style="position:absolute;left:272.0px;top:1344.4px;" width="14" height="14" viewBox="0 0 14 14"><g transform="translate(7 7) scale(1)" stroke="#3e3e3e" stroke-width="1.100" fill="none"><path d="M0 -6v12M-5.200 -3l10.400 6M-5.200 3l10.400 -6M-1.800 -4.500l1.800 1.500 1.800-1.500M-1.800 4.500l1.800-1.500 1.800 1.500"/></g></svg>
<div style="position:absolute;left:119.0px;top:1361.0px;width:201.5px;height:17.4px;background:#5a5a5a;"></div>
<div style="position:absolute;left:239.2px;top:1361.0px;width:1.6px;height:17.4px;background:#444;"></div>
<div style="position:absolute;left:79.0px;top:1369.4px;width:8.0px;height:1.0px;background:#565656;"></div>
<svg style="position:absolute;left:88.0px;top:1363.4px;" width="14" height="11" viewBox="0 0 14 11"><path d="M0.500 5.500c3-5.500 10-5.500 13 0c-3 5.500-10 5.500-13 0z" fill="#e4e4e4"/><circle cx="7" cy="5.500" r="3.300" fill="#3c3c3c"/><circle cx="7" cy="5.500" r="1.600" fill="#e4e4e4"/><circle cx="7.600" cy="5.500" r="1" fill="#3c3c3c"/></svg>
<svg style="position:absolute;left:104.5px;top:1363.4px;" width="11" height="11" viewBox="0 0 11 11"><circle cx="5.300" cy="5.300" r="5.200" fill="#dcdcdc"/></svg>
<div style="position:absolute;top:1361.7px;height:17px;line-height:17px;font-size:12.00px;color:#f0f0f0;white-space:pre;letter-spacing:-0.702px;left:122.4px;">Fork_Knife</div>
<svg style="position:absolute;left:272.0px;top:1362.4px;" width="14" height="14" viewBox="0 0 14 14"><g transform="translate(7 7) scale(1)" stroke="#3e3e3e" stroke-width="1.100" fill="none"><path d="M0 -6v12M-5.200 -3l10.400 6M-5.200 3l10.400 -6M-1.800 -4.500l1.800 1.500 1.800-1.500M-1.800 4.500l1.800-1.500 1.800 1.500"/></g></svg>
<div style="position:absolute;left:119.0px;top:1379.0px;width:201.5px;height:17.4px;background:#4b4b4b;"></div>
<div style="position:absolute;left:239.2px;top:1379.0px;width:1.6px;height:17.4px;background:#444;"></div>
<div style="position:absolute;left:79.0px;top:1387.4px;width:8.0px;height:1.0px;background:#565656;"></div>
<svg style="position:absolute;left:88.0px;top:1381.4px;" width="14" height="11" viewBox="0 0 14 11"><path d="M0.500 5.500c3-5.500 10-5.500 13 0c-3 5.500-10 5.500-13 0z" fill="#e4e4e4"/><circle cx="7" cy="5.500" r="3.300" fill="#3c3c3c"/><circle cx="7" cy="5.500" r="1.600" fill="#e4e4e4"/><circle cx="7.600" cy="5.500" r="1" fill="#3c3c3c"/></svg>
<svg style="position:absolute;left:104.5px;top:1381.4px;" width="11" height="11" viewBox="0 0 11 11"><circle cx="5.300" cy="5.300" r="5.200" fill="#dcdcdc"/></svg>
<div style="position:absolute;top:1379.7px;height:17px;line-height:17px;font-size:12.00px;color:#f0f0f0;white-space:pre;letter-spacing:-0.720px;left:122.4px;">French Window</div>
<svg style="position:absolute;left:272.0px;top:1380.4px;" width="14" height="14" viewBox="0 0 14 14"><g transform="translate(7 7) scale(1)" stroke="#3e3e3e" stroke-width="1.100" fill="none"><path d="M0 -6v12M-5.200 -3l10.400 6M-5.200 3l10.400 -6M-1.800 -4.500l1.800 1.500 1.800-1.500M-1.800 4.500l1.800-1.500 1.800 1.500"/></g></svg>
<div style="position:absolute;left:119.0px;top:1397.0px;width:201.5px;height:17.4px;background:#5a5a5a;"></div>
<div style="position:absolute;left:239.2px;top:1397.0px;width:1.6px;height:17.4px;background:#444;"></div>
<div style="position:absolute;left:79.0px;top:1405.4px;width:8.0px;height:1.0px;background:#565656;"></div>
<svg style="position:absolute;left:88.0px;top:1399.4px;" width="14" height="11" viewBox="0 0 14 11"><path d="M0.500 5.500c3-5.500 10-5.500 13 0c-3 5.500-10 5.500-13 0z" fill="#e4e4e4"/><circle cx="7" cy="5.500" r="3.300" fill="#3c3c3c"/><circle cx="7" cy="5.500" r="1.600" fill="#e4e4e4"/><circle cx="7.600" cy="5.500" r="1" fill="#3c3c3c"/></svg>
<svg style="position:absolute;left:104.5px;top:1399.4px;" width="11" height="11" viewBox="0 0 11 11"><circle cx="5.300" cy="5.300" r="5.200" fill="#dcdcdc"/></svg>
<div style="position:absolute;top:1397.7px;height:17px;line-height:17px;font-size:12.00px;color:#f0f0f0;white-space:pre;letter-spacing:-0.742px;left:122.4px;">Keys_01</div>
<svg style="position:absolute;left:272.0px;top:1398.4px;" width="14" height="14" viewBox="0 0 14 14"><g transform="translate(7 7) scale(1)" stroke="#3e3e3e" stroke-width="1.100" fill="none"><path d="M0 -6v12M-5.200 -3l10.400 6M-5.200 3l10.400 -6M-1.800 -4.500l1.800 1.500 1.800-1.500M-1.800 4.500l1.800-1.500 1.800 1.500"/></g></svg>
<div style="position:absolute;left:119.0px;top:1415.0px;width:201.5px;height:17.4px;background:#4b4b4b;"></div>
<div style="position:absolute;left:239.2px;top:1415.0px;width:1.6px;height:17.4px;background:#444;"></div>
<div style="position:absolute;left:79.0px;top:1423.4px;width:8.0px;height:1.0px;background:#565656;"></div>
<svg style="position:absolute;left:88.0px;top:1417.4px;" width="14" height="11" viewBox="0 0 14 11"><path d="M0.500 5.500c3-5.500 10-5.500 13 0c-3 5.500-10 5.500-13 0z" fill="#e4e4e4"/><circle cx="7" cy="5.500" r="3.300" fill="#3c3c3c"/><circle cx="7" cy="5.500" r="1.600" fill="#e4e4e4"/><circle cx="7.600" cy="5.500" r="1" fill="#3c3c3c"/></svg>
<svg style="position:absolute;left:104.5px;top:1417.4px;" width="11" height="11" viewBox="0 0 11 11"><circle cx="5.300" cy="5.300" r="5.200" fill="#dcdcdc"/></svg>
<div style="position:absolute;top:1415.7px;height:17px;line-height:17px;font-size:12.00px;color:#f0f0f0;white-space:pre;letter-spacing:-0.742px;left:122.4px;">Keys_02</div>
<svg style="position:absolute;left:272.0px;top:1416.4px;" width="14" height="14" viewBox="0 0 14 14"><g transform="translate(7 7) scale(1)" stroke="#3e3e3e" stroke-width="1.100" fill="none"><path d="M0 -6v12M-5.200 -3l10.400 6M-5.200 3l10.400 -6M-1.800 -4.500l1.800 1.500 1.800-1.500M-1.800 4.500l1.800-1.500 1.800 1.500"/></g></svg>
<div style="position:absolute;left:119.0px;top:1433.0px;width:201.5px;height:17.4px;background:#5a5a5a;"></div>
<div style="position:absolute;left:239.2px;top:1433.0px;width:1.6px;height:17.4px;background:#444;"></div>
<div style="position:absolute;left:79.0px;top:1441.4px;width:8.0px;height:1.0px;background:#565656;"></div>
<svg style="position:absolute;left:88.0px;top:1435.4px;" width="14" height="11" viewBox="0 0 14 11"><path d="M0.500 5.500c3-5.500 10-5.500 13 0c-3 5.500-10 5.500-13 0z" fill="#e4e4e4"/><circle cx="7" cy="5.500" r="3.300" fill="#3c3c3c"/><circle cx="7" cy="5.500" r="1.600" fill="#e4e4e4"/><circle cx="7.600" cy="5.500" r="1" fill="#3c3c3c"/></svg>
<svg style="position:absolute;left:104.5px;top:1435.4px;" width="11" height="11" viewBox="0 0 11 11"><circle cx="5.300" cy="5.300" r="5.200" fill="#dcdcdc"/></svg>
<div style="position:absolute;top:1433.7px;height:17px;line-height:17px;font-size:12.00px;color:#f0f0f0;white-space:pre;letter-spacing:-0.892px;left:122.4px;">Napkin</div>
<svg style="position:absolute;left:272.0px;top:1434.4px;" width="14" height="14" viewBox="0 0 14 14"><g transform="translate(7 7) scale(1)" stroke="#3e3e3e" stroke-width="1.100" fill="none"><path d="M0 -6v12M-5.200 -3l10.400 6M-5.200 3l10.400 -6M-1.800 -4.500l1.800 1.500 1.800-1.500M-1.800 4.500l1.800-1.500 1.800 1.500"/></g></svg>
<div style="position:absolute;left:119.0px;top:1451.0px;width:201.5px;height:17.4px;background:#4b4b4b;"></div>
<div style="position:absolute;left:239.2px;top:1451.0px;width:1.6px;height:17.4px;background:#444;"></div>
<div style="position:absolute;left:79.0px;top:1459.4px;width:8.0px;height:1.0px;background:#565656;"></div>
<svg style="position:absolute;left:88.0px;top:1453.4px;" width="14" height="11" viewBox="0 0 14 11"><path d="M0.500 5.500c3-5.500 10-5.500 13 0c-3 5.500-10 5.500-13 0z" fill="#e4e4e4"/><circle cx="7" cy="5.500" r="3.300" fill="#3c3c3c"/><circle cx="7" cy="5.500" r="1.600" fill="#e4e4e4"/><circle cx="7.600" cy="5.500" r="1" fill="#3c3c3c"/></svg>
<svg style="position:absolute;left:104.5px;top:1453.4px;" width="11" height="11" viewBox="0 0 11 11"><circle cx="5.300" cy="5.300" r="5.200" fill="#dcdcdc"/></svg>
<div style="position:absolute;top:1451.7px;height:17px;line-height:17px;font-size:12.00px;color:#f0f0f0;white-space:pre;letter-spacing:-0.799px;left:122.4px;">Newspaper</div>
<svg style="position:absolute;left:272.0px;top:1452.4px;" width="14" height="14" viewBox="0 0 14 14"><g transform="translate(7 7) scale(1)" stroke="#3e3e3e" stroke-width="1.100" fill="none"><path d="M0 -6v12M-5.200 -3l10.400 6M-5.200 3l10.400 -6M-1.800 -4.500l1.800 1.500 1.800-1.500M-1.800 4.500l1.800-1.500 1.800 1.500"/></g></svg>
<div style="position:absolute;left:119.0px;top:1469.0px;width:201.5px;height:17.4px;background:#5a5a5a;"></div>
<div style="position:absolute;left:239.2px;top:1469.0px;width:1.6px;height:17.4px;background:#444;"></div>
<div style="position:absolute;left:79.0px;top:1477.4px;width:8.0px;height:1.0px;background:#565656;"></div>
<svg style="position:absolute;left:88.0px;top:1471.4px;" width="14" height="11" viewBox="0 0 14 11"><path d="M0.500 5.500c3-5.500 10-5.500 13 0c-3 5.500-10 5.500-13 0z" fill="#e4e4e4"/><circle cx="7" cy="5.500" r="3.300" fill="#3c3c3c"/><circle cx="7" cy="5.500" r="1.600" fill="#e4e4e4"/><circle cx="7.600" cy="5.500" r="1" fill="#3c3c3c"/></svg>
<svg style="position:absolute;left:104.5px;top:1471.4px;" width="11" height="11" viewBox="0 0 11 11"><circle cx="5.300" cy="5.300" r="5.200" fill="#dcdcdc"/></svg>
<div style="position:absolute;top:1469.7px;height:17px;line-height:17px;font-size:12.00px;color:#f0f0f0;white-space:pre;letter-spacing:-0.032px;left:122.4px;">Puff</div>
<svg style="position:absolute;left:272.0px;top:1470.4px;" width="14" height="14" viewBox="0 0 14 14"><g transform="translate(7 7) scale(1)" stroke="#3e3e3e" stroke-width="1.100" fill="none"><path d="M0 -6v12M-5.200 -3l10.400 6M-5.200 3l10.400 -6M-1.800 -4.500l1.800 1.500 1.800-1.500M-1.800 4.500l1.800-1.500 1.800 1.500"/></g></svg>
<div style="position:absolute;left:119.0px;top:1487.0px;width:201.5px;height:17.4px;background:#4b4b4b;"></div>
<div style="position:absolute;left:239.2px;top:1487.0px;width:1.6px;height:17.4px;background:#444;"></div>
<div style="position:absolute;left:79.0px;top:1495.4px;width:8.0px;height:1.0px;background:#565656;"></div>
<svg style="position:absolute;left:88.0px;top:1489.4px;" width="14" height="11" viewBox="0 0 14 11"><path d="M0.500 5.500c3-5.500 10-5.500 13 0c-3 5.500-10 5.500-13 0z" fill="#e4e4e4"/><circle cx="7" cy="5.500" r="3.300" fill="#3c3c3c"/><circle cx="7" cy="5.500" r="1.600" fill="#e4e4e4"/><circle cx="7.600" cy="5.500" r="1" fill="#3c3c3c"/></svg>
<svg style="position:absolute;left:104.5px;top:1489.4px;" width="11" height="11" viewBox="0 0 11 11"><circle cx="5.300" cy="5.300" r="5.200" fill="#dcdcdc"/></svg>
<div style="position:absolute;top:1487.7px;height:17px;line-height:17px;font-size:12.00px;color:#f0f0f0;white-space:pre;letter-spacing:-0.546px;left:122.4px;">Side Coffee Table</div>
<svg style="position:absolute;left:272.0px;top:1488.4px;" width="14" height="14" viewBox="0 0 14 14"><g transform="translate(7 7) scale(1)" stroke="#3e3e3e" stroke-width="1.100" fill="none"><path d="M0 -6v12M-5.200 -3l10.400 6M-5.200 3l10.400 -6M-1.800 -4.500l1.800 1.500 1.800-1.500M-1.800 4.500l1.800-1.500 1.800 1.500"/></g></svg>
<div style="position:absolute;left:119.0px;top:1505.0px;width:201.5px;height:17.4px;background:#5a5a5a;"></div>
<div style="position:absolute;left:239.2px;top:1505.0px;width:1.6px;height:17.4px;background:#444;"></div>
<div style="position:absolute;left:79.0px;top:1513.4px;width:8.0px;height:1.0px;background:#565656;"></div>
<svg style="position:absolute;left:88.0px;top:1507.4px;" width="14" height="11" viewBox="0 0 14 11"><path d="M0.500 5.500c3-5.500 10-5.500 13 0c-3 5.500-10 5.500-13 0z" fill="#e4e4e4"/><circle cx="7" cy="5.500" r="3.300" fill="#3c3c3c"/><circle cx="7" cy="5.500" r="1.600" fill="#e4e4e4"/><circle cx="7.600" cy="5.500" r="1" fill="#3c3c3c"/></svg>
<svg style="position:absolute;left:104.5px;top:1507.4px;" width="11" height="11" viewBox="0 0 11 11"><circle cx="5.300" cy="5.300" r="5.200" fill="#dcdcdc"/></svg>
<div style="position:absolute;top:1505.7px;height:17px;line-height:17px;font-size:12.00px;color:#f0f0f0;white-space:pre;letter-spacing:-0.791px;left:122.4px;">Tissue Box</div>
<svg style="position:absolute;left:272.0px;top:1506.4px;" width="14" height="14" viewBox="0 0 14 14"><g transform="translate(7 7) scale(1)" stroke="#3e3e3e" stroke-width="1.100" fill="none"><path d="M0 -6v12M-5.200 -3l10.400 6M-5.200 3l10.400 -6M-1.800 -4.500l1.800 1.500 1.800-1.500M-1.800 4.500l1.800-1.500 1.800 1.500"/></g></svg>
<div style="position:absolute;left:119.0px;top:1523.0px;width:201.5px;height:17.4px;background:#4b4b4b;"></div>
<div style="position:absolute;left:239.2px;top:1523.0px;width:1.6px;height:17.4px;background:#444;"></div>
<div style="position:absolute;left:79.0px;top:1531.4px;width:8.0px;height:1.0px;background:#565656;"></div>
<svg style="position:absolute;left:88.0px;top:1525.4px;" width="14" height="11" viewBox="0 0 14 11"><path d="M0.500 5.500c3-5.500 10-5.500 13 0c-3 5.500-10 5.500-13 0z" fill="#e4e4e4"/><circle cx="7" cy="5.500" r="3.300" fill="#3c3c3c"/><circle cx="7" cy="5.500" r="1.600" fill="#e4e4e4"/><circle cx="7.600" cy="5.500" r="1" fill="#3c3c3c"/></svg>
<svg style="position:absolute;left:104.5px;top:1525.4px;" width="11" height="11" viewBox="0 0 11 11"><circle cx="5.300" cy="5.300" r="5.200" fill="#dcdcdc"/></svg>
<div style="position:absolute;top:1523.7px;height:17px;line-height:17px;font-size:12.00px;color:#f0f0f0;white-space:pre;letter-spacing:-0.711px;left:122.4px;">Vase_01</div>
<svg style="position:absolute;left:272.0px;top:1524.4px;" width="14" height="14" viewBox="0 0 14 14"><g transform="translate(7 7) scale(1)" stroke="#3e3e3e" stroke-width="1.100" fill="none"><path d="M0 -6v12M-5.200 -3l10.400 6M-5.200 3l10.400 -6M-1.800 -4.500l1.800 1.500 1.800-1.500M-1.800 4.500l1.800-1.500 1.800 1.500"/></g></svg>
<div style="position:absolute;left:119.0px;top:1541.0px;width:201.5px;height:17.4px;background:#5a5a5a;"></div>
<div style="position:absolute;left:239.2px;top:1541.0px;width:1.6px;height:17.4px;background:#444;"></div>
<div style="position:absolute;left:79.0px;top:1549.4px;width:8.0px;height:1.0px;background:#565656;"></div>
<svg style="position:absolute;left:88.0px;top:1543.4px;" width="14" height="11" viewBox="0 0 14 11"><path d="M0.500 5.500c3-5.500 10-5.500 13 0c-3 5.500-10 5.500-13 0z" fill="#e4e4e4"/><circle cx="7" cy="5.500" r="3.300" fill="#3c3c3c"/><circle cx="7" cy="5.500" r="1.600" fill="#e4e4e4"/><circle cx="7.600" cy="5.500" r="1" fill="#3c3c3c"/></svg>
<svg style="position:absolute;left:104.5px;top:1543.4px;" width="11" height="11" viewBox="0 0 11 11"><circle cx="5.300" cy="5.300" r="5.200" fill="#dcdcdc"/></svg>
<div style="position:absolute;top:1541.7px;height:17px;line-height:17px;font-size:12.00px;color:#f0f0f0;white-space:pre;letter-spacing:-0.711px;left:122.4px;">Vase_02</div>
<svg style="position:absolute;left:272.0px;top:1542.4px;" width="14" height="14" viewBox="0 0 14 14"><g transform="translate(7 7) scale(1)" stroke="#3e3e3e" stroke-width="1.100" fill="none"><path d="M0 -6v12M-5.200 -3l10.400 6M-5.200 3l10.400 -6M-1.800 -4.500l1.800 1.500 1.800-1.500M-1.800 4.500l1.800-1.500 1.800 1.500"/></g></svg>
<div style="position:absolute;left:119.0px;top:1559.0px;width:201.5px;height:17.4px;background:#4b4b4b;"></div>
<div style="position:absolute;left:239.2px;top:1559.0px;width:1.6px;height:17.4px;background:#444;"></div>
<div style="position:absolute;left:79.0px;top:1567.4px;width:8.0px;height:1.0px;background:#565656;"></div>
<svg style="position:absolute;left:88.0px;top:1561.4px;" width="14" height="11" viewBox="0 0 14 11"><path d="M0.500 5.500c3-5.500 10-5.500 13 0c-3 5.500-10 5.500-13 0z" fill="#e4e4e4"/><circle cx="7" cy="5.500" r="3.300" fill="#3c3c3c"/><circle cx="7" cy="5.500" r="1.600" fill="#e4e4e4"/><circle cx="7.600" cy="5.500" r="1" fill="#3c3c3c"/></svg>
<svg style="position:absolute;left:104.5px;top:1561.4px;" width="11" height="11" viewBox="0 0 11 11"><circle cx="5.300" cy="5.300" r="5.200" fill="#dcdcdc"/></svg>
<div style="position:absolute;top:1559.7px;height:17px;line-height:17px;font-size:12.00px;color:#f0f0f0;white-space:pre;letter-spacing:-0.711px;left:122.4px;">Vase_03</div>
<svg style="position:absolute;left:272.0px;top:1560.4px;" width="14" height="14" viewBox="0 0 14 14"><g transform="translate(7 7) scale(1)" stroke="#3e3e3e" stroke-width="1.100" fill="none"><path d="M0 -6v12M-5.200 -3l10.400 6M-5.200 3l10.400 -6M-1.800 -4.500l1.800 1.500 1.800-1.500M-1.800 4.500l1.800-1.500 1.800 1.500"/></g></svg>
<div style="position:absolute;left:119.0px;top:1577.0px;width:201.5px;height:17.4px;background:#5a5a5a;"></div>
<div style="position:absolute;left:239.2px;top:1577.0px;width:1.6px;height:17.4px;background:#444;"></div>
<div style="position:absolute;left:79.0px;top:1585.4px;width:8.0px;height:1.0px;background:#565656;"></div>
<svg style="position:absolute;left:88.0px;top:1579.4px;" width="14" height="11" viewBox="0 0 14 11"><path d="M0.500 5.500c3-5.500 10-5.500 13 0c-3 5.500-10 5.500-13 0z" fill="#e4e4e4"/><circle cx="7" cy="5.500" r="3.300" fill="#3c3c3c"/><circle cx="7" cy="5.500" r="1.600" fill="#e4e4e4"/><circle cx="7.600" cy="5.500" r="1" fill="#3c3c3c"/></svg>
<svg style="position:absolute;left:104.5px;top:1579.4px;" width="11" height="11" viewBox="0 0 11 11"><circle cx="5.300" cy="5.300" r="5.200" fill="#dcdcdc"/></svg>
<div style="position:absolute;top:1577.7px;height:17px;line-height:17px;font-size:12.00px;color:#f0f0f0;white-space:pre;letter-spacing:-0.701px;left:122.4px;">Wall_01</div>
<svg style="position:absolute;left:272.0px;top:1578.4px;" width="14" height="14" viewBox="0 0 14 14"><g transform="translate(7 7) scale(1)" stroke="#3e3e3e" stroke-width="1.100" fill="none"><path d="M0 -6v12M-5.200 -3l10.400 6M-5.200 3l10.400 -6M-1.800 -4.500l1.800 1.500 1.800-1.500M-1.800 4.500l1.800-1.500 1.800 1.500"/></g></svg>
<div style="position:absolute;left:119.0px;top:1595.0px;width:201.5px;height:17.4px;background:#4b4b4b;"></div>
<div style="position:absolute;left:239.2px;top:1595.0px;width:1.6px;height:17.4px;background:#444;"></div>
<div style="position:absolute;left:79.0px;top:1603.4px;width:8.0px;height:1.0px;background:#565656;"></div>
<svg style="position:absolute;left:88.0px;top:1597.4px;" width="14" height="11" viewBox="0 0 14 11"><path d="M0.500 5.500c3-5.500 10-5.500 13 0c-3 5.500-10 5.500-13 0z" fill="#e4e4e4"/><circle cx="7" cy="5.500" r="3.300" fill="#3c3c3c"/><circle cx="7" cy="5.500" r="1.600" fill="#e4e4e4"/><circle cx="7.600" cy="5.500" r="1" fill="#3c3c3c"/></svg>
<svg style="position:absolute;left:104.5px;top:1597.4px;" width="11" height="11" viewBox="0 0 11 11"><circle cx="5.300" cy="5.300" r="5.200" fill="#dcdcdc"/></svg>
<div style="position:absolute;top:1595.7px;height:17px;line-height:17px;font-size:12.00px;color:#f0f0f0;white-space:pre;letter-spacing:-0.701px;left:122.4px;">Wall_02</div>
<svg style="position:absolute;left:272.0px;top:1596.4px;" width="14" height="14" viewBox="0 0 14 14"><g transform="translate(7 7) scale(1)" stroke="#3e3e3e" stroke-width="1.100" fill="none"><path d="M0 -6v12M-5.200 -3l10.400 6M-5.200 3l10.400 -6M-1.800 -4.500l1.800 1.500 1.800-1.500M-1.800 4.500l1.800-1.500 1.800 1.500"/></g></svg>
<div style="position:absolute;left:119.0px;top:1613.0px;width:201.5px;height:17.4px;background:#5a5a5a;"></div>
<div style="position:absolute;left:239.2px;top:1613.0px;width:1.6px;height:17.4px;background:#444;"></div>
<div style="position:absolute;left:79.0px;top:1621.4px;width:8.0px;height:1.0px;background:#565656;"></div>
<svg style="position:absolute;left:88.0px;top:1615.4px;" width="14" height="11" viewBox="0 0 14 11"><path d="M0.500 5.500c3-5.500 10-5.500 13 0c-3 5.500-10 5.500-13 0z" fill="#e4e4e4"/><circle cx="7" cy="5.500" r="3.300" fill="#3c3c3c"/><circle cx="7" cy="5.500" r="1.600" fill="#e4e4e4"/><circle cx="7.600" cy="5.500" r="1" fill="#3c3c3c"/></svg>
<svg style="position:absolute;left:104.5px;top:1615.4px;" width="11" height="11" viewBox="0 0 11 11"><circle cx="5.300" cy="5.300" r="5.200" fill="#dcdcdc"/></svg>
<div style="position:absolute;top:1613.7px;height:17px;line-height:17px;font-size:12.00px;color:#f0f0f0;white-space:pre;letter-spacing:-0.749px;left:122.4px;">Wooden Box</div>
<svg style="position:absolute;left:272.0px;top:1614.4px;" width="14" height="14" viewBox="0 0 14 14"><g transform="translate(7 7) scale(1)" stroke="#3e3e3e" stroke-width="1.100" fill="none"><path d="M0 -6v12M-5.200 -3l10.400 6M-5.200 3l10.400 -6M-1.800 -4.500l1.800 1.500 1.800-1.500M-1.800 4.500l1.800-1.500 1.800 1.500"/></g></svg>
<div style="position:absolute;left:119.0px;top:1631.0px;width:201.5px;height:17.4px;background:#4b4b4b;"></div>
<div style="position:absolute;left:239.2px;top:1631.0px;width:1.6px;height:17.4px;background:#444;"></div>
<div style="position:absolute;left:79.0px;top:1639.4px;width:8.0px;height:1.0px;background:#565656;"></div>
<svg style="position:absolute;left:88.0px;top:1633.4px;" width="14" height="11" viewBox="0 0 14 11"><path d="M0.500 5.500c3-5.500 10-5.500 13 0c-3 5.500-10 5.500-13 0z" fill="#e4e4e4"/><circle cx="7" cy="5.500" r="3.300" fill="#3c3c3c"/><circle cx="7" cy="5.500" r="1.600" fill="#e4e4e4"/><circle cx="7.600" cy="5.500" r="1" fill="#3c3c3c"/></svg>
<svg style="position:absolute;left:104.5px;top:1633.4px;" width="11" height="11" viewBox="0 0 11 11"><circle cx="5.300" cy="5.300" r="5.200" fill="#dcdcdc"/></svg>
<div style="position:absolute;top:1631.7px;height:17px;line-height:17px;font-size:12.00px;color:#f0f0f0;white-space:pre;letter-spacing:-0.345px;left:122.4px;">Wrought Iron</div>
<svg style="position:absolute;left:272.0px;top:1632.4px;" width="14" height="14" viewBox="0 0 14 14"><g transform="translate(7 7) scale(1)" stroke="#3e3e3e" stroke-width="1.100" fill="none"><path d="M0 -6v12M-5.200 -3l10.400 6M-5.200 3l10.400 -6M-1.800 -4.500l1.800 1.500 1.800-1.500M-1.800 4.500l1.800-1.500 1.800 1.500"/></g></svg>
<div style="position:absolute;left:43.8px;top:748.0px;width:22.3px;height:19.6px;background:#5a86c8;"></div>
<svg style="position:absolute;left:43.8px;top:747.5px;" width="22" height="21" viewBox="0 0 22 21"><circle cx="11" cy="10" r="5.500" fill="#dcdcdc"/></svg>
<div style="position:absolute;left:43.8px;top:771.0px;width:22.3px;height:19.6px;background:#5a86c8;"></div>
<svg style="position:absolute;left:43.8px;top:770.5px;" width="22" height="21" viewBox="0 0 22 21"><circle cx="9" cy="8" r="4.500" fill="#dcdcdc" stroke="#333" stroke-width="1"/><rect x="9" y="9" width="7.500" height="7.500" fill="#dcdcdc" stroke="#333" stroke-width="1"/></svg>
<div style="position:absolute;left:43.8px;top:793.9px;width:22.3px;height:19.6px;background:#5a86c8;"></div>
<svg style="position:absolute;left:43.8px;top:793.4px;" width="22" height="21" viewBox="0 0 22 21"><path d="M11 3a5 5 0 0 1 3 9v2h-6v-2a5 5 0 0 1 3-9z" fill="#dcdcdc"/><path d="M8.500 15.500h5M9 17.500h4" stroke="#dcdcdc" stroke-width="1.200"/></svg>
<div style="position:absolute;left:43.8px;top:816.9px;width:22.3px;height:19.6px;background:#5a86c8;"></div>
<svg style="position:absolute;left:43.8px;top:816.4px;" width="22" height="21" viewBox="0 0 22 21"><rect x="4" y="6" width="10" height="9" rx="1" fill="#dcdcdc"/><path d="M14.500 10l4-3v7l-4-3z" fill="#dcdcdc"/></svg>
<div style="position:absolute;left:43.8px;top:839.8px;width:22.3px;height:19.6px;background:#5a86c8;"></div>
<svg style="position:absolute;left:43.8px;top:839.3px;" width="22" height="21" viewBox="0 0 22 21"><path d="M4 3v14h14z" fill="#dcdcdc" stroke="#333" stroke-width="0.800"/><path d="M7.500 10.500v3.500h3.500z" fill="#5b8bd0"/></svg>
<div style="position:absolute;left:43.8px;top:862.8px;width:22.3px;height:19.6px;background:#5a86c8;"></div>
<svg style="position:absolute;left:43.8px;top:862.2px;" width="22" height="21" viewBox="0 0 22 21"><path d="M4 7c2.500-2 4.500-2 7 0s4.500 2 7 0M4 11c2.500-2 4.500-2 7 0s4.500 2 7 0M4 15c2.500-2 4.500-2 7 0s4.500 2 7 0" fill="none" stroke="#dcdcdc" stroke-width="1.400"/></svg>
<div style="position:absolute;left:43.8px;top:885.7px;width:22.3px;height:19.6px;background:#5a86c8;"></div>
<svg style="position:absolute;left:43.8px;top:885.2px;" width="22" height="21" viewBox="0 0 22 21"><rect x="4" y="3.500" width="14" height="14" fill="none" stroke="#1d3d4d" stroke-width="1.600"/><circle cx="10" cy="9" r="3.500" fill="#dcdcdc"/><rect x="10.500" y="10" width="5" height="5" fill="#dcdcdc" stroke="#333" stroke-width="0.600"/></svg>
<div style="position:absolute;left:43.8px;top:908.6px;width:22.3px;height:19.6px;background:#5a86c8;"></div>
<svg style="position:absolute;left:43.8px;top:908.1px;" width="22" height="21" viewBox="0 0 22 21"><circle cx="11" cy="10" r="7" fill="#dcdcdc"/><path d="M11 6v6M8 10l3 3.500 3-3.500z" fill="#2a8a8c" stroke="#2a8a8c" stroke-width="1.500"/><path d="M6.500 15.500h9" stroke="#2a8a8c" stroke-width="1.500"/></svg>
<div style="position:absolute;left:43.8px;top:931.6px;width:22.3px;height:19.6px;background:#5a86c8;"></div>
<svg style="position:absolute;left:43.8px;top:931.1px;" width="22" height="21" viewBox="0 0 22 21"><circle cx="6.500" cy="5.500" r="2.500" fill="#dcdcdc"/><path d="M8 7.500l9 9-2-7z" fill="#dcdcdc" stroke="#333" stroke-width="0.500"/></svg>
<div style="position:absolute;left:43.8px;top:954.5px;width:22.3px;height:19.6px;background:#5a86c8;"></div>
<svg style="position:absolute;left:43.8px;top:954.0px;" width="22" height="21" viewBox="0 0 22 21"><rect x="5" y="5" width="12" height="11" fill="#dcdcdc" stroke="#333" stroke-width="1"/><rect x="7" y="7.500" width="8" height="2" fill="#333"/></svg>
<div style="position:absolute;left:43.8px;top:977.5px;width:22.3px;height:19.6px;background:#5a86c8;"></div>
<svg style="position:absolute;left:43.8px;top:977.0px;" width="22" height="21" viewBox="0 0 22 21"><circle cx="11" cy="10.500" r="6.500" fill="none" stroke="#dcdcdc" stroke-width="1.300" stroke-dasharray="2.500 1.500"/><path d="M11 4v13M5.400 7.200l11.200 6.600M5.400 13.800l11.200-6.600" stroke="#dcdcdc" stroke-width="1"/></svg>
<div style="position:absolute;left:43.8px;top:1000.5px;width:22.3px;height:19.6px;background:#5a86c8;"></div>
<svg style="position:absolute;left:43.8px;top:1000.0px;" width="22" height="21" viewBox="0 0 22 21"><path d="M4 10.500c3.500-5 10.500-5 14 0c-3.500 5-10.500 5-14 0z" fill="#dcdcdc"/><circle cx="11" cy="10.500" r="2.800" fill="#333"/></svg>
<div style="position:absolute;left:46.0px;top:1024.9px;width:18.0px;height:1.3px;background:#2e2e2e;"></div>
<svg style="position:absolute;left:46.0px;top:1029.4px;" width="18" height="20" viewBox="0 0 18 20"><rect x="3" y="2" width="12" height="14" fill="#dcdcdc"/><path d="M5.500 5h7M5.500 7.500h5M5.500 10h7M5.500 12.500h5" stroke="#555" stroke-width="1"/></svg>
<svg style="position:absolute;left:46.0px;top:1052.4px;" width="18" height="20" viewBox="0 0 18 20"><rect x="3" y="2" width="12" height="14" fill="#dcdcdc"/></svg>
<svg style="position:absolute;left:46.0px;top:1075.4px;" width="18" height="20" viewBox="0 0 18 20"><rect x="3" y="2" width="12" height="14" fill="#444" stroke="#dcdcdc" stroke-width="1.200"/><path d="M6 6h4M6 9h6M6 12h4" stroke="#dcdcdc" stroke-width="1.200"/></svg>
<div style="position:absolute;left:46.0px;top:1099.9px;width:18.0px;height:1.3px;background:#2e2e2e;"></div>
<svg style="position:absolute;left:46.0px;top:1104.4px;" width="18" height="20" viewBox="0 0 18 20"><path d="M2 2h14l-5.500 6.500v7l-3-2v-5z" fill="#8e8e8e"/><circle cx="13" cy="13" r="2.500" fill="none" stroke="#9a9a9a" stroke-width="1.500"/></svg>
<svg style="position:absolute;left:46.0px;top:1128.4px;" width="18" height="20" viewBox="0 0 18 20"><path d="M2 2h14l-5.500 6.500v7l-3-2v-5z" fill="#e0e0e0"/></svg>
<svg style="position:absolute;left:46.0px;top:1151.4px;" width="18" height="20" viewBox="0 0 18 20"><path d="M2.500 16v-9h3v-3h3v3h2v-3h3v3h2v9z" fill="none" stroke="#dcdcdc" stroke-width="1.300"/></svg>
<div style="position:absolute;left:48.0px;top:1867.0px;width:144.5px;height:22.5px;background:#444;border:1px solid #5e5e5e;"></div>
<div style="position:absolute;top:1868.3px;height:18px;line-height:18px;font-size:12.50px;color:#e6e65c;white-space:pre;letter-spacing:-0.790px;left:50.5px;">Workspace_1</div>
<svg style="position:absolute;left:197.0px;top:1875.5px;" width="8" height="6" viewBox="0 0 8 6"><path d="M0.500 0.500h6.500l-3.250 4z" fill="#111"/></svg>
<div style="position:absolute;left:209.5px;top:1866.0px;width:1.3px;height:24.0px;background:#333;"></div>
<svg style="position:absolute;left:216.0px;top:1869.0px;" width="18" height="19" viewBox="0 0 18 19"><path d="M9 1.500l7.500 3.500-7.500 3.500-7.500-3.500z" fill="#e0e0e0"/><path d="M1.500 8.500l7.500 3.500 7.500-3.500M1.500 12l7.500 3.500 7.500-3.500" fill="none" stroke="#e0e0e0" stroke-width="1.800"/></svg>
<div style="position:absolute;left:236.6px;top:1866.0px;width:24.3px;height:24.0px;background:#5a86c8;"></div>
<svg style="position:absolute;left:239.5px;top:1868.5px;" width="19" height="19" viewBox="0 0 19 19"><rect x="4" y="1.500" width="11" height="5" fill="#dcdcdc" stroke="#333" stroke-width="0.700"/><path d="M9.500 6.500v3M4 13v-3.500h11v3.500" fill="none" stroke="#f0f0f0" stroke-width="1.400"/><rect x="1.500" y="12.500" width="5" height="5" fill="#e8e8e8" stroke="#333" stroke-width="0.700"/><rect x="12.500" y="12.500" width="5" height="5" fill="#e8e8e8" stroke="#333" stroke-width="0.700"/></svg>
<div style="position:absolute;left:263.5px;top:1866.0px;width:1.3px;height:24.0px;background:#5a5a5a;"></div>
<div style="position:absolute;top:1863.5px;height:15px;line-height:15px;font-size:11.00px;color:#5a5a80;white-space:pre;left:328.0px;">»</div>
<div style="position:absolute;left:341.0px;top:693.0px;width:2.0px;height:1200.0px;background:#3c3c3c;"></div>
<!-- part_views -->
<div style="position:absolute;left:343.0px;top:684.0px;width:2003.5px;height:1208.5px;background:#484848;"></div>
<svg style="position:absolute;left:0;top:0" width="2560" height="2560" viewBox="0 0 2560 2560"><defs><pattern id="wood" width="14" height="12" patternUnits="userSpaceOnUse"><path d="M0 0l7 12M7 0l7 12" stroke="#8a3c12" stroke-width="2.500" opacity="0.550"/></pattern></defs><rect x="343" y="684.500" width="348.200" height="456.500" fill="#353535"/><path d="M357.9 686.5V1139.0M398.5 686.5V1139.0M439.2 686.5V1139.0M479.8 686.5V1139.0M520.5 686.5V1139.0M561.1 686.5V1139.0M601.8 686.5V1139.0M642.4 686.5V1139.0M683.1 686.5V1139.0M345.0 712.6H689.2M345.0 753.3H689.2M345.0 793.9H689.2M345.0 834.6H689.2M345.0 875.2H689.2M345.0 915.9H689.2M345.0 956.5H689.2M345.0 997.2H689.2M345.0 1037.8H689.2M345.0 1078.5H689.2M345.0 1119.2H689.2" stroke="#585858" stroke-width="1.15" fill="none"/><path d="M520.500 686V1139M345 915.900H689" stroke="#0c0c0c" stroke-width="1.300"/><g fill="none" stroke="#d2d2d2" stroke-width="2.400"><path d="M461.500 720.500H583V862H502.500V1107H583V862M461.500 720.500V862H502.500"/><path d="M465.500 724.500H578.500V857.500H465.500z"/><path d="M507 866.500H576.500V1102.500H507z"/></g><rect x="466" y="725" width="112" height="11.500" fill="#d2d2d2"/><rect x="486.800" y="753" width="59.600" height="88.700" fill="#d2d2d2"/><path d="M488.0 754.3L489.7 754.3L488.9 763.0L488.0 763.0zM491.8 754.3L494.2 754.3L491.8 763.0zM505.4 754.7L517.8 755.1L512.0 768.0L497.1 767.1L501.3 759.7zM525.3 754.7L542.3 754.7L542.7 763.8L536.1 765.5L530.3 761.3zM522.8 764.7L527.8 767.1L545.2 776.3L545.2 789.5zM493.0 780.4L501.3 775.4L514.5 782.0L510.4 784.5L498.0 782.9zM488.0 787.0L502.9 789.5L499.6 796.1L488.0 795.3zM512.9 772.9L520.3 774.6L530.3 784.5L519.5 782.0zM488.0 801.1L498.0 801.9L494.7 809.4L488.0 812.7zM502.9 802.8L514.5 801.9L516.2 807.7L506.3 809.4L502.1 806.9zM488.9 816.8L498.0 816.0L503.8 821.0L498.0 823.5L491.3 820.1zM501.3 834.2L513.7 821.8L517.8 824.3L510.4 840.0L499.6 840.8zM517.0 840.0L531.9 820.1L535.2 821.8L522.8 840.8zM529.4 840.4L537.7 825.9L540.2 827.6L534.4 840.8zM539.4 840.0L545.2 821.8L545.6 840.4zM488.0 836.7L491.3 840.0L488.0 840.8zM522.0 821.0L526.1 820.1L523.6 825.1zM527.8 814.3L531.1 815.2L529.4 817.7zM505.4 811.9L510.4 814.3L514.5 812.3L515.4 816.0L508.7 817.7zM489.7 825.1L493.0 827.6L497.1 826.8L494.7 830.1z" fill="#353535"/><circle cx="534" cy="745.600" r="7.900" fill="#d2d2d2"/><circle cx="534" cy="745.600" r="4" fill="none" stroke="#353535" stroke-width="0.800" opacity="0.500"/><circle cx="553.500" cy="759" r="10.800" fill="#d2d2d2"/><circle cx="571.500" cy="757" r="4.500" fill="#d2d2d2"/><path d="M548 755l6 2M550 764l5 -3" stroke="#353535" stroke-width="1.500"/><rect x="452.500" y="758" width="7.500" height="66.500" fill="none" stroke="#d2d2d2" stroke-width="1.600"/><path d="M452.500 762h7.500M452.500 767h7.500M452.500 772h7.500M452.500 777h7.500M452.500 782h7.500M452.500 787h7.500M452.500 792h7.500M452.500 797h7.500M452.500 802h7.500M452.500 807h7.500M452.500 812h7.500M452.500 817h7.500" stroke="#d2d2d2" stroke-width="1.400"/><rect x="463" y="766" width="9" height="50" fill="#9a9a9a" stroke="#d2d2d2" stroke-width="1.400"/><path d="M469 753l8 14M472 768l10 20M470 828l12-4" stroke="#d2d2d2" stroke-width="2.400" fill="none"/><rect x="565" y="764" width="12.500" height="42.500" fill="none" stroke="#d2d2d2" stroke-width="2"/><rect x="568" y="775" width="8" height="22" fill="#d2d2d2"/><rect x="570" y="767" width="5" height="7" fill="#d2d2d2"/><path d="M560 815c4-6 10-4 12-2l4-2v22c-4 4-10 2-12-2c-5 0-8-6-4-9c-3-3-2-6 0-7z" fill="#d2d2d2"/><rect x="471" y="843.500" width="45" height="11.500" rx="5" fill="none" stroke="#d2d2d2" stroke-width="2"/><path d="M477 846.500h33M477 852h33" stroke="#d2d2d2" stroke-width="1.800"/><rect x="523" y="858.500" width="39" height="6.500" fill="none" stroke="#d2d2d2" stroke-width="1.600"/><path d="M526 861.500h33" stroke="#d2d2d2" stroke-width="1.600"/><rect x="536.500" y="949" width="12.500" height="12.500" fill="#d2d2d2"/><circle cx="569.500" cy="934.500" r="4" fill="#d2d2d2"/><circle cx="563" cy="941.500" r="3.700" fill="#d2d2d2"/><circle cx="570.500" cy="941.500" r="4" fill="#d2d2d2"/><circle cx="569.500" cy="948.500" r="3.300" fill="#d2d2d2"/><rect x="566.500" y="956" width="10" height="86" fill="none" stroke="#d2d2d2" stroke-width="2"/><path d="M566.500 999h10" stroke="#d2d2d2" stroke-width="1.600"/><path d="M570 960v12M574 966v10M569 992h7M570 1004l6 4M570 1015l6-3" stroke="#d2d2d2" stroke-width="2.200"/><path d="M508 1104.500h18M558 1104.500h18" stroke="#d2d2d2" stroke-width="1.500"/><circle cx="635.500" cy="741" r="28.500" fill="none" stroke="#808389" stroke-width="7.500"/><circle cx="635.500" cy="741" r="24" fill="none" stroke="#5a5c60" stroke-width="1.500"/><rect x="620" y="725.500" width="31" height="31" fill="#8e8e8e" stroke="#7a7a7a" stroke-width="1"/><text x="635.500" y="744.500" font-size="8" fill="#6c6c70" text-anchor="middle" font-family="Liberation Sans">TOP</text><text x="635.5" y="713" font-size="11.500" font-weight="bold" fill="#a9abb0" text-anchor="middle" font-family="Liberation Sans">N</text><text x="635.5" y="777.5" font-size="11.500" font-weight="bold" fill="#a9abb0" text-anchor="middle" font-family="Liberation Sans">S</text><text x="603" y="745" font-size="11.500" font-weight="bold" fill="#a9abb0" text-anchor="middle" font-family="Liberation Sans">W</text><text x="668.5" y="745" font-size="11.500" font-weight="bold" fill="#a9abb0" text-anchor="middle" font-family="Liberation Sans">E</text><path d="M371.500 1113v-26" stroke="#2a7a2a" stroke-width="1.400"/><path d="M371.500 1113h26" stroke="#8e2424" stroke-width="1.400"/><text x="369" y="1087" font-size="10" fill="#2f9a2f" font-family="Liberation Sans">y</text><text x="368" y="1116" font-size="9" font-weight="bold" fill="#3030a0" font-family="Liberation Sans">z</text><text x="394" y="1116" font-size="9" fill="#b02020" font-family="Liberation Sans">x</text><rect x="343" y="1145" width="348.200" height="746" fill="#353535"/><path d="M366.2 1147.0V1889.0M397.1 1147.0V1889.0M428.0 1147.0V1889.0M458.8 1147.0V1889.0M489.7 1147.0V1889.0M520.5 1147.0V1889.0M551.4 1147.0V1889.0M582.2 1147.0V1889.0M613.1 1147.0V1889.0M643.9 1147.0V1889.0M674.8 1147.0V1889.0M345.0 1166.9H689.2M345.0 1197.8H689.2M345.0 1228.6H689.2M345.0 1259.5H689.2M345.0 1290.3H689.2M345.0 1321.2H689.2M345.0 1352.0H689.2M345.0 1382.9H689.2M345.0 1413.7H689.2M345.0 1444.6H689.2M345.0 1475.4H689.2M345.0 1506.3H689.2M345.0 1537.1H689.2M345.0 1568.0H689.2M345.0 1598.8H689.2M345.0 1629.7H689.2M345.0 1660.5H689.2M345.0 1691.4H689.2M345.0 1722.2H689.2M345.0 1753.1H689.2M345.0 1783.9H689.2M345.0 1814.8H689.2M345.0 1845.6H689.2M345.0 1876.5H689.2" stroke="#585858" stroke-width="1.15" fill="none"/><path d="M520.500 1147V1889M345 1568H689" stroke="#0c0c0c" stroke-width="1.300"/><g fill="none" stroke="#d2d2d2" stroke-width="1.600"><rect x="371.500" y="1469.500" width="294" height="98.500"/><rect x="374.500" y="1472.500" width="288" height="92"/><path d="M479.500 1469.500V1568M483.500 1473V1565"/><path d="M374.500 1476H662" stroke-width="3"/><path d="M371.500 1563H666" stroke-width="2"/><rect x="509.500" y="1491.500" width="25" height="32"/><path d="M509.500 1491.500l25 32"/><rect x="545.500" y="1498" width="23" height="30.500"/><path d="M545.500 1528.500l23-30.500"/><rect x="569" y="1497" width="23" height="31.500"/><path d="M569 1528.500l23-31.500"/><rect x="576" y="1504.500" width="19" height="24"/><path d="M576 1528.500l19-24"/><path d="M550 1476v16"/><path d="M547 1492h6l3 12h-12z" fill="#d2d2d2"/><path d="M540 1515v49M535 1565h10" stroke-width="2.400"/><circle cx="535" cy="1521" r="3" fill="#d2d2d2"/><circle cx="540" cy="1527" r="3" fill="#d2d2d2"/><circle cx="545" cy="1533" r="3" fill="#d2d2d2"/><rect x="551" y="1539" width="65.500" height="22"/><path d="M551 1550h65.500M567 1539v22M583.500 1539v22M600 1539v22"/><path d="M557 1537v-12M555 1528l4-6M559 1529l3-4" stroke-width="1.200"/><circle cx="567" cy="1536" r="2.200" fill="#d2d2d2"/><circle cx="579" cy="1536" r="2.200" fill="#d2d2d2"/><path d="M589 1538v-8M598 1538v-6" stroke-width="2.400"/><path d="M661 1490v70" stroke-width="2.400"/><rect x="376" y="1484" width="9" height="78" fill="#d2d2d2"/><path d="M398 1473v92M402 1473v92M410 1477v86M446 1477v86M452 1473v92M456 1473v92" stroke-width="1.800"/><rect x="409" y="1479" width="34" height="12" stroke-width="2.400"/><path d="M412 1496V1562M418 1496V1562M424 1496V1562M430 1496V1562M436 1496V1562M442 1496V1562M410 1498H446M410 1505H446M410 1512H446M410 1519H446M410 1526H446M410 1533H446M410 1540H446M410 1547H446M410 1554H446M410 1561H446" stroke-width="1.300"/><path d="M388 1562l3-12 3 4 4-8 5 7 4-14 4 10 5-6 4 12 6-16 5 10 6-8 4 14 5-6 4 12z" fill="#d2d2d2"/><rect x="464.500" y="1543" width="11" height="4"/><path d="M466 1547v15M474 1547v15M466 1555h8"/></g><rect x="620" y="1186.500" width="31" height="30.500" fill="#8e8e8e" stroke="#7a7a7a" stroke-width="1"/><text x="635.500" y="1205" font-size="8" fill="#6c6c70" text-anchor="middle" font-family="Liberation Sans">LEFT</text><ellipse cx="635" cy="1218.500" rx="37" ry="3" fill="none" stroke="#9a9a9a" stroke-width="1.200"/><ellipse cx="635" cy="1218" rx="30" ry="2" fill="none" stroke="#6a6a6a" stroke-width="1"/><path d="M371 1865v-27" stroke="#26268c" stroke-width="1.400"/><path d="M371 1865h-22" stroke="#2a7a2a" stroke-width="1.400"/><text x="369" y="1838" font-size="9" font-weight="bold" fill="#3030b0" font-family="Liberation Sans">z</text><text x="345" y="1864" font-size="10" fill="#2f9a2f" font-family="Liberation Sans">y</text><rect x="371" y="1860" width="4" height="5" fill="#b02020"/><rect x="696" y="684.300" width="1649" height="456.200" fill="#353535"/><path d="M706.5 686.3V1138.5M718.6 686.3V1138.5M730.7 686.3V1138.5M742.7 686.3V1138.5M754.8 686.3V1138.5M766.9 686.3V1138.5M779.0 686.3V1138.5M791.0 686.3V1138.5M803.1 686.3V1138.5M815.2 686.3V1138.5M827.3 686.3V1138.5M839.4 686.3V1138.5M851.4 686.3V1138.5M863.5 686.3V1138.5M875.6 686.3V1138.5M887.7 686.3V1138.5M899.7 686.3V1138.5M911.8 686.3V1138.5M923.9 686.3V1138.5M936.0 686.3V1138.5M948.1 686.3V1138.5M960.1 686.3V1138.5M972.2 686.3V1138.5M984.3 686.3V1138.5M996.4 686.3V1138.5M1008.4 686.3V1138.5M1020.5 686.3V1138.5M1032.6 686.3V1138.5M1044.7 686.3V1138.5M1056.8 686.3V1138.5M1068.8 686.3V1138.5M1080.9 686.3V1138.5M1093.0 686.3V1138.5M1105.1 686.3V1138.5M1117.1 686.3V1138.5M1129.2 686.3V1138.5M1141.3 686.3V1138.5M1153.4 686.3V1138.5M1165.5 686.3V1138.5M1177.5 686.3V1138.5M1189.6 686.3V1138.5M1201.7 686.3V1138.5M1213.8 686.3V1138.5M1225.8 686.3V1138.5M1237.9 686.3V1138.5M1250.0 686.3V1138.5M1262.1 686.3V1138.5M1274.2 686.3V1138.5M1286.2 686.3V1138.5M1298.3 686.3V1138.5M1310.4 686.3V1138.5M1322.5 686.3V1138.5M1334.6 686.3V1138.5M1346.6 686.3V1138.5M1358.7 686.3V1138.5M1370.8 686.3V1138.5M1382.9 686.3V1138.5M1394.9 686.3V1138.5M1407.0 686.3V1138.5M1419.1 686.3V1138.5M1431.2 686.3V1138.5M1443.3 686.3V1138.5M1455.3 686.3V1138.5M1467.4 686.3V1138.5M1479.5 686.3V1138.5M1491.6 686.3V1138.5M1503.6 686.3V1138.5M1515.7 686.3V1138.5M1527.8 686.3V1138.5M1539.9 686.3V1138.5M1552.0 686.3V1138.5M1564.0 686.3V1138.5M1576.1 686.3V1138.5M1588.2 686.3V1138.5M1600.3 686.3V1138.5M1612.3 686.3V1138.5M1624.4 686.3V1138.5M1636.5 686.3V1138.5M1648.6 686.3V1138.5M1660.7 686.3V1138.5M1672.7 686.3V1138.5M1684.8 686.3V1138.5M1696.9 686.3V1138.5M1709.0 686.3V1138.5M1721.0 686.3V1138.5M1733.1 686.3V1138.5M1745.2 686.3V1138.5M1757.3 686.3V1138.5M1769.4 686.3V1138.5M1781.4 686.3V1138.5M1793.5 686.3V1138.5M1805.6 686.3V1138.5M1817.7 686.3V1138.5M1829.7 686.3V1138.5M1841.8 686.3V1138.5M1853.9 686.3V1138.5M1866.0 686.3V1138.5M1878.1 686.3V1138.5M1890.1 686.3V1138.5M1902.2 686.3V1138.5M1914.3 686.3V1138.5M1926.4 686.3V1138.5M1938.5 686.3V1138.5M1950.5 686.3V1138.5M1962.6 686.3V1138.5M1974.7 686.3V1138.5M1986.8 686.3V1138.5M1998.8 686.3V1138.5M2010.9 686.3V1138.5M2023.0 686.3V1138.5M2035.1 686.3V1138.5M2047.2 686.3V1138.5M2059.2 686.3V1138.5M2071.3 686.3V1138.5M2083.4 686.3V1138.5M2095.5 686.3V1138.5M2107.5 686.3V1138.5M2119.6 686.3V1138.5M2131.7 686.3V1138.5M2143.8 686.3V1138.5M2155.9 686.3V1138.5M2167.9 686.3V1138.5M2180.0 686.3V1138.5M2192.1 686.3V1138.5M2204.2 686.3V1138.5M2216.2 686.3V1138.5M2228.3 686.3V1138.5M2240.4 686.3V1138.5M2252.5 686.3V1138.5M2264.6 686.3V1138.5M2276.6 686.3V1138.5M2288.7 686.3V1138.5M2300.8 686.3V1138.5M2312.9 686.3V1138.5M2324.9 686.3V1138.5M2337.0 686.3V1138.5M698.0 695.5H2343.0M698.0 707.6H2343.0M698.0 719.7H2343.0M698.0 731.8H2343.0M698.0 743.9H2343.0M698.0 755.9H2343.0M698.0 768.0H2343.0M698.0 780.1H2343.0M698.0 792.2H2343.0M698.0 804.2H2343.0M698.0 816.3H2343.0M698.0 828.4H2343.0M698.0 840.5H2343.0M698.0 852.6H2343.0M698.0 864.6H2343.0M698.0 876.7H2343.0M698.0 888.8H2343.0M698.0 900.9H2343.0M698.0 913.0H2343.0M698.0 925.0H2343.0M698.0 937.1H2343.0M698.0 949.2H2343.0M698.0 961.3H2343.0M698.0 973.3H2343.0M698.0 985.4H2343.0M698.0 997.5H2343.0M698.0 1009.6H2343.0M698.0 1021.7H2343.0M698.0 1033.7H2343.0M698.0 1045.8H2343.0M698.0 1057.9H2343.0M698.0 1070.0H2343.0M698.0 1082.0H2343.0M698.0 1094.1H2343.0M698.0 1106.2H2343.0M698.0 1118.3H2343.0M698.0 1130.4H2343.0" stroke="#646464" stroke-width="1" fill="none"/><path d="M1527.800 686V1139M698 1106.200H2343" stroke="#0c0c0c" stroke-width="1.300"/><rect x="1352" y="720.500" width="363" height="374" fill="#e9e9e9"/><rect x="1352" y="720.500" width="121.500" height="374" fill="#ececec"/><clipPath id="cw"><rect x="1352" y="720.500" width="121" height="374"/></clipPath><g clip-path="url(#cw)"><path d="M1346.6 700.0V1100.0M1358.7 700.0V1100.0M1370.8 700.0V1100.0M1382.9 700.0V1100.0M1394.9 700.0V1100.0M1407.0 700.0V1100.0M1419.1 700.0V1100.0M1431.2 700.0V1100.0M1443.3 700.0V1100.0M1455.3 700.0V1100.0M1467.4 700.0V1100.0M1340.0 707.6H1476.0M1340.0 719.7H1476.0M1340.0 731.8H1476.0M1340.0 743.9H1476.0M1340.0 755.9H1476.0M1340.0 768.0H1476.0M1340.0 780.1H1476.0M1340.0 792.2H1476.0M1340.0 804.2H1476.0M1340.0 816.3H1476.0M1340.0 828.4H1476.0M1340.0 840.5H1476.0M1340.0 852.6H1476.0M1340.0 864.6H1476.0M1340.0 876.7H1476.0M1340.0 888.8H1476.0M1340.0 900.9H1476.0M1340.0 913.0H1476.0M1340.0 925.0H1476.0M1340.0 937.1H1476.0M1340.0 949.2H1476.0M1340.0 961.3H1476.0M1340.0 973.3H1476.0M1340.0 985.4H1476.0M1340.0 997.5H1476.0M1340.0 1009.6H1476.0M1340.0 1021.7H1476.0M1340.0 1033.7H1476.0M1340.0 1045.8H1476.0M1340.0 1057.9H1476.0M1340.0 1070.0H1476.0M1340.0 1082.0H1476.0M1340.0 1094.1H1476.0" stroke="#3c3c3c" stroke-width="1" fill="none"/></g><rect x="1352" y="1094" width="363" height="12" fill="#ad5420"/><rect x="1352" y="1094" width="363" height="12" fill="url(#wood)"/><path d="M1341.500 981v125M1336 981h11" stroke="#1c1c1c" stroke-width="2"/><path d="M1338 984c-6 30 -6 70 2 100" stroke="#2a2a2a" stroke-width="1" fill="none"/><rect x="1545.5" y="804" width="96.9" height="12" fill="#aeaeae"/><rect x="1546.5" y="831.2" width="2.1" height="21.5" fill="#3f7f9f"/><rect x="1548.8" y="830.8" width="2.5" height="21.9" fill="#4a7fb0"/><rect x="1551.5" y="834.0" width="3.3" height="18.7" fill="#222"/><rect x="1555.0" y="828.3" width="2.5" height="24.4" fill="#b08a4a"/><rect x="1557.7" y="834.3" width="3.3" height="18.4" fill="#4a7fb0"/><rect x="1561.3" y="829.3" width="2.6" height="23.4" fill="#2d5f8f"/><rect x="1564.1" y="827.1" width="1.9" height="25.6" fill="#9a3030"/><rect x="1566.2" y="828.0" width="1.7" height="24.7" fill="#222"/><rect x="1568.1" y="832.8" width="3.4" height="19.9" fill="#d8d8d8"/><rect x="1571.7" y="828.7" width="2.4" height="24.0" fill="#4a7fb0"/><rect x="1574.3" y="833.0" width="1.9" height="19.7" fill="#333"/><rect x="1576.4" y="827.0" width="2.0" height="25.7" fill="#b08a4a"/><rect x="1578.6" y="832.4" width="3.3" height="20.3" fill="#3f7f9f"/><rect x="1582.1" y="830.8" width="2.3" height="21.9" fill="#4a7fb0"/><rect x="1584.6" y="827.5" width="2.3" height="25.2" fill="#c9b38a"/><rect x="1587.1" y="829.9" width="3.6" height="22.8" fill="#cfc8b8"/><rect x="1590.9" y="831.2" width="2.3" height="21.5" fill="#2d5f8f"/><rect x="1593.3" y="834.5" width="3.0" height="18.2" fill="#3f7f9f"/><rect x="1596.6" y="835.4" width="2.1" height="17.3" fill="#b08a4a"/><rect x="1598.9" y="835.7" width="3.6" height="17.0" fill="#d8d8d8"/><rect x="1602.7" y="836.4" width="3.4" height="16.3" fill="#d8d8d8"/><rect x="1606.3" y="836.1" width="3.3" height="16.6" fill="#3a6ea5"/><rect x="1609.8" y="830.8" width="2.4" height="21.9" fill="#4a7fb0"/><rect x="1612.4" y="831.6" width="3.6" height="21.1" fill="#c9b38a"/><rect x="1616.1" y="835.5" width="1.6" height="17.2" fill="#5a2a22"/><rect x="1618.0" y="833.7" width="3.5" height="19.0" fill="#222"/><rect x="1621.7" y="828.0" width="1.7" height="24.7" fill="#8c2a2a"/><rect x="1623.6" y="832.8" width="3.4" height="19.9" fill="#6a3a2a"/><rect x="1627.2" y="828.0" width="2.4" height="24.7" fill="#2d5f8f"/><rect x="1629.7" y="827.3" width="2.8" height="25.4" fill="#d8d8d8"/><rect x="1632.8" y="829.5" width="2.9" height="23.2" fill="#d8d8d8"/><rect x="1635.9" y="831.4" width="3.6" height="21.3" fill="#3a6ea5"/><rect x="1639.6" y="826.8" width="3.2" height="25.9" fill="#d8d8d8"/><rect x="1547.5" y="866.3" width="2.8" height="22.4" fill="#e4e0da"/><rect x="1550.5" y="865.9" width="2.5" height="22.8" fill="#e4e0da"/><rect x="1553.3" y="872.4" width="3.1" height="16.3" fill="#f4f2ee"/><rect x="1556.5" y="870.1" width="3.5" height="18.6" fill="#ddd"/><rect x="1560.3" y="870.8" width="2.8" height="17.9" fill="#e4e0da"/><rect x="1563.3" y="870.0" width="3.3" height="18.7" fill="#f4f2ee"/><rect x="1566.8" y="872.3" width="3.1" height="16.4" fill="#eceae4"/><rect x="1572.5" y="870.7" width="2.1" height="18.0" fill="#f4f2ee"/><rect x="1574.8" y="869.4" width="1.8" height="19.3" fill="#eceae4"/><rect x="1576.8" y="864.1" width="2.5" height="24.6" fill="#e4e0da"/><rect x="1579.5" y="870.4" width="3.1" height="18.3" fill="#e4e0da"/><rect x="1582.8" y="871.4" width="2.1" height="17.3" fill="#eceae4"/><rect x="1585.0" y="864.3" width="2.2" height="24.4" fill="#e4e0da"/><rect x="1587.4" y="864.4" width="2.3" height="24.3" fill="#ddd"/><rect x="1589.9" y="871.3" width="2.3" height="17.4" fill="#e4e0da"/><rect x="1592.4" y="866.3" width="2.5" height="22.4" fill="#ddd"/><rect x="1595.1" y="863.5" width="2.4" height="25.2" fill="#f4f2ee"/><rect x="1597.8" y="864.4" width="2.6" height="24.3" fill="#ddd"/><rect x="1605.4" y="867.5" width="2.9" height="21.2" fill="#e4e0da"/><rect x="1609.0" y="860.3" width="3.4" height="28.4" fill="#1e1e1e"/><rect x="1612.6" y="867.3" width="1.8" height="21.4" fill="#7a4a30"/><rect x="1614.6" y="859.8" width="3.4" height="28.9" fill="#3a2a22"/><rect x="1618.2" y="868.7" width="2.6" height="20.0" fill="#7a4a30"/><rect x="1621.0" y="864.1" width="2.9" height="24.6" fill="#5a3a2a"/><rect x="1624.1" y="867.2" width="2.3" height="21.5" fill="#4a3a30"/><rect x="1626.6" y="869.4" width="3.2" height="19.3" fill="#5a3a2a"/><rect x="1630.0" y="860.8" width="2.7" height="27.9" fill="#1e1e1e"/><rect x="1632.9" y="860.9" width="3.4" height="27.8" fill="#3a2a22"/><rect x="1636.5" y="863.6" width="2.6" height="25.1" fill="#1e1e1e"/><rect x="1639.3" y="863.1" width="2.1" height="25.6" fill="#3a2a22"/><rect x="1570" y="862" width="2.200" height="26" fill="#c03080"/><rect x="1546.5" y="898.2" width="2.5" height="26.5" fill="#3a6ea5"/><rect x="1549.2" y="906.2" width="3.2" height="18.5" fill="#333"/><rect x="1552.6" y="897.3" width="3.5" height="27.4" fill="#6a3a2a"/><rect x="1556.3" y="905.0" width="2.6" height="19.7" fill="#d8d8d8"/><rect x="1559.1" y="900.3" width="2.9" height="24.4" fill="#5a2a22"/><rect x="1562.2" y="902.0" width="3.6" height="22.7" fill="#3a6ea5"/><rect x="1566.0" y="902.5" width="3.0" height="22.2" fill="#8c2a2a"/><rect x="1569.2" y="901.6" width="1.7" height="23.1" fill="#6a3a2a"/><rect x="1571.1" y="897.9" width="2.4" height="26.8" fill="#d8d8d8"/><rect x="1573.7" y="899.8" width="1.7" height="24.9" fill="#e8e4da"/><rect x="1575.6" y="899.1" width="2.4" height="25.6" fill="#5a2a22"/><rect x="1578.2" y="903.7" width="2.0" height="21.0" fill="#9a3030"/><rect x="1580.5" y="902.0" width="2.4" height="22.7" fill="#4a7fb0"/><rect x="1583.1" y="896.0" width="2.3" height="28.7" fill="#cfc8b8"/><rect x="1585.6" y="901.6" width="2.1" height="23.1" fill="#cfc8b8"/><rect x="1587.9" y="897.4" width="3.1" height="27.3" fill="#d8d8d8"/><rect x="1591.1" y="898.6" width="2.9" height="26.1" fill="#2d5f8f"/><rect x="1594.3" y="898.8" width="3.2" height="25.9" fill="#5a2a22"/><rect x="1597.7" y="906.2" width="3.1" height="18.5" fill="#2d5f8f"/><rect x="1601.1" y="902.6" width="2.9" height="22.1" fill="#e8e4da"/><rect x="1604.2" y="905.4" width="3.3" height="19.3" fill="#b08a4a"/><rect x="1607.7" y="899.0" width="2.6" height="25.7" fill="#c9b38a"/><rect x="1610.4" y="906.3" width="3.2" height="18.4" fill="#6a3a2a"/><rect x="1613.8" y="904.1" width="2.7" height="20.6" fill="#2d5f8f"/><rect x="1616.7" y="906.0" width="3.5" height="18.7" fill="#3f7f9f"/><rect x="1620.3" y="905.9" width="2.0" height="18.8" fill="#b08a4a"/><rect x="1622.5" y="899.9" width="2.1" height="24.8" fill="#d8d8d8"/><rect x="1624.8" y="900.1" width="2.1" height="24.6" fill="#6a3a2a"/><rect x="1627.1" y="905.8" width="2.4" height="18.9" fill="#4a7fb0"/><rect x="1629.7" y="898.5" width="2.4" height="26.2" fill="#222"/><rect x="1632.4" y="900.3" width="2.7" height="24.4" fill="#b08a4a"/><rect x="1635.3" y="899.6" width="2.6" height="25.1" fill="#8c2a2a"/><rect x="1638.1" y="901.2" width="1.9" height="23.5" fill="#222"/><rect x="1640.2" y="901.8" width="2.6" height="22.9" fill="#8c2a2a"/><rect x="1546.5" y="935.6" width="1.9" height="25.4" fill="#e8e4da"/><rect x="1548.6" y="941.2" width="2.2" height="19.8" fill="#c9b38a"/><rect x="1551.0" y="934.5" width="2.9" height="26.5" fill="#e8e4da"/><rect x="1554.1" y="940.8" width="2.8" height="20.2" fill="#3a6ea5"/><rect x="1557.1" y="935.1" width="2.1" height="25.9" fill="#e8e4da"/><rect x="1559.5" y="940.2" width="2.3" height="20.8" fill="#4a7fb0"/><rect x="1562.0" y="936.2" width="2.4" height="24.8" fill="#4a7fb0"/><rect x="1564.6" y="934.8" width="2.5" height="26.2" fill="#e8e4da"/><rect x="1567.3" y="933.1" width="1.7" height="27.9" fill="#8c2a2a"/><rect x="1569.2" y="934.3" width="3.2" height="26.7" fill="#4a7fb0"/><rect x="1593.6" y="944.1" width="1.7" height="16.9" fill="#eceae4"/><rect x="1602.0" y="945.7" width="1.9" height="15.3" fill="#f4f2ee"/><rect x="1604.2" y="945.3" width="3.1" height="15.7" fill="#e4e0da"/><rect x="1609.3" y="945.9" width="2.3" height="15.1" fill="#f8f8f8"/><rect x="1618.0" y="941.4" width="2.6" height="19.6" fill="#4a3a30"/><rect x="1620.8" y="937.8" width="2.4" height="23.2" fill="#1e1e1e"/><rect x="1623.4" y="939.0" width="1.8" height="22.0" fill="#1e1e1e"/><rect x="1625.3" y="933.6" width="1.8" height="27.4" fill="#8a5a3a"/><rect x="1627.3" y="940.5" width="3.1" height="20.5" fill="#1e1e1e"/><rect x="1630.6" y="933.6" width="1.8" height="27.4" fill="#5a3a2a"/><rect x="1632.6" y="938.2" width="2.9" height="22.8" fill="#1e1e1e"/><rect x="1635.8" y="937.6" width="3.0" height="23.4" fill="#2a2a2a"/><rect x="1638.9" y="934.2" width="2.0" height="26.8" fill="#5a3a2a"/><path d="M1546 968l14 28M1551 968l12 26" stroke="#8c2020" stroke-width="3"/><path d="M1558 990l14-16" stroke="#e0e0e0" stroke-width="2"/><rect x="1577.0" y="974.2" width="1.8" height="23.3" fill="#5a2a22"/><rect x="1579.0" y="973.8" width="3.0" height="23.7" fill="#5a2a22"/><rect x="1582.3" y="975.0" width="2.0" height="22.5" fill="#5a2a22"/><rect x="1584.4" y="972.5" width="1.7" height="25.0" fill="#e8e4da"/><rect x="1586.4" y="976.0" width="2.8" height="21.5" fill="#2a2a2a"/><rect x="1589.3" y="970.9" width="2.4" height="26.6" fill="#e8e4da"/><rect x="1591.9" y="972.7" width="2.1" height="24.8" fill="#2a2a2a"/><rect x="1594.2" y="975.4" width="3.5" height="22.1" fill="#7a2222"/><rect x="1597.9" y="971.1" width="2.3" height="26.4" fill="#2a2a2a"/><rect x="1600.4" y="972.9" width="2.8" height="24.6" fill="#5a2a22"/><rect x="1603.4" y="972.7" width="1.8" height="24.8" fill="#5a2a22"/><rect x="1605.4" y="971.5" width="3.1" height="26.0" fill="#e8e4da"/><rect x="1608.7" y="971.0" width="2.8" height="26.5" fill="#e8e4da"/><rect x="1611.7" y="974.1" width="2.7" height="23.4" fill="#2a2a2a"/><rect x="1614.6" y="977.0" width="2.3" height="20.5" fill="#c9b38a"/><rect x="1617.1" y="970.0" width="3.4" height="27.5" fill="#e8e4da"/><rect x="1620.7" y="976.8" width="3.4" height="20.7" fill="#e8e4da"/><rect x="1624.3" y="977.0" width="3.0" height="20.5" fill="#c9b38a"/><rect x="1627.5" y="978.1" width="1.7" height="19.4" fill="#7a2222"/><rect x="1629.4" y="973.1" width="3.1" height="24.4" fill="#e8e4da"/><rect x="1632.7" y="978.0" width="2.9" height="19.5" fill="#3a2a22"/><rect x="1565.800" y="1002.500" width="25" height="13" fill="#a87848"/><rect x="1581.0" y="1025.1" width="1.7" height="8.9" fill="#1e4a4a"/><rect x="1582.9" y="1026.0" width="1.8" height="8.0" fill="#3a3a3a"/><rect x="1584.9" y="1023.9" width="1.9" height="10.1" fill="#2a2a2a"/><rect x="1587.0" y="1024.6" width="1.7" height="9.4" fill="#1e4a4a"/><rect x="1588.8" y="1023.3" width="2.7" height="10.7" fill="#8a7a5a"/><rect x="1591.7" y="1026.6" width="3.0" height="7.4" fill="#2a2a2a"/><rect x="1594.9" y="1024.1" width="3.0" height="9.9" fill="#3a3a3a"/><rect x="1598.1" y="1023.6" width="3.5" height="10.4" fill="#3a3a3a"/><rect x="1601.8" y="1026.7" width="2.6" height="7.3" fill="#2a2a2a"/><rect x="1604.6" y="1024.2" width="3.3" height="9.8" fill="#1e4a4a"/><rect x="1608.0" y="1024.9" width="3.0" height="9.1" fill="#1e4a4a"/><rect x="1611.2" y="1025.2" width="2.2" height="8.8" fill="#1e4a4a"/><rect x="1613.7" y="1025.3" width="2.5" height="8.7" fill="#8a7a5a"/><rect x="1616.3" y="1025.6" width="2.3" height="8.4" fill="#1e4a4a"/><rect x="1620" y="1022" width="22" height="12" fill="#b89a68"/><path d="M1545.5 792.300V1034M1557.6 792.300V1034M1569.7 792.300V1034M1581.8 792.300V1034M1593.9 792.300V1034M1606.1 792.300V1034M1618.2 792.300V1034M1630.3 792.300V1034M1642.4 792.300V1034M1545.5 792.3H1642.4M1545.5 804.0H1642.4M1545.5 816.0H1642.4M1545.5 826.6H1642.4M1545.5 852.7H1642.4M1545.5 859.0H1642.4M1545.5 888.7H1642.4M1545.5 895.7H1642.4M1545.5 924.7H1642.4M1545.5 932.0H1642.4M1545.5 961.0H1642.4M1545.5 968.0H1642.4M1545.5 997.5H1642.4M1545.5 1008.0H1642.4M1545.5 1021.6H1642.4M1545.5 1034.0H1642.4" stroke="#8a8a8a" stroke-width="1" fill="none"/><path d="M1583 793h21l5 30.500h-31z" fill="#050505"/><rect x="2274.400" y="725.200" width="30" height="30.800" fill="#8c8c8c" stroke="#7c7c7c" stroke-width="1"/><text x="2289.500" y="744" font-size="7.500" fill="#66666a" text-anchor="middle" font-family="Liberation Sans">FRONT</text><ellipse cx="2288" cy="758" rx="39" ry="3" fill="none" stroke="#a0a0a0" stroke-width="1.200"/><ellipse cx="2288" cy="757.500" rx="31" ry="2" fill="none" stroke="#707070" stroke-width="1"/><path d="M723.500 1112v-26" stroke="#26268c" stroke-width="1.600"/><path d="M723.500 1112h26" stroke="#8e2424" stroke-width="1.600"/><text x="721" y="1087" font-size="9" fill="#2a2a90" font-family="Liberation Sans">z</text><text x="721" y="1115" font-size="9" fill="#2a7a2a" font-family="Liberation Sans">y</text><text x="748" y="1115" font-size="9" fill="#8e2424" font-family="Liberation Sans">x</text></svg>
<div style="position:absolute;top:691.3px;height:16px;line-height:16px;font-size:11.60px;color:#dcdcdc;white-space:pre;letter-spacing:0.031px;left:347.2px;">[+] [Top ] [User Defined ] [Wireframe ]</div>
<div style="position:absolute;top:691.3px;height:16px;line-height:16px;font-size:11.60px;color:#dcdcdc;white-space:pre;letter-spacing:-0.047px;left:701.4px;">[+] [Front ] [User Defined ] [Default Shading ]</div>
<div style="position:absolute;top:1152.3px;height:16px;line-height:16px;font-size:11.60px;color:#dcdcdc;white-space:pre;letter-spacing:0.064px;left:347.2px;">[+] [Left ] [User Defined ] [Wireframe ]</div>
<!-- part_persp -->
<div style="position:absolute;left:695.9px;top:1140.8px;width:1650.6px;height:4.0px;background:#404036;"></div>
<div style="position:absolute;left:695.9px;top:1144.8px;width:1650.8px;height:747.7px;background:#6c6644;"></div>
<svg style="position:absolute;left:0;top:0" width="2560" height="2560" viewBox="0 0 2560 2560"><defs>
<filter id="spk" x="0" y="0" width="100%" height="100%" color-interpolation-filters="sRGB"><feTurbulence type="fractalNoise" baseFrequency="0.2" numOctaves="3" seed="4"/><feColorMatrix type="matrix" values="1 0 0 0 0  1 0 0 0 0  1 0 0 0 0  0 0 0 0 1"/><feComponentTransfer><feFuncR type="table" tableValues="0.6 0.64 0.72 0.82 0.88 0.908 0.925 0.935 0.94 0.94 0.94"/><feFuncG type="table" tableValues="0.6 0.64 0.72 0.82 0.88 0.908 0.925 0.935 0.94 0.94 0.94"/><feFuncB type="table" tableValues="0.6 0.64 0.72 0.82 0.88 0.908 0.925 0.935 0.94 0.94 0.94"/></feComponentTransfer><feGaussianBlur stdDeviation="0.55"/></filter>
<filter id="fine" x="0" y="0" width="100%" height="100%" color-interpolation-filters="sRGB"><feTurbulence type="fractalNoise" baseFrequency="0.12" numOctaves="2" seed="9"/><feColorMatrix type="matrix" values="1 0 0 0 0  1 0 0 0 0  1 0 0 0 0  0 0 0 0 1"/><feComponentTransfer><feFuncR type="table" tableValues="0.87 0.89 0.905 0.915 0.925 0.93"/><feFuncG type="table" tableValues="0.87 0.89 0.905 0.915 0.925 0.93"/><feFuncB type="table" tableValues="0.87 0.89 0.905 0.915 0.925 0.93"/></feComponentTransfer></filter>
<linearGradient id="gw" x1="0" x2="1"><stop offset="0" stop-color="#9d9d9d"/><stop offset="0.12" stop-color="#8a8a8a"/><stop offset="1" stop-color="#7f7f7f"/></linearGradient>
<linearGradient id="smoke" x1="0" x2="1"><stop offset="0" stop-color="#9a9a9a"/><stop offset="0.3" stop-color="#3a3a3a"/><stop offset="0.55" stop-color="#1c1c1c"/><stop offset="0.8" stop-color="#8a8a8a"/><stop offset="1" stop-color="#a0a0a0"/></linearGradient>
<pattern id="herr" width="72" height="22" patternUnits="userSpaceOnUse"><rect width="72" height="22" fill="#743410"/><path d="M0 22l36-22l36 22" fill="none" stroke="#6f300e" stroke-width="5" opacity="0.7"/><path d="M0 11l18-11M72 11l-18-11M18 22l18-11l18 11" fill="none" stroke="#85401a" stroke-width="4" opacity="0.6"/></pattern>
<filter id="soft" x="-2%" y="-2%" width="104%" height="104%"><feGaussianBlur stdDeviation="2"/></filter>
<pattern id="rug" width="26" height="18" patternUnits="userSpaceOnUse"><rect width="26" height="18" fill="#77525a"/><path d="M0 9l6.500-6l6.500 6l-6.500 6z" fill="#7e4a52"/><path d="M13 9l6.500-6l6.500 6l-6.500 6z" fill="#6a5460"/><circle cx="6.500" cy="9" r="1.300" fill="#a07878"/><circle cx="19.500" cy="9" r="1.300" fill="#5c4a58"/></pattern>
<pattern id="weave" width="5" height="5" patternUnits="userSpaceOnUse"><rect width="5" height="5" fill="#cbc1b1"/><path d="M0 2.500h5M2.500 0v5" stroke="#b3a794" stroke-width="0.800"/></pattern>
<linearGradient id="pouf" x1="0" x2="1"><stop offset="0" stop-color="#b4b0aa"/><stop offset="0.3" stop-color="#cbc7c2"/><stop offset="0.75" stop-color="#c6c2bd"/><stop offset="1" stop-color="#aaa6a0"/></linearGradient>
<linearGradient id="jamb" x1="0" x2="1"><stop offset="0" stop-color="#cfd0d2"/><stop offset="0.08" stop-color="#bbbcbf"/><stop offset="0.55" stop-color="#b8b9bc"/><stop offset="0.82" stop-color="#a0a1a4"/><stop offset="1" stop-color="#b2b3b6"/></linearGradient>
<linearGradient id="jambr" x1="1" x2="0"><stop offset="0" stop-color="#cfd0d2"/><stop offset="0.08" stop-color="#c0c1c4"/><stop offset="0.55" stop-color="#bbbcbf"/><stop offset="0.82" stop-color="#a0a1a4"/><stop offset="1" stop-color="#b2b3b6"/></linearGradient>
<linearGradient id="jambt" x1="0" x2="0" y1="0" y2="1"><stop offset="0" stop-color="#d2d3d5"/><stop offset="0.08" stop-color="#c4c5c8"/><stop offset="0.55" stop-color="#bfc0c3"/><stop offset="0.82" stop-color="#a4a5a8"/><stop offset="1" stop-color="#b4b5b8"/></linearGradient>
<radialGradient id="gold" cx="0.4" cy="0.4"><stop offset="0" stop-color="#b59c6c"/><stop offset="1" stop-color="#8a7448"/></radialGradient>
<linearGradient id="vase" x1="0" x2="1"><stop offset="0" stop-color="#b2b5b9"/><stop offset="0.5" stop-color="#cfd1d5"/><stop offset="1" stop-color="#bcbfc3"/></linearGradient>
<radialGradient id="bvase" cx="0.45" cy="0.4" r="0.7"><stop offset="0" stop-color="#947651"/><stop offset="0.7" stop-color="#84683f"/><stop offset="1" stop-color="#5e4a2e"/></radialGradient>
<clipPath id="pc"><rect x="698" y="1147" width="1646.500" height="743.200"/></clipPath>
<clipPath id="door"><rect x="1346.500" y="1254.400" width="255.200" height="606"/></clipPath>
</defs><g clip-path="url(#pc)"><rect x="698" y="1147" width="360" height="744" fill="#e6e6e6"/><rect x="690" y="1140" width="370" height="758" filter="url(#spk)"/><path d="M1054.400 1147H1235V1891H1056z" fill="url(#gw)"/><rect x="1233.500" y="1147" width="480" height="744" filter="url(#fine)"/><rect x="1713.200" y="1147" width="341" height="744" fill="#000"/><rect x="2052.800" y="1147" width="292" height="744" fill="#e6e6e6"/><rect x="2052.800" y="1140" width="300" height="758" filter="url(#spk)"/><clipPath id="fl1"><path d="M1222.500 1891L1238 1859.500H1708V1891z"/></clipPath><g clip-path="url(#fl1)"><rect x="1190" y="1850" width="530" height="50" fill="url(#herr)" filter="url(#soft)"/></g><path d="M1236 1830.700L1238 1861.800L1222.500 1891H1200.500z" fill="#6c6c6c"/><path d="M1236 1830.700L1201 1891H1206L1238 1836z" fill="#8e8e8e"/><rect x="1237" y="1829.700" width="80" height="31.800" fill="#b3b3b3"/><rect x="1237" y="1829.700" width="80" height="5" fill="#c3c3c3"/><rect x="1237" y="1860" width="80" height="1.500" fill="#d8d0c8"/><rect x="1633" y="1827" width="75" height="32.600" fill="#bcbcbc"/><rect x="1633" y="1827" width="75" height="5" fill="#cbcbcb"/><rect x="1633" y="1858.300" width="75" height="1.500" fill="#d8d0c8"/><g clip-path="url(#door)"><rect x="1346" y="1254" width="256" height="500" fill="#eeeeee"/><clipPath id="fl2"><rect x="1346" y="1747.600" width="256" height="114"/></clipPath><g clip-path="url(#fl2)"><rect x="1336" y="1737" width="276" height="134" fill="url(#herr)" filter="url(#soft)"/></g><rect x="1346" y="1254" width="256" height="5" fill="#1a1a1a"/><rect x="1349" y="1259" width="250" height="11" fill="#f1efe9"/><rect x="1349" y="1271" width="250" height="5" fill="#080808"/><rect x="1349" y="1320.6" width="250" height="3.500" fill="#deded9"/><rect x="1349" y="1324.1" width="250" height="3.5" fill="#0c0c0c"/><rect x="1349" y="1376.3" width="250" height="3.500" fill="#deded9"/><rect x="1349" y="1379.8" width="250" height="2.2" fill="#0c0c0c"/><rect x="1349" y="1431.5" width="250" height="3.500" fill="#deded9"/><rect x="1349" y="1435.0" width="250" height="1.0" fill="#8a8a84"/><rect x="1349" y="1488.0" width="250" height="3.500" fill="#deded9"/><rect x="1349" y="1491.5" width="250" height="1.0" fill="#8a8a84"/><rect x="1349" y="1543.0" width="250" height="3.500" fill="#deded9"/><rect x="1349" y="1546.5" width="250" height="1.0" fill="#8a8a84"/><rect x="1349" y="1598.0" width="250" height="3.500" fill="#deded9"/><rect x="1349" y="1601.5" width="250" height="1.0" fill="#8a8a84"/><rect x="1349" y="1626.5" width="250" height="3.500" fill="#deded9"/><rect x="1349" y="1630.0" width="250" height="1.0" fill="#8a8a84"/><rect x="1349" y="1681.7" width="250" height="3.500" fill="#deded9"/><rect x="1349" y="1685.2" width="250" height="1.0" fill="#8a8a84"/><rect x="1372" y="1271" width="5" height="482" fill="#e4e4e0"/><rect x="1377" y="1276" width="1" height="477" fill="#c2c2c0"/><rect x="1349.5" y="1286.0" width="2.9" height="34.6" fill="#f8f8f8"/><rect x="1352.7" y="1281.0" width="2.9" height="39.6" fill="#f0e8e4"/><rect x="1355.9" y="1284.8" width="3.0" height="35.8" fill="#f4f2ee"/><rect x="1359.2" y="1293.0" width="2.9" height="27.6" fill="#e9e4e0"/><rect x="1362.4" y="1285.4" width="3.3" height="35.2" fill="#f8f8f8"/><rect x="1366.0" y="1285.1" width="3.3" height="35.5" fill="#f4f2ee"/><rect x="1369.6" y="1294.3" width="2.4" height="26.3" fill="#eceae4"/><rect x="1392.0" y="1274.6" width="5.5" height="46.0" fill="#5a1f22" transform="rotate(-22 1392.0 1320.6)"/><rect x="1403.0" y="1276.6" width="5.5" height="44.0" fill="#6a2226" transform="rotate(-24 1403.0 1320.6)"/><rect x="1419.0" y="1278.6" width="4.5" height="42.0" fill="#ececec" stroke="#8a8a8a" stroke-width="0.800" transform="rotate(-33 1419.0 1320.6)"/><rect x="1451.0" y="1281.4" width="4.2" height="39.2" fill="#a03030"/><rect x="1455.5" y="1285.9" width="5.0" height="34.7" fill="#c8b090"/><rect x="1460.8" y="1293.3" width="2.2" height="27.3" fill="#5a3a2a"/><rect x="1463.3" y="1277.7" width="5.5" height="42.9" fill="#6a6a6a"/><rect x="1469.1" y="1281.8" width="3.0" height="38.8" fill="#2a2a2a"/><rect x="1472.4" y="1281.6" width="2.4" height="39.0" fill="#262626"/><rect x="1475.1" y="1293.7" width="3.2" height="26.9" fill="#d8d4cc"/><rect x="1478.6" y="1291.2" width="2.2" height="29.4" fill="#c8b090"/><rect x="1481.1" y="1282.6" width="3.4" height="38.0" fill="#a03030"/><rect x="1484.8" y="1281.4" width="1.2" height="39.2" fill="#3a3a3a"/><rect x="1486" y="1275" width="2.500" height="45" fill="#d8d8d6"/><rect x="1489.0" y="1294.5" width="3.2" height="26.1" fill="#333"/><rect x="1492.5" y="1282.6" width="2.6" height="38.0" fill="#b07050"/><rect x="1495.5" y="1291.7" width="4.8" height="28.9" fill="#b07050"/><rect x="1500.6" y="1277.9" width="3.9" height="42.7" fill="#262626"/><rect x="1504.8" y="1292.8" width="4.3" height="27.8" fill="#5a3a2a"/><rect x="1509.4" y="1279.9" width="2.2" height="40.7" fill="#a03030"/><rect x="1511.9" y="1294.5" width="5.5" height="26.1" fill="#333"/><rect x="1517.7" y="1292.3" width="2.3" height="28.3" fill="#2a2a2a"/><rect x="1520.3" y="1289.1" width="4.7" height="31.5" fill="#1e1e1e"/><rect x="1525.4" y="1291.2" width="2.4" height="29.4" fill="#2a2a2a"/><rect x="1528.1" y="1288.4" width="1.9" height="32.2" fill="#d8d0c4"/><rect x="1530.0" y="1295.7" width="3.7" height="24.9" fill="#e9e4e0"/><rect x="1534.0" y="1284.0" width="2.3" height="36.6" fill="#eceae4"/><rect x="1536.6" y="1295.4" width="3.5" height="25.2" fill="#dcdcdc"/><rect x="1540.3" y="1283.4" width="2.4" height="37.2" fill="#dcdcdc"/><rect x="1543.0" y="1297.1" width="2.2" height="23.5" fill="#dcdcdc"/><rect x="1545.5" y="1294.2" width="3.9" height="26.4" fill="#e4e0da"/><rect x="1549.7" y="1284.0" width="2.8" height="36.6" fill="#dcdcdc"/><rect x="1552.8" y="1286.9" width="2.4" height="33.7" fill="#eceae4"/><rect x="1555.5" y="1287.9" width="3.0" height="32.7" fill="#f4f2ee"/><rect x="1558.8" y="1283.9" width="1.2" height="36.7" fill="#f4f2ee"/><rect x="1560.0" y="1287.0" width="2.4" height="33.6" fill="#4a86c0"/><rect x="1562.7" y="1287.7" width="2.8" height="32.9" fill="#c9a86a"/><rect x="1565.8" y="1291.8" width="2.5" height="28.8" fill="#2a6a7a"/><rect x="1568.6" y="1282.0" width="4.4" height="38.6" fill="#c9a86a"/><rect x="1573.3" y="1277.9" width="4.1" height="42.7" fill="#2a6a7a"/><rect x="1577.7" y="1277.3" width="4.5" height="43.3" fill="#3a6ea5"/><rect x="1582.5" y="1281.3" width="3.8" height="39.3" fill="#3a6ea5"/><rect x="1586.6" y="1284.6" width="2.4" height="36.0" fill="#c9a86a"/><rect x="1589.4" y="1278.1" width="4.8" height="42.5" fill="#d8d8d8"/><rect x="1594.5" y="1278.9" width="4.0" height="41.7" fill="#4a86c0"/><path d="M1350 1352l6 22" stroke="#c8c8c8" stroke-width="1.200"/><rect x="1378.5" y="1341.5" width="5.0" height="34.8" fill="#b07050"/><rect x="1383.8" y="1350.9" width="3.5" height="25.4" fill="#1e1e1e"/><rect x="1387.6" y="1334.4" width="4.3" height="41.9" fill="#d8d4cc"/><rect x="1392.2" y="1338.8" width="3.5" height="37.5" fill="#b07050"/><rect x="1396.0" y="1342.0" width="3.7" height="34.3" fill="#8a5a3a"/><rect x="1400.0" y="1341.0" width="2.3" height="35.3" fill="#c8b090"/><rect x="1402.6" y="1349.2" width="5.4" height="27.1" fill="#d8d0c4"/><rect x="1408.3" y="1350.9" width="3.0" height="25.4" fill="#5a3a2a"/><rect x="1411.6" y="1338.4" width="3.9" height="37.9" fill="#b07050"/><rect x="1415.8" y="1347.0" width="3.8" height="29.3" fill="#bdb6aa"/><rect x="1420.0" y="1343.9" width="2.9" height="32.4" fill="#5a3a2a"/><rect x="1423.1" y="1344.6" width="5.1" height="31.7" fill="#d8d4cc"/><rect x="1428.5" y="1348.8" width="2.9" height="27.5" fill="#3a3a3a"/><rect x="1431.7" y="1335.1" width="4.5" height="41.2" fill="#8c2a2a"/><rect x="1436.6" y="1343.2" width="2.6" height="33.1" fill="#262626"/><rect x="1440.0" y="1340.7" width="3.5" height="35.6" fill="#e0dcd2"/><rect x="1443.8" y="1348.6" width="3.7" height="27.7" fill="#e0dcd2"/><rect x="1447.8" y="1337.4" width="2.3" height="38.9" fill="#e8e4da"/><rect x="1450.4" y="1340.0" width="4.3" height="36.3" fill="#5b9bd0"/><rect x="1455.0" y="1349.5" width="3.7" height="26.8" fill="#b08a4a"/><rect x="1459.0" y="1335.9" width="4.8" height="40.4" fill="#3a6ea5"/><rect x="1464.1" y="1338.8" width="3.7" height="37.5" fill="#2a6a7a"/><rect x="1468.1" y="1337.9" width="5.4" height="38.4" fill="#d8d8d8"/><rect x="1473.7" y="1337.3" width="3.0" height="39.0" fill="#2d6f6f"/><rect x="1477.1" y="1346.7" width="4.6" height="29.6" fill="#2a6a7a"/><rect x="1481.9" y="1333.2" width="4.0" height="43.1" fill="#c9a86a"/><rect x="1486.2" y="1336.0" width="3.5" height="40.3" fill="#3a6ea5"/><rect x="1490.0" y="1334.2" width="3.6" height="42.1" fill="#d8d8d8"/><rect x="1493.9" y="1338.9" width="3.7" height="37.4" fill="#5b9bd0"/><rect x="1497.9" y="1338.4" width="2.1" height="37.9" fill="#2a6a7a"/><rect x="1501" y="1330" width="2.500" height="46" fill="#d8d8d6"/><rect x="1505.0" y="1341.9" width="3.7" height="34.4" fill="#dcdcdc"/><rect x="1509.0" y="1337.9" width="2.9" height="38.4" fill="#333"/><rect x="1512.2" y="1339.6" width="4.0" height="36.7" fill="#dcdcdc"/><rect x="1516.5" y="1351.0" width="3.4" height="25.3" fill="#888"/><rect x="1520.2" y="1347.9" width="3.6" height="28.4" fill="#4a86c0"/><rect x="1524.0" y="1351.3" width="4.9" height="25.0" fill="#4a86c0"/><rect x="1529.2" y="1341.3" width="4.0" height="35.0" fill="#e8e4da"/><rect x="1533.5" y="1344.0" width="2.7" height="32.3" fill="#e8e4da"/><rect x="1536.5" y="1344.4" width="3.5" height="31.9" fill="#dcdcdc"/><rect x="1540.0" y="1342.2" width="4.7" height="34.1" fill="#2d6f6f"/><rect x="1545.0" y="1347.0" width="4.1" height="29.3" fill="#2d6f6f"/><rect x="1549.4" y="1338.1" width="3.0" height="38.2" fill="#e0dcd2"/><rect x="1552.7" y="1334.9" width="2.9" height="41.4" fill="#2d6f6f"/><rect x="1555.9" y="1341.1" width="3.1" height="35.2" fill="#3a6ea5"/><rect x="1559.3" y="1339.2" width="3.9" height="37.1" fill="#4a86c0"/><rect x="1563.4" y="1342.8" width="3.9" height="33.5" fill="#e0dcd2"/><rect x="1567.7" y="1348.3" width="2.6" height="28.0" fill="#2d6f6f"/><rect x="1570.6" y="1333.7" width="3.7" height="42.6" fill="#5b9bd0"/><rect x="1574.6" y="1341.6" width="3.1" height="34.7" fill="#5b9bd0"/><rect x="1578.0" y="1333.4" width="5.2" height="42.9" fill="#2d6f6f"/><rect x="1583.4" y="1346.5" width="3.2" height="29.8" fill="#e8e4da"/><rect x="1587.0" y="1336.2" width="2.6" height="40.1" fill="#b08a4a"/><rect x="1589.9" y="1349.7" width="2.7" height="26.6" fill="#2d6f6f"/><rect x="1592.9" y="1339.0" width="3.4" height="37.3" fill="#2d6f6f"/><rect x="1596.6" y="1334.9" width="1.9" height="41.4" fill="#2d6f6f"/><rect x="1349.5" y="1399.0" width="3.0" height="32.5" fill="#5b9bd0"/><rect x="1352.8" y="1394.3" width="4.1" height="37.2" fill="#2d6f6f"/><rect x="1357.2" y="1397.4" width="3.0" height="34.1" fill="#2d6f6f"/><rect x="1360.5" y="1398.8" width="3.0" height="32.7" fill="#c9a86a"/><rect x="1363.8" y="1395.6" width="3.1" height="35.9" fill="#c9a86a"/><rect x="1367.2" y="1402.5" width="3.3" height="29.0" fill="#b08a4a"/><rect x="1370.8" y="1404.4" width="1.2" height="27.1" fill="#b08a4a"/><rect x="1381.0" y="1393.5" width="3.5" height="38.0" fill="#f4f4f4" stroke="#8a8a8a" stroke-width="0.800" transform="rotate(24 1381.0 1431.5)"/><rect x="1394.0" y="1398.8" width="2.3" height="32.7" fill="#f8f8f8"/><rect x="1396.6" y="1396.1" width="4.1" height="35.4" fill="#eceae4"/><rect x="1401.0" y="1394.5" width="2.5" height="37.0" fill="#f4f2ee"/><rect x="1403.8" y="1394.0" width="2.5" height="37.5" fill="#e4e0da"/><rect x="1406.6" y="1395.5" width="2.3" height="36.0" fill="#dcdcdc"/><rect x="1409.2" y="1392.8" width="4.5" height="38.7" fill="#f8f8f8"/><rect x="1414.0" y="1399.2" width="2.3" height="32.3" fill="#dcdcdc"/><rect x="1416.6" y="1395.6" width="4.3" height="35.9" fill="#f4f2ee"/><rect x="1421.1" y="1392.8" width="2.5" height="38.7" fill="#e9e4e0"/><rect x="1423.9" y="1399.0" width="2.2" height="32.5" fill="#f8f8f8"/><rect x="1426.5" y="1398.7" width="2.2" height="32.8" fill="#f8f8f8"/><rect x="1429.0" y="1396.1" width="3.3" height="35.4" fill="#f4f2ee"/><rect x="1432.6" y="1399.2" width="3.6" height="32.3" fill="#f8f8f8"/><rect x="1436.4" y="1393.6" width="3.1" height="37.9" fill="#eceae4"/><rect x="1439.9" y="1398.7" width="3.5" height="32.8" fill="#e4e0da"/><rect x="1443.7" y="1393.1" width="4.2" height="38.4" fill="#f0e8e4"/><rect x="1448.2" y="1392.0" width="4.3" height="39.5" fill="#eceae4"/><rect x="1452.8" y="1391.6" width="3.3" height="39.9" fill="#e4e0da"/><rect x="1456.4" y="1398.6" width="2.7" height="32.9" fill="#eceae4"/><rect x="1459.4" y="1396.3" width="4.0" height="35.2" fill="#dcdcdc"/><rect x="1463.7" y="1393.4" width="3.7" height="38.1" fill="#f8f8f8"/><rect x="1467.7" y="1398.0" width="2.5" height="33.5" fill="#e4e0da"/><rect x="1470.5" y="1399.4" width="3.2" height="32.1" fill="#e9e4e0"/><rect x="1474.0" y="1399.1" width="4.3" height="32.4" fill="#e9e4e0"/><rect x="1478.6" y="1397.8" width="2.7" height="33.7" fill="#eceae4"/><rect x="1481.6" y="1396.4" width="3.3" height="35.1" fill="#e9e4e0"/><rect x="1430" y="1390" width="4" height="41" fill="#f2f2f2"/><path d="M1432 1392v38" stroke="#d02a8a" stroke-width="2.200" stroke-dasharray="3.500 1.500"/><rect x="1489.0" y="1403.0" width="2.9" height="28.5" fill="#3a2a22"/><rect x="1492.2" y="1403.2" width="2.6" height="28.3" fill="#4a3a30"/><rect x="1495.1" y="1404.2" width="3.5" height="27.3" fill="#c8a878"/><rect x="1498.9" y="1400.5" width="2.2" height="31.0" fill="#8a5a3a"/><rect x="1501.4" y="1396.2" width="4.0" height="35.3" fill="#5a3a2a"/><rect x="1505.8" y="1390.9" width="4.3" height="40.6" fill="#3a2a22"/><rect x="1510.4" y="1388.6" width="3.5" height="42.9" fill="#2a2a2a"/><rect x="1514.1" y="1395.6" width="5.0" height="35.9" fill="#c8a878"/><rect x="1519.5" y="1397.7" width="5.3" height="33.8" fill="#1e1e1e"/><rect x="1525.1" y="1400.1" width="2.9" height="31.4" fill="#24303c"/><rect x="1528.0" y="1395.2" width="5.3" height="36.3" fill="#c9a86a"/><rect x="1533.6" y="1402.2" width="2.2" height="29.3" fill="#e8e4da"/><rect x="1536.1" y="1394.8" width="3.5" height="36.7" fill="#cfc8b8"/><rect x="1540.0" y="1405.5" width="4.7" height="26.0" fill="#cfc8b8"/><rect x="1544.9" y="1391.1" width="2.4" height="40.4" fill="#333"/><rect x="1547.7" y="1393.6" width="3.0" height="37.9" fill="#d8d8d8"/><rect x="1551.0" y="1394.2" width="5.3" height="37.3" fill="#b8b0a0"/><rect x="1556.6" y="1404.4" width="4.2" height="27.1" fill="#333"/><rect x="1561.1" y="1391.8" width="2.6" height="39.7" fill="#e8e4da"/><rect x="1564.0" y="1398.9" width="2.6" height="32.6" fill="#333"/><rect x="1566.9" y="1395.6" width="4.2" height="35.9" fill="#cfc8b8"/><rect x="1571.4" y="1397.4" width="4.8" height="34.1" fill="#7a9ab8"/><rect x="1576.4" y="1402.3" width="4.6" height="29.2" fill="#7a9ab8"/><rect x="1581.4" y="1395.8" width="4.8" height="35.7" fill="#7a9ab8"/><rect x="1586.4" y="1394.1" width="4.2" height="37.4" fill="#b8b0a0"/><rect x="1591.0" y="1393.6" width="4.3" height="37.9" fill="#b8b0a0"/><rect x="1595.6" y="1395.3" width="2.9" height="36.2" fill="#c9a86a"/><rect x="1349.5" y="1465.1" width="4.3" height="22.9" fill="#8c2a2a"/><rect x="1354.1" y="1463.6" width="4.3" height="24.4" fill="#8c2a2a"/><rect x="1358.6" y="1451.3" width="4.7" height="36.7" fill="#2a2a2a"/><rect x="1363.6" y="1459.5" width="4.3" height="28.5" fill="#2a2a2a"/><rect x="1368.2" y="1457.7" width="3.3" height="30.3" fill="#8c2a2a"/><rect x="1378.5" y="1453.7" width="4.8" height="34.3" fill="#ddd"/><rect x="1383.6" y="1457.8" width="4.7" height="30.2" fill="#8c2a2a"/><rect x="1388.7" y="1458.9" width="3.5" height="29.1" fill="#ddd"/><rect x="1392.5" y="1455.9" width="5.5" height="32.1" fill="#7a2222"/><rect x="1398.2" y="1458.4" width="4.9" height="29.6" fill="#333"/><rect x="1403.5" y="1446.2" width="2.5" height="41.8" fill="#3a6ea5"/><rect x="1406.3" y="1451.6" width="3.6" height="36.4" fill="#5b9bd0"/><rect x="1410.2" y="1448.0" width="3.2" height="40.0" fill="#2a2a2a"/><rect x="1413.7" y="1451.0" width="5.2" height="37.0" fill="#5b9bd0"/><rect x="1419.2" y="1449.4" width="4.6" height="38.6" fill="#2a2a2a"/><rect x="1424.1" y="1450.0" width="2.9" height="38.0" fill="#3a6ea5"/><rect x="1427.3" y="1453.8" width="3.3" height="34.2" fill="#7a2222"/><rect x="1430.9" y="1453.9" width="5.1" height="34.1" fill="#8c2a2a"/><rect x="1438" y="1443" width="13.500" height="45" fill="#3f78c0"/><rect x="1453.0" y="1459.1" width="3.7" height="28.9" fill="#6a6a6a"/><rect x="1457.0" y="1458.6" width="5.2" height="29.4" fill="#8c2a2a"/><rect x="1462.5" y="1451.4" width="2.3" height="36.6" fill="#b07050"/><rect x="1465.0" y="1453.3" width="2.8" height="34.7" fill="#bdb6aa"/><rect x="1468.2" y="1452.9" width="2.7" height="35.1" fill="#3a3a3a"/><rect x="1471.2" y="1448.0" width="4.7" height="40.0" fill="#2a2a2a"/><rect x="1476.2" y="1461.8" width="2.9" height="26.2" fill="#444"/><rect x="1479.4" y="1451.9" width="5.4" height="36.1" fill="#3a3a3a"/><rect x="1485.1" y="1457.7" width="4.1" height="30.3" fill="#8c2a2a"/><rect x="1489.5" y="1450.4" width="2.5" height="37.6" fill="#3a3a3a"/><rect x="1492.3" y="1451.8" width="2.3" height="36.2" fill="#262626"/><rect x="1494.9" y="1458.7" width="4.3" height="29.3" fill="#b07050"/><rect x="1499.5" y="1457.1" width="3.5" height="30.9" fill="#8c2a2a"/><rect x="1505.0" y="1444.6" width="3.3" height="43.4" fill="#c9a86a"/><rect x="1508.6" y="1447.4" width="3.8" height="40.6" fill="#7ab0d8"/><rect x="1512.7" y="1454.4" width="5.2" height="33.6" fill="#b08a4a"/><rect x="1518.2" y="1461.5" width="3.4" height="26.5" fill="#eceae4"/><rect x="1521.9" y="1444.7" width="5.1" height="43.3" fill="#4a86c0"/><rect x="1527.3" y="1461.4" width="3.4" height="26.6" fill="#f0e8e4"/><rect x="1531.0" y="1457.3" width="5.2" height="30.7" fill="#b08a4a"/><rect x="1536.5" y="1458.6" width="3.4" height="29.4" fill="#f0e8e4"/><rect x="1540.3" y="1456.8" width="3.9" height="31.2" fill="#c9a86a"/><rect x="1544.5" y="1459.6" width="3.2" height="28.4" fill="#e4e0da"/><rect x="1548.0" y="1448.3" width="5.2" height="39.7" fill="#c9a86a"/><rect x="1553.6" y="1461.0" width="5.2" height="27.0" fill="#e4e0da"/><rect x="1559.1" y="1451.2" width="3.4" height="36.8" fill="#c9a86a"/><rect x="1562.7" y="1457.7" width="4.2" height="30.3" fill="#dcdcdc"/><rect x="1567.2" y="1445.6" width="3.5" height="42.4" fill="#b08a4a"/><rect x="1571.0" y="1447.2" width="4.0" height="40.8" fill="#dcdcdc"/><rect x="1575.3" y="1454.5" width="3.8" height="33.5" fill="#b08a4a"/><rect x="1579.4" y="1444.8" width="4.0" height="43.2" fill="#f8f8f8"/><rect x="1583.8" y="1457.8" width="2.7" height="30.2" fill="#f0e8e4"/><rect x="1349.5" y="1506.3" width="5.4" height="36.7" fill="#2a2a2a"/><rect x="1355.2" y="1515.2" width="4.4" height="27.8" fill="#444"/><rect x="1359.9" y="1511.8" width="5.2" height="31.2" fill="#444"/><rect x="1365.4" y="1516.5" width="4.2" height="26.5" fill="#ccc"/><rect x="1369.9" y="1504.5" width="2.1" height="38.5" fill="#1e1e1e"/><rect x="1381.0" y="1501.1" width="4.3" height="41.9" fill="#2d6f6f"/><rect x="1385.6" y="1508.2" width="2.4" height="34.8" fill="#b08a4a"/><rect x="1388.3" y="1503.6" width="4.9" height="39.4" fill="#3a6ea5"/><rect x="1393.5" y="1507.5" width="3.4" height="35.5" fill="#d8d8d8"/><rect x="1397.1" y="1516.4" width="4.5" height="26.6" fill="#2d6f6f"/><rect x="1401.9" y="1512.7" width="5.0" height="30.3" fill="#5b9bd0"/><rect x="1407.3" y="1506.3" width="2.8" height="36.7" fill="#d8d8d8"/><rect x="1410.4" y="1508.7" width="2.9" height="34.3" fill="#c9a86a"/><rect x="1413.6" y="1501.6" width="5.3" height="41.4" fill="#5b9bd0"/><rect x="1419.2" y="1512.7" width="2.5" height="30.3" fill="#3a6ea5"/><rect x="1422.0" y="1506.3" width="3.4" height="36.7" fill="#5b9bd0"/><rect x="1425.7" y="1505.3" width="4.4" height="37.7" fill="#3a6ea5"/><rect x="1430.4" y="1517.6" width="4.4" height="25.4" fill="#d8d8d8"/><rect x="1452.0" y="1503.0" width="3.0" height="40.0" fill="#f2f2f2" stroke="#8a8a8a" stroke-width="0.800" transform="rotate(20 1452.0 1543.0)"/><rect x="1466.0" y="1508.3" width="2.5" height="34.7" fill="#f4f2ee"/><rect x="1468.8" y="1503.6" width="3.7" height="39.4" fill="#dcdcdc"/><rect x="1475.4" y="1501.8" width="3.5" height="41.2" fill="#dcdcdc"/><rect x="1479.2" y="1513.5" width="3.3" height="29.5" fill="#e9e4e0"/><rect x="1482.8" y="1512.6" width="2.2" height="30.4" fill="#f8f8f8"/><rect x="1485.3" y="1512.2" width="3.4" height="30.8" fill="#f4f2ee"/><rect x="1489.1" y="1507.4" width="2.2" height="35.6" fill="#e9e4e0"/><rect x="1491.6" y="1514.8" width="3.4" height="28.2" fill="#f0e8e4"/><rect x="1495.3" y="1506.0" width="2.9" height="37.0" fill="#f4f2ee"/><rect x="1498.5" y="1515.7" width="2.3" height="27.3" fill="#f4f2ee"/><rect x="1506.0" y="1513.0" width="2.7" height="30.0" fill="#b07050"/><rect x="1509.0" y="1500.4" width="3.8" height="42.6" fill="#b07050"/><rect x="1513.1" y="1511.0" width="4.2" height="32.0" fill="#c8b090"/><rect x="1517.6" y="1505.9" width="4.4" height="37.1" fill="#d8d4cc"/><rect x="1522.3" y="1511.2" width="2.8" height="31.8" fill="#b07050"/><rect x="1525.4" y="1510.7" width="2.9" height="32.3" fill="#333"/><rect x="1528.6" y="1513.8" width="4.2" height="29.2" fill="#a03030"/><rect x="1533.1" y="1510.4" width="4.0" height="32.6" fill="#444"/><rect x="1537.4" y="1513.1" width="4.1" height="29.9" fill="#5a3a2a"/><rect x="1541.8" y="1516.1" width="4.1" height="26.9" fill="#1e1e1e"/><rect x="1546.1" y="1508.2" width="2.6" height="34.8" fill="#d8d4cc"/><rect x="1549.1" y="1500.2" width="3.3" height="42.8" fill="#b07050"/><rect x="1552.7" y="1508.6" width="5.1" height="34.4" fill="#c8b090"/><rect x="1558.1" y="1507.0" width="1.9" height="36.0" fill="#bdb6aa"/><rect x="1560.0" y="1505.3" width="2.8" height="37.7" fill="#e9e4e0"/><rect x="1563.1" y="1515.7" width="4.2" height="27.3" fill="#dcdcdc"/><rect x="1567.5" y="1511.7" width="4.5" height="31.3" fill="#e9e4e0"/><rect x="1572.3" y="1514.7" width="4.9" height="28.3" fill="#eceae4"/><rect x="1577.5" y="1511.0" width="3.7" height="32.0" fill="#e4e0da"/><rect x="1581.5" y="1506.5" width="3.2" height="36.5" fill="#f0e8e4"/><rect x="1585.1" y="1507.0" width="4.2" height="36.0" fill="#e4e0da"/><rect x="1589.6" y="1509.9" width="2.9" height="33.1" fill="#f0e8e4"/><rect x="1592.7" y="1511.0" width="2.6" height="32.0" fill="#e4e0da"/><rect x="1595.6" y="1508.3" width="2.9" height="34.7" fill="#f4f2ee"/><rect x="1349.5" y="1563.2" width="3.4" height="34.8" fill="#f8f8f8"/><rect x="1353.2" y="1568.1" width="3.2" height="29.9" fill="#dcdcdc"/><rect x="1356.7" y="1566.6" width="3.8" height="31.4" fill="#e4e0da"/><rect x="1360.9" y="1560.1" width="3.0" height="37.9" fill="#f0e8e4"/><rect x="1364.1" y="1562.7" width="3.4" height="35.3" fill="#f4f2ee"/><rect x="1367.8" y="1567.2" width="3.8" height="30.8" fill="#f8f8f8"/><rect x="1393.0" y="1551.0" width="5.5" height="47.0" fill="#5a1f22" transform="rotate(-22 1393.0 1598.0)"/><rect x="1405.0" y="1553.0" width="5.5" height="45.0" fill="#6a2226" transform="rotate(-24 1405.0 1598.0)"/><rect x="1424.0" y="1556.0" width="4.5" height="42.0" fill="#ececec" stroke="#8a8a8a" stroke-width="0.800" transform="rotate(-34 1424.0 1598.0)"/><rect x="1443.0" y="1570.0" width="3.6" height="28.0" fill="#a03030"/><rect x="1446.9" y="1553.8" width="4.6" height="44.2" fill="#d8d4cc"/><rect x="1451.8" y="1564.8" width="4.7" height="33.2" fill="#1e1e1e"/><rect x="1456.8" y="1554.9" width="3.0" height="43.1" fill="#b07050"/><rect x="1460.1" y="1561.6" width="5.4" height="36.4" fill="#c8b090"/><rect x="1465.8" y="1558.3" width="4.0" height="39.7" fill="#1e1e1e"/><rect x="1470.1" y="1557.0" width="5.5" height="41.0" fill="#6a6a6a"/><rect x="1475.9" y="1562.6" width="5.1" height="35.4" fill="#c8b090"/><rect x="1481.2" y="1562.6" width="4.3" height="35.4" fill="#1e1e1e"/><rect x="1485.9" y="1555.8" width="2.5" height="42.2" fill="#c8b090"/><rect x="1488.7" y="1565.9" width="2.2" height="32.1" fill="#d8d4cc"/><rect x="1491.2" y="1562.3" width="2.8" height="35.7" fill="#b07050"/><rect x="1494.3" y="1557.7" width="2.7" height="40.3" fill="#a03030"/><rect x="1497.2" y="1553.9" width="2.3" height="44.1" fill="#b07050"/><rect x="1500.0" y="1557.9" width="2.7" height="40.1" fill="#2a2a2a"/><rect x="1503.0" y="1556.5" width="2.9" height="41.5" fill="#bdb6aa"/><rect x="1506.1" y="1556.9" width="2.8" height="41.1" fill="#ddd"/><rect x="1509.3" y="1560.4" width="2.3" height="37.6" fill="#444"/><rect x="1511.8" y="1560.5" width="2.9" height="37.5" fill="#bdb6aa"/><rect x="1515.0" y="1566.2" width="4.3" height="31.8" fill="#888"/><rect x="1519.7" y="1559.0" width="5.1" height="39.0" fill="#ddd"/><rect x="1525.0" y="1568.6" width="3.6" height="29.4" fill="#bdb6aa"/><rect x="1528.9" y="1568.1" width="3.1" height="29.9" fill="#2a2a2a"/><rect x="1532.0" y="1567.8" width="3.9" height="30.2" fill="#e8e4da"/><rect x="1536.2" y="1570.9" width="3.9" height="27.1" fill="#dcdcdc"/><rect x="1540.4" y="1569.8" width="5.2" height="28.2" fill="#e4e0da"/><rect x="1545.8" y="1571.3" width="4.3" height="26.7" fill="#4a86c0"/><rect x="1550.5" y="1571.6" width="5.2" height="26.4" fill="#f4f2ee"/><rect x="1556.0" y="1568.0" width="4.2" height="30.0" fill="#2d6f6f"/><rect x="1560.5" y="1568.0" width="2.5" height="30.0" fill="#f8f8f8"/><rect x="1563.2" y="1560.5" width="2.8" height="37.5" fill="#e4e0da"/><rect x="1566.3" y="1572.2" width="5.5" height="25.8" fill="#2d6f6f"/><rect x="1572.1" y="1557.2" width="3.5" height="40.8" fill="#e4e0da"/><rect x="1575.9" y="1559.8" width="2.4" height="38.2" fill="#e9e4e0"/><rect x="1578.6" y="1559.6" width="4.4" height="38.4" fill="#c9a86a"/><rect x="1583.2" y="1562.1" width="4.9" height="35.9" fill="#c9a86a"/><rect x="1588.5" y="1559.7" width="2.0" height="38.3" fill="#2d6f6f"/><rect x="1424" y="1604" width="39.600" height="22.500" fill="#a87848"/><rect x="1424" y="1604" width="39.600" height="3" fill="#94683c"/><rect x="1349.5" y="1647.0" width="3.6" height="34.7" fill="#1e1e1e"/><rect x="1353.4" y="1645.0" width="4.8" height="36.7" fill="#ddd"/><rect x="1358.5" y="1644.1" width="4.0" height="37.6" fill="#1e1e1e"/><rect x="1362.8" y="1648.2" width="2.3" height="33.5" fill="#c8c0a0"/><rect x="1365.4" y="1643.6" width="3.7" height="38.1" fill="#c8c0a0"/><rect x="1369.4" y="1649.8" width="2.3" height="31.9" fill="#ddd"/><rect x="1380.0" y="1640.5" width="3.9" height="41.2" fill="#f4f2ee"/><rect x="1384.2" y="1646.2" width="4.3" height="35.5" fill="#f0e8e4"/><rect x="1388.9" y="1645.2" width="3.9" height="36.5" fill="#f8f8f8"/><rect x="1393.1" y="1651.3" width="2.6" height="30.4" fill="#dcdcdc"/><rect x="1396.0" y="1642.3" width="4.1" height="39.4" fill="#e9e4e0"/><rect x="1400.4" y="1654.1" width="4.1" height="27.6" fill="#eceae4"/><rect x="1404.8" y="1644.5" width="3.5" height="37.2" fill="#f8f8f8"/><rect x="1408.6" y="1649.4" width="2.6" height="32.3" fill="#eceae4"/><rect x="1411.5" y="1638.5" width="3.9" height="43.2" fill="#f0e8e4"/><rect x="1415.7" y="1638.0" width="4.0" height="43.7" fill="#f8f8f8"/><path d="M1419 1652l7 29" stroke="#d4d4d4" stroke-width="1.500"/><path d="M1430 1665h14v12c0 3-14 3-14 0z" fill="#e9e9e9" stroke="#9a9a9a" stroke-width="0.800"/><ellipse cx="1437" cy="1680" rx="11" ry="2" fill="#e4e4e4" stroke="#aaa" stroke-width="0.600"/><rect x="1449.0" y="1636.0" width="3.9" height="45.7" fill="#333"/><rect x="1453.2" y="1651.5" width="5.1" height="30.2" fill="#1c4a5a"/><rect x="1458.7" y="1636.9" width="3.8" height="44.8" fill="#24303c"/><rect x="1462.7" y="1651.9" width="3.2" height="29.8" fill="#333"/><rect x="1466.2" y="1636.9" width="3.7" height="44.8" fill="#e0dcd2"/><rect x="1470.2" y="1637.1" width="5.3" height="44.6" fill="#c8a060"/><rect x="1475.8" y="1642.1" width="3.5" height="39.6" fill="#e0dcd2"/><rect x="1479.7" y="1637.3" width="4.1" height="44.4" fill="#c8a060"/><rect x="1484.0" y="1646.9" width="3.7" height="34.8" fill="#333"/><rect x="1488.1" y="1653.2" width="3.4" height="28.5" fill="#24303c"/><rect x="1491.8" y="1644.0" width="2.8" height="37.7" fill="#24303c"/><rect x="1494.9" y="1643.2" width="3.5" height="38.5" fill="#3a6ea5"/><rect x="1498.7" y="1635.8" width="3.7" height="45.9" fill="#3a6ea5"/><rect x="1502.7" y="1647.1" width="2.9" height="34.6" fill="#1c4a5a"/><rect x="1508.0" y="1649.0" width="3.4" height="32.7" fill="#a09868"/><rect x="1511.7" y="1644.7" width="4.6" height="37.0" fill="#a09868"/><rect x="1516.6" y="1647.5" width="3.1" height="34.2" fill="#6a6a48"/><rect x="1520.0" y="1649.7" width="2.7" height="32.0" fill="#8a8458"/><rect x="1523.0" y="1648.2" width="2.3" height="33.5" fill="#8a8458"/><rect x="1525.6" y="1647.1" width="5.0" height="34.6" fill="#c4b88c"/><rect x="1530.9" y="1648.5" width="4.4" height="33.2" fill="#b8a878"/><rect x="1535.6" y="1651.3" width="2.3" height="30.4" fill="#8a8458"/><rect x="1538.2" y="1646.5" width="2.9" height="35.2" fill="#a09868"/><rect x="1541.4" y="1644.0" width="3.9" height="37.7" fill="#b8a878"/><rect x="1546.0" y="1652.7" width="4.4" height="29.0" fill="#dcdcdc"/><rect x="1550.7" y="1647.4" width="4.0" height="34.3" fill="#c9a86a"/><rect x="1555.0" y="1651.3" width="5.1" height="30.4" fill="#e9e4e0"/><rect x="1560.3" y="1652.8" width="4.2" height="28.9" fill="#b08a4a"/><rect x="1564.8" y="1655.1" width="3.8" height="26.6" fill="#dcdcdc"/><rect x="1568.9" y="1654.1" width="4.4" height="27.6" fill="#c9a86a"/><rect x="1573.6" y="1643.6" width="4.5" height="38.1" fill="#e9e4e0"/><rect x="1578.4" y="1644.2" width="3.0" height="37.5" fill="#f0e8e4"/><rect x="1581.7" y="1646.6" width="2.6" height="35.1" fill="#e9e4e0"/><rect x="1584.6" y="1642.9" width="3.1" height="38.8" fill="#f0e8e4"/><rect x="1588.0" y="1641.8" width="2.9" height="39.9" fill="#f8f8f8"/><rect x="1591.2" y="1642.2" width="3.9" height="39.5" fill="#e4e0da"/><rect x="1595.4" y="1650.8" width="3.1" height="30.9" fill="#dcdcdc"/><path d="M1529 1684v-22c0-18 27-18 29 0l2 24" fill="none" stroke="#a87444" stroke-width="4"/><path d="M1554 1652c3 4 4 8 4 12l2 22" fill="none" stroke="#6e4024" stroke-width="4"/><rect x="1349" y="1686" width="250" height="62" fill="#ececec"/><rect x="1352" y="1692" width="18" height="38" fill="#d9d2c4"/><rect x="1364" y="1700" width="3" height="3" fill="#8a8070"/><rect x="1364" y="1712" width="3" height="3" fill="#8a8070"/><path d="M1385.500 1688h198l-4 41h-190z" fill="url(#weave)"/><path d="M1386 1688h199" stroke="#2a2622" stroke-width="2.200"/><rect x="1349" y="1729" width="250" height="19" fill="#e9e9e9"/><path d="M1349 1757h130l13 73h-143z" fill="url(#rug)"/><path d="M1572 1765h28v34h-12z" fill="#d4d4d4"/><rect x="1594" y="1690" width="5" height="80" fill="#1a1a1a"/><path d="M1349 1736l40-14 10 3v10l-50 14z" fill="#e4ddd0"/><path d="M1349 1746l76-12 10 4v6l-86 14z" fill="#3a3a3a"/><path d="M1352 1742l50-8 26 4-70 10z" fill="#b8b8b8"/><path d="M1349 1756l84-12v6l-84 14z" fill="#6a4020"/><path d="M1432 1744h5v48h-5z" fill="#a06a34"/><path d="M1415.500 1688h25.100l5 64h-36.600z" fill="#b8834c"/><path d="M1434 1688h6.600l5 64h-8z" fill="#a06e3c"/><ellipse cx="1426" cy="1683.500" rx="33.500" ry="5.500" fill="#a8723c"/><ellipse cx="1426" cy="1682.300" rx="33.500" ry="4.500" fill="#bf8a50"/><path d="M1466.500 1692v59c0 20 107 20 107 0v-59z" fill="url(#pouf)"/><ellipse cx="1520" cy="1691.500" rx="53.500" ry="8" fill="#cfcbc6"/><ellipse cx="1520" cy="1690.500" rx="40" ry="5" fill="#d4d0cb"/><path d="M1601 1584c-12-2-22 2-24 10l16 4c-14 2-22 10-24 18l22-4c-12 6-20 14-22 24l24-10c-12 10-16 20-16 30l18-16c-8 12-10 22-8 32l14-18z" fill="#2f6a2c"/><path d="M1601 1592c-10 0-18 4-22 8M1601 1612c-12 2-22 8-28 16M1601 1640c-10 4-18 12-22 22M1601 1664c-8 6-12 14-14 24" stroke="#4f9444" stroke-width="3" fill="none"/><path d="M1601 1600c-8 2-14 6-18 10M1601 1650c-8 4-12 10-16 18" stroke="#1c4a20" stroke-width="2.500" fill="none"/><circle cx="1593" cy="1567" r="6" fill="#0a0a0a"/><rect x="1592" y="1560" width="8" height="3" fill="#111"/></g><path d="M1314.200 1222.900H1633.200V1859.400H1599.500V1256.500H1348.700V1860.700H1314.200z" fill="#c5c7c9"/><rect x="1314.200" y="1222.900" width="34.500" height="637.800" fill="url(#jamb)"/><rect x="1599.500" y="1222.900" width="33.700" height="636.500" fill="url(#jambr)"/><path d="M1314.200 1222.900H1633.200L1601.700 1254.400H1346.500z" fill="url(#jambt)"/><path d="M1314.200 1222.900L1346.500 1254.400M1633.200 1222.900L1601.700 1254.400" stroke="#b4b6b8" stroke-width="1"/><rect x="1314.200" y="1222.900" width="319" height="1.500" fill="#d9dbdd"/><path d="M1431.300 1147H1537V1176c0 6-3 8.600-8 8.600H1441c-6 0-9.700-3-9.700-8.600z" fill="#040404"/><circle cx="1586" cy="1435" r="12" fill="#ffffff"/><path d="M1077.500 1222.700L1094.800 1236L1095.800 1585.500L1079.400 1594.400z" fill="#8b8b8b"/><path d="M1080 1300c6 20 10 60 8 100s4 100 2 180l-10 8z" fill="#7a7a7a"/><ellipse cx="1084" cy="1374" rx="5" ry="4" fill="#6a6a6a"/><path d="M1077.500 1222.700L1094.800 1236L1095.800 1585.500L1079.400 1594.400L1079.400 1590.500L1092.200 1583.500L1091.200 1238.500L1077.500 1227.500z" fill="#8e6236"/><path d="M1077.500 1222.700L1094.800 1236v3L1077.500 1226z" fill="#6e4a26"/><path d="M1104 1159L1160.400 1206.800L1161 1568L1104.700 1586z" fill="#8e6236"/><path d="M1104 1159L1110 1164.500L1110.500 1584L1104.700 1586z" fill="#9c6f3c"/><path d="M1104 1159L1160.400 1206.800v3.500L1104 1162.500z" fill="#6e4a26"/><path d="M1113.200 1171L1156.500 1208L1157 1564.500L1113.700 1578.500z" fill="#969696"/><path d="M1113.200 1171l13 11c6 50 18 100 14 160s10 120 4 180c-2 20-6 36-4 46l-26.500 9z" fill="#8a8a8a"/><path d="M1140 1200l16.500 14 0.500 350-14 4c-4-40 6-100 2-170s-2-120-5-198z" fill="#a7a7a7"/><path d="M1122 1179c8 40 22 90 18 140s-10 60-6 110 6 60 4 100c-1 16-2 30-1 40l-23 8v-50c8-60 4-90 6-150s10-80 6-120-4-50-4-78z" fill="#111" opacity="0.900"/><path d="M1126 1190c8 50 16 90 12 140s-8 70-4 120" stroke="#3a3a3a" stroke-width="8" fill="none" opacity="0.600"/><path d="M1172 1152.500L1212.700 1193L1212.700 1506L1172 1509.300z" fill="#8e6236"/><path d="M1172 1152.500L1178 1158.500L1178 1508.800L1172 1509.300z" fill="#9c6f3c"/><path d="M1172 1152.500L1212.700 1193v3.500L1172 1156z" fill="#6e4a26"/><path d="M1181 1164.500L1209.200 1194.500L1209.200 1502.500L1181 1505z" fill="#9c9c9c"/><path d="M1188 1180c8 60-4 120 4 180s6 100 6 140" stroke="#777" stroke-width="9" fill="none" opacity="0.700"/><path d="M1186 1172c6 40 4 70 8 110" stroke="#4c4c4c" stroke-width="5" fill="none" opacity="0.600"/><path d="M1203 1200c4 80-6 160 2 300" stroke="#b8b8b8" stroke-width="6" fill="none" opacity="0.700"/><rect x="1857.300" y="1158" width="3.500" height="421" fill="#7e4e2c"/><rect x="1932.200" y="1147" width="10" height="456.800" fill="#8c5730"/><rect x="1939.700" y="1147" width="2.500" height="456.800" fill="#6c3e20"/><path d="M1856.600 1575L1932.700 1593.500V1597.500L1856.600 1579z" fill="#6e4024"/><path d="M1932.200 1597h10v7h-10z" fill="#96602f"/><path d="M1800 1690c-4-40-12-80-10-120s4-70 10-100l6 2c-2 40 2 60 8 80l6-50 5 2c-2 40-4 80-8 110s-4 50-6 76z" fill="#161616"/><path d="M1790 1560c-6-10-8-30-6-44M1832 1530c4-14 6-30 4-44" stroke="#181818" stroke-width="6" fill="none"/><path d="M1822 1622l5-3 6 2 8 18-3 3-5-8 1 10-4 2-3-12-2 13-4-1 0-14-3 10-3-2z" fill="#a2a4a8"/><circle cx="1826" cy="1617" r="4" fill="none" stroke="#b4b6ba" stroke-width="1.300"/><path d="M1703 1704L1870 1838L1873 1891H1703z" fill="#050505"/><path d="M1869 1836H2016.500V1891H1872z" fill="#cfcfc8"/><path d="M1869 1835.800H2016.500V1851H1869.500z" fill="#d5d5ce"/><path d="M1870 1851.300H2016.500" stroke="#bdbdb6" stroke-width="1"/><path d="M1703.400 1697H1863L2016.500 1813.700V1836L1869 1836L1703.400 1703.600z" fill="#9e9e98"/><path d="M1766.600 1748.600H1900" stroke="#b4b4ae" stroke-width="1.500"/><path d="M1703.400 1697.500L1869 1830V1842L1703.400 1709.500z" fill="#070707"/><g stroke="#c4c4c4" stroke-width="1.300" fill="none"><path d="M1708 1713V1891M1735.400 1740V1891M1817.300 1814.700V1891"/><path d="M1768.500 1765V1891M1773.300 1769V1891" stroke-width="2"/><path d="M1708 1716L1766 1763M1774 1771L1869 1848" stroke="#8c8c8c"/><path d="M1708 1845.300L1738 1891M1737 1742L1767 1766" stroke="#9a9a9a"/></g><path d="M1712.7 1774.4h7.500l-1.500 6h-4.500z" fill="#c8b094"/><path d="M1741.8 1806.5h7.500l-1.500 6h-4.500z" fill="#c8b094"/><path d="M1784.9 1853.4h7.500l-1.500 6h-4.500z" fill="#c8b094"/><path d="M1803 1761c6-4 12-2 16 0c6-1 10 1 12 3c-8 2-20 2-28-3z" fill="#86867f"/><path d="M1789.600 1684h65l8 8h-70z" fill="#7a4a2a"/><path d="M1794 1687h58l5 5h-60z" fill="#5c5c5c"/><path d="M1774.300 1697h18v8.500h-18z" fill="#0c0c0c"/><path d="M1795 1690h30l38 12-0.500 40c-8 5-15-8-25-4s-18 10-30 2l2-32-22 26-9-3c8-16 11-29 17-41z" fill="#d3b389"/><path d="M1804 1693c10 10 8 30 6 45" stroke="#b8966a" stroke-width="2" fill="none"/><path d="M1795 1690l68 12" stroke="#e2c8a2" stroke-width="1.500"/><path d="M1886.800 1601.500h8.400c1 30 4 56 14 76s19 42 9 60c-6 11-40 11-48 0c-10-18 0-40 8-60s7.500-46 8.600-76z" fill="url(#vase)"/><ellipse cx="1891" cy="1601.500" rx="4.200" ry="1.200" fill="#8e9196"/><path d="M1887 1738c-4-30-12-60-22-96M1880 1700c-8-10-14-20-20-38M1884 1720c6-14 10-20 14-28M1886 1736c4-30 -6-60 -8-90" stroke="#cfcfcb" stroke-width="1" fill="none"/><path d="M1864 1642l2.500-3.500 1 3 3.500 0-2.500 2.500 1.500 3.500-3.500-2-3 2.500 0.500-4-3-2z" fill="#f0f0ee"/><path d="M1879 1646l2.500-3.500 1 3 3.500 0-2.500 2.500 1.500 3.500-3.500-2-3 2.500 0.500-4-3-2z" fill="#f0f0ee"/><path d="M1857 1660l2.500-3.500 1 3 3.500 0-2.500 2.500 1.500 3.500-3.500-2-3 2.500 0.500-4-3-2z" fill="#f0f0ee"/><path d="M1863 1674l2.500-3.500 1 3 3.500 0-2.500 2.500 1.500 3.500-3.500-2-3 2.500 0.500-4-3-2z" fill="#f0f0ee"/><path d="M1885 1662l2.500-3.500 1 3 3.500 0-2.500 2.500 1.500 3.500-3.500-2-3 2.500 0.500-4-3-2z" fill="#f0f0ee"/><path d="M1860 1686l2.500-3.500 1 3 3.500 0-2.500 2.500 1.500 3.500-3.500-2-3 2.500 0.500-4-3-2z" fill="#f0f0ee"/><path d="M1874 1686l2.500-3.500 1 3 3.500 0-2.500 2.500 1.500 3.500-3.500-2-3 2.500 0.500-4-3-2z" fill="#f0f0ee"/><path d="M1877 1702l2.500-3.500 1 3 3.500 0-2.500 2.500 1.500 3.500-3.500-2-3 2.500 0.500-4-3-2z" fill="#f0f0ee"/><path d="M1899 1692l2.500-3.500 1 3 3.500 0-2.500 2.500 1.500 3.500-3.500-2-3 2.500 0.500-4-3-2z" fill="#f0f0ee"/><path d="M1845 1708l2.500-3.500 1 3 3.500 0-2.500 2.500 1.500 3.500-3.500-2-3 2.500 0.500-4-3-2z" fill="#f0f0ee"/><path d="M1897 1711l2.500-3.500 1 3 3.500 0-2.500 2.500 1.500 3.500-3.500-2-3 2.500 0.500-4-3-2z" fill="#f0f0ee"/><path d="M1861 1716l2.500-3.500 1 3 3.500 0-2.500 2.500 1.500 3.500-3.500-2-3 2.500 0.500-4-3-2z" fill="#f0f0ee"/><path d="M1842 1690l2.500-3.500 1 3 3.500 0-2.500 2.500 1.500 3.500-3.500-2-3 2.500 0.500-4-3-2z" fill="#f0f0ee"/><path d="M1852 1698l2.500-3.500 1 3 3.500 0-2.500 2.500 1.500 3.500-3.500-2-3 2.500 0.500-4-3-2z" fill="#f0f0ee"/><path d="M1885 1733c1 6-2 8-12 11c-24 8-22 30 0 35c10 3 24 3 34 0c22-5 24-27 0-35c-10-3-13-5-12-11z" fill="url(#bvase)"/><ellipse cx="1890" cy="1733" rx="4.800" ry="1.400" fill="#5a4830"/><rect x="1711" y="1414.800" width="7.700" height="282" fill="#a08a64"/><rect x="1711" y="1414.800" width="2.200" height="282" fill="#b49e76"/><circle cx="1707.200" cy="1478.600" r="26.400" fill="#ffffff"/><circle cx="1707.200" cy="1478.600" r="16" fill="url(#gold)"/><circle cx="1710" cy="1479" r="2" fill="#222"/><rect x="1712.300" y="1455" width="7" height="48" fill="#9b8560"/><rect x="1682" y="1525" width="31" height="3.500" fill="#9b8560"/><path d="M1676 1506c8 6 8 36 0 42z" fill="#a08a62"/><circle cx="1657.400" cy="1527" r="25.800" fill="#ffffff"/><circle cx="1722.200" cy="1583.800" r="28" fill="#ffffff"/><rect x="2274" y="1188" width="33" height="29" fill="#e4e4e4" opacity="0.850"/><text x="2290.500" y="1206" font-size="8" fill="#62647a" text-anchor="middle" font-family="Liberation Sans">FRONT</text><ellipse cx="2289" cy="1218.500" rx="31" ry="2.500" fill="none" stroke="#b0b0b0" stroke-width="1.200" stroke-dasharray="5 2"/><rect x="2274" y="1213" width="33" height="5" fill="#c9c9c9"/><path d="M723.500 1865v-27" stroke="#2a2ab0" stroke-width="1.400"/><path d="M723.500 1865h27" stroke="#c04040" stroke-width="1.400"/><text x="721" y="1840" font-size="9" font-weight="bold" fill="#1a1a90" font-family="Liberation Sans">z</text><text x="748" y="1866" font-size="10" fill="#a02020" font-family="Liberation Sans">x</text><text x="721" y="1868" font-size="9" fill="#2f8a2f" font-family="Liberation Sans">y</text></g></svg>
<div style="position:absolute;top:1153.5px;height:16px;line-height:16px;font-size:11.60px;color:#2a2a2a;white-space:pre;letter-spacing:-0.108px;left:702.6px;text-shadow:0 0 1.500px #fff,0 0 1.500px #fff;">[+] [Perspective ] [User Defined ] [Default Shading ]</div>
<!-- part_cmd -->
<div style="position:absolute;left:2346.5px;top:684.0px;width:213.5px;height:1208.0px;background:#444444;"></div>
<div style="position:absolute;left:2346.3px;top:684.0px;width:4.0px;height:1208.5px;background:#3c3c3c;"></div>
<div style="position:absolute;left:2352.0px;top:686.5px;width:205.0px;height:2.6px;background:repeating-linear-gradient(90deg,#999 0 1.300px,transparent 1.300px 2.600px);"></div>
<div style="position:absolute;left:2351.4px;top:694.0px;width:30.6px;height:25.5px;background:#444444;border-radius:3px 3px 0 0;"></div>
<div style="position:absolute;left:2383.4px;top:694.0px;width:30.6px;height:25.5px;background:#3b3b3b;border-radius:3px 3px 0 0;"></div>
<div style="position:absolute;left:2415.4px;top:694.0px;width:30.6px;height:25.5px;background:#3b3b3b;border-radius:3px 3px 0 0;"></div>
<div style="position:absolute;left:2447.4px;top:694.0px;width:30.6px;height:25.5px;background:#3b3b3b;border-radius:3px 3px 0 0;"></div>
<div style="position:absolute;left:2479.4px;top:694.0px;width:30.6px;height:25.5px;background:#3b3b3b;border-radius:3px 3px 0 0;"></div>
<div style="position:absolute;left:2511.4px;top:694.0px;width:30.6px;height:25.5px;background:#3b3b3b;border-radius:3px 3px 0 0;"></div>
<div style="position:absolute;left:2351.4px;top:719.3px;width:198.0px;height:1.0px;background:#505050;"></div>
<svg style="position:absolute;left:2352.7px;top:694.0px;" width="28" height="26" viewBox="0 0 28 26"><path d="M14 4v18M5 13h18" stroke="#f0f0f0" stroke-width="2.200"/></svg>
<svg style="position:absolute;left:2384.7px;top:694.0px;" width="28" height="26" viewBox="0 0 28 26"><rect x="6" y="5" width="16" height="16" fill="none" stroke="#3f8f90" stroke-width="1.200" stroke-dasharray="2.500 1.500"/><path d="M8 20c0-8 4-12 12-12" fill="none" stroke="#bdbdbd" stroke-width="2.200"/><rect x="5" y="4" width="3" height="3" fill="#3f8f90"/><rect x="20" y="4" width="3" height="3" fill="#3f8f90"/><rect x="5" y="19" width="3" height="3" fill="#3f8f90"/><rect x="20" y="19" width="3" height="3" fill="#3f8f90"/></svg>
<svg style="position:absolute;left:2416.7px;top:694.0px;" width="28" height="26" viewBox="0 0 28 26"><rect x="8" y="4" width="12" height="5.500" fill="#b8b8b8"/><path d="M14 10v4M8 18v-4h12v4" fill="none" stroke="#3f8f90" stroke-width="1.400"/><rect x="6" y="18" width="4" height="4" fill="#3f8f90"/><rect x="18" y="18" width="4" height="4" fill="#3f8f90"/></svg>
<svg style="position:absolute;left:2448.7px;top:694.0px;" width="28" height="26" viewBox="0 0 28 26"><circle cx="16" cy="13" r="7.500" fill="#b8b8b8"/><path d="M9 7a8.500 8.500 0 0 0 0 12M6.500 8.500a7 7 0 0 0 0 9" fill="none" stroke="#3f8f90" stroke-width="1.200"/></svg>
<svg style="position:absolute;left:2480.7px;top:694.0px;" width="28" height="26" viewBox="0 0 28 26"><rect x="6" y="6" width="16" height="10.500" fill="#b8b8b8"/><path d="M10 20h8l-2-2.500h-4z" fill="#b8b8b8"/></svg>
<svg style="position:absolute;left:2512.7px;top:694.0px;" width="28" height="26" viewBox="0 0 28 26"><path d="M7 6a4 4 0 0 1 5.500 4l9 9-2.500 2.500-9-9a4 4 0 0 1-4.500-5l2.500 2.500 2-2z" fill="#c8c8c8"/></svg>
<div style="position:absolute;left:2355.9px;top:725.5px;width:20.3px;height:19.7px;background:#5a86c8;border-radius:3px;"></div>
<svg style="position:absolute;left:2355.0px;top:725.0px;" width="22" height="22" viewBox="0 0 22 22"><circle cx="11" cy="11" r="6" fill="#dcdcdc" stroke="#2a2a2a" stroke-width="1"/></svg>
<svg style="position:absolute;left:2377.0px;top:725.0px;" width="22" height="22" viewBox="0 0 22 22"><circle cx="9" cy="9" r="4.500" fill="#dcdcdc" stroke="#333" stroke-width="1"/><rect x="9.500" y="10" width="7.500" height="7.500" fill="#dcdcdc" stroke="#333" stroke-width="1"/></svg>
<svg style="position:absolute;left:2399.0px;top:725.0px;" width="22" height="22" viewBox="0 0 22 22"><path d="M11 3.500a5 5 0 0 1 3 9v2h-6v-2a5 5 0 0 1 3-9z" fill="#dcdcdc"/><path d="M8.500 16h5M9 18h4" stroke="#dcdcdc" stroke-width="1.200"/></svg>
<svg style="position:absolute;left:2421.0px;top:725.0px;" width="22" height="22" viewBox="0 0 22 22"><rect x="3.500" y="6" width="11" height="10" rx="1" fill="#dcdcdc"/><path d="M15 10.500l4-3v7.500l-4-3z" fill="#dcdcdc"/></svg>
<svg style="position:absolute;left:2443.0px;top:725.0px;" width="22" height="22" viewBox="0 0 22 22"><path d="M4 3.500v14h14z" fill="none" stroke="#dcdcdc" stroke-width="1.800"/><path d="M7 11v4h4z" fill="#dcdcdc"/></svg>
<svg style="position:absolute;left:2465.0px;top:725.0px;" width="22" height="22" viewBox="0 0 22 22"><path d="M3.500 7c2.500-2.500 5-2.500 7.500 0s5 2.500 7.500 0M3.500 11.500c2.500-2.500 5-2.500 7.500 0s5 2.500 7.500 0M3.500 16c2.500-2.500 5-2.500 7.500 0s5 2.500 7.500 0" fill="none" stroke="#dcdcdc" stroke-width="1.500"/></svg>
<svg style="position:absolute;left:2487.0px;top:725.0px;" width="22" height="22" viewBox="0 0 22 22"><circle cx="7.500" cy="7" r="3" fill="none" stroke="#dcdcdc" stroke-width="2.200" stroke-dasharray="2 1"/><circle cx="14" cy="14.500" r="3.500" fill="none" stroke="#dcdcdc" stroke-width="2.400" stroke-dasharray="2.200 1.100"/></svg>
<div style="position:absolute;left:2354.9px;top:752.3px;width:200.2px;height:19.6px;background:#5b5b5b;"></div>
<div style="position:absolute;top:754.5px;height:16px;line-height:16px;font-size:11.60px;color:#dcdcdc;white-space:pre;letter-spacing:-0.425px;left:2359.3px;">Standard Primitives</div>
<svg style="position:absolute;left:2541.5px;top:759.0px;" width="8" height="6" viewBox="0 0 8 6"><path d="M0.500 0.500h6.500l-3.250 4.200z" fill="#ddd"/></svg>
<div style="position:absolute;left:2551.5px;top:776.0px;width:8.5px;height:1115.0px;background:#404040;"></div>
<div style="position:absolute;left:2354.9px;top:778.2px;width:192.1px;height:166.6px;background:#4f4f4f;"></div>
<svg style="position:absolute;left:2360.0px;top:784.5px;" width="8" height="7" viewBox="0 0 8 7"><path d="M0.500 0.500h6.500l-3.250 4.500z" fill="#aaa"/></svg>
<div style="position:absolute;top:779.5px;height:17px;line-height:17px;font-size:12.00px;color:#f4f4f4;white-space:pre;font-weight:bold;letter-spacing:0.019px;left:2374.0px;">Object Type</div>
<svg style="position:absolute;left:2533.0px;top:784.0px;" width="8" height="8" viewBox="0 0 8 8"><path d="M1 1h1M3.500 1h1M6 1h1M1 3.500h1M3.500 3.500h1M6 3.500h1M1 6h1M3.500 6h1M6 6h1" stroke="#777" stroke-width="1"/></svg>
<div style="position:absolute;left:2403.7px;top:803.0px;width:9.5px;height:9.5px;background:#575757;border-radius:1.500px;"></div>
<div style="position:absolute;top:800.0px;height:16px;line-height:16px;font-size:11.60px;color:#777;white-space:pre;letter-spacing:-0.472px;left:2416.6px;">AutoGrid</div>
<div style="position:absolute;left:2378.8px;top:819.3px;width:67.1px;height:15.4px;background:#5e5e5e;border-radius:3px;"></div>
<div style="position:absolute;top:819.3px;height:16px;line-height:16px;font-size:11.60px;color:#e4e4e4;white-space:pre;letter-spacing:-0.496px;left:2412.1px;width:0;display:flex;justify-content:center;">Box</div>
<div style="position:absolute;left:2456.8px;top:819.3px;width:67.1px;height:15.4px;background:#5e5e5e;border-radius:3px;"></div>
<div style="position:absolute;top:819.3px;height:16px;line-height:16px;font-size:11.60px;color:#e4e4e4;white-space:pre;letter-spacing:-0.557px;left:2490.0px;width:0;display:flex;justify-content:center;">Cone</div>
<div style="position:absolute;left:2378.8px;top:840.3px;width:67.1px;height:15.4px;background:#5e5e5e;border-radius:3px;"></div>
<div style="position:absolute;top:840.3px;height:16px;line-height:16px;font-size:11.60px;color:#e4e4e4;white-space:pre;letter-spacing:-0.484px;left:2412.1px;width:0;display:flex;justify-content:center;">Sphere</div>
<div style="position:absolute;left:2456.8px;top:840.3px;width:67.1px;height:15.4px;background:#5e5e5e;border-radius:3px;"></div>
<div style="position:absolute;top:840.3px;height:16px;line-height:16px;font-size:11.60px;color:#e4e4e4;white-space:pre;letter-spacing:-0.647px;left:2490.0px;width:0;display:flex;justify-content:center;">GeoSphere</div>
<div style="position:absolute;left:2378.8px;top:861.3px;width:67.1px;height:15.4px;background:#5e5e5e;border-radius:3px;"></div>
<div style="position:absolute;top:861.3px;height:16px;line-height:16px;font-size:11.60px;color:#e4e4e4;white-space:pre;letter-spacing:-0.443px;left:2412.1px;width:0;display:flex;justify-content:center;">Cylinder</div>
<div style="position:absolute;left:2456.8px;top:861.3px;width:67.1px;height:15.4px;background:#5e5e5e;border-radius:3px;"></div>
<div style="position:absolute;top:861.3px;height:16px;line-height:16px;font-size:11.60px;color:#e4e4e4;white-space:pre;letter-spacing:-0.377px;left:2490.1px;width:0;display:flex;justify-content:center;">Tube</div>
<div style="position:absolute;left:2378.8px;top:882.3px;width:67.1px;height:15.4px;background:#5e5e5e;border-radius:3px;"></div>
<div style="position:absolute;top:882.3px;height:16px;line-height:16px;font-size:11.60px;color:#e4e4e4;white-space:pre;letter-spacing:-0.273px;left:2412.2px;width:0;display:flex;justify-content:center;">Torus</div>
<div style="position:absolute;left:2456.8px;top:882.3px;width:67.1px;height:15.4px;background:#5e5e5e;border-radius:3px;"></div>
<div style="position:absolute;top:882.3px;height:16px;line-height:16px;font-size:11.60px;color:#e4e4e4;white-space:pre;letter-spacing:-0.506px;left:2490.0px;width:0;display:flex;justify-content:center;">Pyramid</div>
<div style="position:absolute;left:2378.8px;top:903.3px;width:67.1px;height:15.4px;background:#5e5e5e;border-radius:3px;"></div>
<div style="position:absolute;top:903.3px;height:16px;line-height:16px;font-size:11.60px;color:#e4e4e4;white-space:pre;letter-spacing:-0.054px;left:2412.3px;width:0;display:flex;justify-content:center;">Teapot</div>
<div style="position:absolute;left:2456.8px;top:903.3px;width:67.1px;height:15.4px;background:#5e5e5e;border-radius:3px;"></div>
<div style="position:absolute;top:903.3px;height:16px;line-height:16px;font-size:11.60px;color:#e4e4e4;white-space:pre;letter-spacing:-0.633px;left:2490.0px;width:0;display:flex;justify-content:center;">Plane</div>
<div style="position:absolute;left:2378.8px;top:924.3px;width:67.1px;height:15.4px;background:#5e5e5e;border-radius:3px;"></div>
<div style="position:absolute;top:924.3px;height:16px;line-height:16px;font-size:11.60px;color:#e4e4e4;white-space:pre;letter-spacing:-0.292px;left:2412.2px;width:0;display:flex;justify-content:center;">TextPlus</div>
<div style="position:absolute;left:2354.9px;top:949.6px;width:192.1px;height:53.6px;background:#4f4f4f;"></div>
<svg style="position:absolute;left:2360.0px;top:955.5px;" width="8" height="7" viewBox="0 0 8 7"><path d="M0.500 0.500h6.500l-3.250 4.500z" fill="#aaa"/></svg>
<div style="position:absolute;top:950.5px;height:17px;line-height:17px;font-size:12.00px;color:#f4f4f4;white-space:pre;font-weight:bold;letter-spacing:-0.287px;left:2374.0px;">Name and Color</div>
<svg style="position:absolute;left:2533.0px;top:955.0px;" width="8" height="8" viewBox="0 0 8 8"><path d="M1 1h1M3.500 1h1M6 1h1M1 3.500h1M3.500 3.500h1M6 3.500h1M1 6h1M3.500 6h1M6 6h1" stroke="#777" stroke-width="1"/></svg>
<div style="position:absolute;left:2376.5px;top:975.4px;width:129.7px;height:18.6px;background:#575757;border-radius:2px;"></div>
<div style="position:absolute;left:2511.0px;top:975.4px;width:16.8px;height:19.2px;background:#c42b8c;border:1.300px solid #111;"></div>
<!-- part_bottom -->
<div style="position:absolute;left:0.0px;top:1892.5px;width:2560.0px;height:59.0px;background:#444444;"></div>
<div style="position:absolute;left:4.0px;top:1898.0px;width:2.6px;height:44.0px;background:repeating-linear-gradient(#999 0 1.300px,transparent 1.300px 2.600px);"></div>
<div style="position:absolute;left:10.2px;top:1896.6px;width:13.6px;height:16.2px;background:#5a5a5a;border-radius:2.500px;"></div>
<div style="position:absolute;left:26.0px;top:1896.6px;width:122.7px;height:16.2px;background:#646464;border-radius:2.500px;"></div>
<div style="position:absolute;left:151.3px;top:1896.6px;width:13.6px;height:16.2px;background:#5a5a5a;border-radius:2.500px;"></div>
<div style="position:absolute;top:1896.5px;height:17px;line-height:17px;font-size:12.00px;color:#e0e0e0;white-space:pre;left:17.0px;width:0;display:flex;justify-content:center;">&lt;</div>
<div style="position:absolute;top:1896.5px;height:17px;line-height:17px;font-size:12.00px;color:#e0e0e0;white-space:pre;left:158.2px;width:0;display:flex;justify-content:center;">&gt;</div>
<div style="position:absolute;top:1898.2px;height:16px;line-height:16px;font-size:11.30px;color:#e8e8e8;white-space:pre;letter-spacing:-0.079px;left:86.5px;width:0;display:flex;justify-content:center;">0 / 100</div>
<div style="position:absolute;left:9.0px;top:1916.8px;width:2551.0px;height:1.3px;background:#1c1c1c;"></div>
<div style="position:absolute;left:59.3px;top:1918.0px;width:2450.5px;height:25.3px;background:#2c2c2c;"></div>
<svg style="position:absolute;left:21.0px;top:1923.0px;" width="20" height="16" viewBox="0 0 20 16"><path d="M1.500 3h3M1.500 6h3M1.500 9h3M1.500 12h3" stroke="#ddd" stroke-width="1.200"/><path d="M7 11c2-12 4-12 6-2s3 6 4 1" fill="none" stroke="#3fb9bb" stroke-width="1.400"/></svg>
<svg style="position:absolute;left:0;top:0" width="2560" height="2560" viewBox="0 0 2560 2560"><rect x="66.500" y="1919.500" width="7.500" height="23" fill="#9a8f45"/><text x="70" y="1941.300" font-size="11.300" fill="#d8d060" text-anchor="middle" font-family="Liberation Sans">0</text><path d="M70.9 1918.500v11.500M70.9 1941v2.300M95.2 1918.500v11.500M119.5 1918.500v11.500M119.5 1941v2.300M143.8 1918.500v11.500M168.1 1918.500v11.500M168.1 1941v2.300M192.3 1918.500v11.500M216.6 1918.500v11.500M216.6 1941v2.300M240.9 1918.500v11.500M265.2 1918.500v11.500M265.2 1941v2.300M289.5 1918.500v11.500M313.8 1918.500v11.500M313.8 1941v2.300M338.1 1918.500v11.500M362.4 1918.500v11.500M362.4 1941v2.300M386.7 1918.500v11.500M411.0 1918.500v11.500M411.0 1941v2.300M435.2 1918.500v11.500M459.5 1918.500v11.500M459.5 1941v2.300M483.8 1918.500v11.500M508.1 1918.500v11.500M508.1 1941v2.300M532.4 1918.500v11.500M556.7 1918.500v11.500M556.7 1941v2.300M581.0 1918.500v11.500M605.3 1918.500v11.500M605.3 1941v2.300M629.6 1918.500v11.500M653.9 1918.500v11.500M653.9 1941v2.300M678.1 1918.500v11.500M702.4 1918.500v11.500M702.4 1941v2.300M726.7 1918.500v11.500M751.0 1918.500v11.500M751.0 1941v2.300M775.3 1918.500v11.500M799.6 1918.500v11.500M799.6 1941v2.300M823.9 1918.500v11.500M848.2 1918.500v11.500M848.2 1941v2.300M872.5 1918.500v11.500M896.8 1918.500v11.500M896.8 1941v2.300M921.0 1918.500v11.500M945.3 1918.500v11.500M945.3 1941v2.300M969.6 1918.500v11.500M993.9 1918.500v11.500M993.9 1941v2.300M1018.2 1918.500v11.500M1042.5 1918.500v11.500M1042.5 1941v2.300M1066.8 1918.500v11.500M1091.1 1918.500v11.500M1091.1 1941v2.300M1115.4 1918.500v11.500M1139.7 1918.500v11.500M1139.7 1941v2.300M1164.0 1918.500v11.500M1188.2 1918.500v11.500M1188.2 1941v2.300M1212.5 1918.500v11.500M1236.8 1918.500v11.500M1236.8 1941v2.300M1261.1 1918.500v11.500M1285.4 1918.500v11.500M1285.4 1941v2.300M1309.7 1918.500v11.500M1334.0 1918.500v11.500M1334.0 1941v2.300M1358.3 1918.500v11.500M1382.6 1918.500v11.500M1382.6 1941v2.300M1406.9 1918.500v11.500M1431.1 1918.500v11.500M1431.1 1941v2.300M1455.4 1918.500v11.500M1479.7 1918.500v11.500M1479.7 1941v2.300M1504.0 1918.500v11.500M1528.3 1918.500v11.500M1528.3 1941v2.300M1552.6 1918.500v11.500M1576.9 1918.500v11.500M1576.9 1941v2.300M1601.2 1918.500v11.500M1625.5 1918.500v11.500M1625.5 1941v2.300M1649.8 1918.500v11.500M1674.0 1918.500v11.500M1674.0 1941v2.300M1698.3 1918.500v11.500M1722.6 1918.500v11.500M1722.6 1941v2.300M1746.9 1918.500v11.500M1771.2 1918.500v11.500M1771.2 1941v2.300M1795.5 1918.500v11.500M1819.8 1918.500v11.500M1819.8 1941v2.300M1844.1 1918.500v11.500M1868.4 1918.500v11.500M1868.4 1941v2.300M1892.7 1918.500v11.500M1916.9 1918.500v11.500M1916.9 1941v2.300M1941.2 1918.500v11.500M1965.5 1918.500v11.500M1965.5 1941v2.300M1989.8 1918.500v11.500M2014.1 1918.500v11.500M2014.1 1941v2.300M2038.4 1918.500v11.500M2062.7 1918.500v11.500M2062.7 1941v2.300M2087.0 1918.500v11.500M2111.3 1918.500v11.500M2111.3 1941v2.300M2135.6 1918.500v11.500M2159.8 1918.500v11.500M2159.8 1941v2.300M2184.1 1918.500v11.500M2208.4 1918.500v11.500M2208.4 1941v2.300M2232.7 1918.500v11.500M2257.0 1918.500v11.500M2257.0 1941v2.300M2281.3 1918.500v11.500M2305.6 1918.500v11.500M2305.6 1941v2.300M2329.9 1918.500v11.500M2354.2 1918.500v11.500M2354.2 1941v2.300M2378.4 1918.500v11.500M2402.7 1918.500v11.500M2402.7 1941v2.300M2427.0 1918.500v11.500M2451.3 1918.500v11.500M2451.3 1941v2.300M2475.6 1918.500v11.500M2499.9 1918.500v11.500M2499.9 1941v2.300" stroke="#a8a8a8" stroke-width="1" fill="none"/><text x="118.6" y="1941.300" font-size="11.300" fill="#d8d8d8" text-anchor="middle" font-family="Liberation Sans">2</text><text x="167.2" y="1941.300" font-size="11.300" fill="#d8d8d8" text-anchor="middle" font-family="Liberation Sans">4</text><text x="215.7" y="1941.300" font-size="11.300" fill="#d8d8d8" text-anchor="middle" font-family="Liberation Sans">6</text><text x="264.3" y="1941.300" font-size="11.300" fill="#d8d8d8" text-anchor="middle" font-family="Liberation Sans">8</text><text x="312.9" y="1941.300" font-size="11.300" fill="#d8d8d8" text-anchor="middle" font-family="Liberation Sans">10</text><text x="361.5" y="1941.300" font-size="11.300" fill="#d8d8d8" text-anchor="middle" font-family="Liberation Sans">12</text><text x="410.1" y="1941.300" font-size="11.300" fill="#d8d8d8" text-anchor="middle" font-family="Liberation Sans">14</text><text x="458.6" y="1941.300" font-size="11.300" fill="#d8d8d8" text-anchor="middle" font-family="Liberation Sans">16</text><text x="507.2" y="1941.300" font-size="11.300" fill="#d8d8d8" text-anchor="middle" font-family="Liberation Sans">18</text><text x="555.8" y="1941.300" font-size="11.300" fill="#d8d8d8" text-anchor="middle" font-family="Liberation Sans">20</text><text x="604.4" y="1941.300" font-size="11.300" fill="#d8d8d8" text-anchor="middle" font-family="Liberation Sans">22</text><text x="653.0" y="1941.300" font-size="11.300" fill="#d8d8d8" text-anchor="middle" font-family="Liberation Sans">24</text><text x="701.5" y="1941.300" font-size="11.300" fill="#d8d8d8" text-anchor="middle" font-family="Liberation Sans">26</text><text x="750.1" y="1941.300" font-size="11.300" fill="#d8d8d8" text-anchor="middle" font-family="Liberation Sans">28</text><text x="798.7" y="1941.300" font-size="11.300" fill="#d8d8d8" text-anchor="middle" font-family="Liberation Sans">30</text><text x="847.3" y="1941.300" font-size="11.300" fill="#d8d8d8" text-anchor="middle" font-family="Liberation Sans">32</text><text x="895.9" y="1941.300" font-size="11.300" fill="#d8d8d8" text-anchor="middle" font-family="Liberation Sans">34</text><text x="944.4" y="1941.300" font-size="11.300" fill="#d8d8d8" text-anchor="middle" font-family="Liberation Sans">36</text><text x="993.0" y="1941.300" font-size="11.300" fill="#d8d8d8" text-anchor="middle" font-family="Liberation Sans">38</text><text x="1041.6" y="1941.300" font-size="11.300" fill="#d8d8d8" text-anchor="middle" font-family="Liberation Sans">40</text><text x="1090.2" y="1941.300" font-size="11.300" fill="#d8d8d8" text-anchor="middle" font-family="Liberation Sans">42</text><text x="1138.8" y="1941.300" font-size="11.300" fill="#d8d8d8" text-anchor="middle" font-family="Liberation Sans">44</text><text x="1187.3" y="1941.300" font-size="11.300" fill="#d8d8d8" text-anchor="middle" font-family="Liberation Sans">46</text><text x="1235.9" y="1941.300" font-size="11.300" fill="#d8d8d8" text-anchor="middle" font-family="Liberation Sans">48</text><text x="1284.5" y="1941.300" font-size="11.300" fill="#d8d8d8" text-anchor="middle" font-family="Liberation Sans">50</text><text x="1333.1" y="1941.300" font-size="11.300" fill="#d8d8d8" text-anchor="middle" font-family="Liberation Sans">52</text><text x="1381.7" y="1941.300" font-size="11.300" fill="#d8d8d8" text-anchor="middle" font-family="Liberation Sans">54</text><text x="1430.2" y="1941.300" font-size="11.300" fill="#d8d8d8" text-anchor="middle" font-family="Liberation Sans">56</text><text x="1478.8" y="1941.300" font-size="11.300" fill="#d8d8d8" text-anchor="middle" font-family="Liberation Sans">58</text><text x="1527.4" y="1941.300" font-size="11.300" fill="#d8d8d8" text-anchor="middle" font-family="Liberation Sans">60</text><text x="1576.0" y="1941.300" font-size="11.300" fill="#d8d8d8" text-anchor="middle" font-family="Liberation Sans">62</text><text x="1624.6" y="1941.300" font-size="11.300" fill="#d8d8d8" text-anchor="middle" font-family="Liberation Sans">64</text><text x="1673.1" y="1941.300" font-size="11.300" fill="#d8d8d8" text-anchor="middle" font-family="Liberation Sans">66</text><text x="1721.7" y="1941.300" font-size="11.300" fill="#d8d8d8" text-anchor="middle" font-family="Liberation Sans">68</text><text x="1770.3" y="1941.300" font-size="11.300" fill="#d8d8d8" text-anchor="middle" font-family="Liberation Sans">70</text><text x="1818.9" y="1941.300" font-size="11.300" fill="#d8d8d8" text-anchor="middle" font-family="Liberation Sans">72</text><text x="1867.5" y="1941.300" font-size="11.300" fill="#d8d8d8" text-anchor="middle" font-family="Liberation Sans">74</text><text x="1916.0" y="1941.300" font-size="11.300" fill="#d8d8d8" text-anchor="middle" font-family="Liberation Sans">76</text><text x="1964.6" y="1941.300" font-size="11.300" fill="#d8d8d8" text-anchor="middle" font-family="Liberation Sans">78</text><text x="2013.2" y="1941.300" font-size="11.300" fill="#d8d8d8" text-anchor="middle" font-family="Liberation Sans">80</text><text x="2061.8" y="1941.300" font-size="11.300" fill="#d8d8d8" text-anchor="middle" font-family="Liberation Sans">82</text><text x="2110.4" y="1941.300" font-size="11.300" fill="#d8d8d8" text-anchor="middle" font-family="Liberation Sans">84</text><text x="2158.9" y="1941.300" font-size="11.300" fill="#d8d8d8" text-anchor="middle" font-family="Liberation Sans">86</text><text x="2207.5" y="1941.300" font-size="11.300" fill="#d8d8d8" text-anchor="middle" font-family="Liberation Sans">88</text><text x="2256.1" y="1941.300" font-size="11.300" fill="#d8d8d8" text-anchor="middle" font-family="Liberation Sans">90</text><text x="2304.7" y="1941.300" font-size="11.300" fill="#d8d8d8" text-anchor="middle" font-family="Liberation Sans">92</text><text x="2353.3" y="1941.300" font-size="11.300" fill="#d8d8d8" text-anchor="middle" font-family="Liberation Sans">94</text><text x="2401.8" y="1941.300" font-size="11.300" fill="#d8d8d8" text-anchor="middle" font-family="Liberation Sans">96</text><text x="2450.4" y="1941.300" font-size="11.300" fill="#d8d8d8" text-anchor="middle" font-family="Liberation Sans">98</text><text x="2499.0" y="1941.300" font-size="11.300" fill="#d8d8d8" text-anchor="middle" font-family="Liberation Sans">100</text></svg>
<div style="position:absolute;left:4.0px;top:1949.0px;width:98.0px;height:2.5px;background:#e0e0e0;"></div>
<div style="position:absolute;left:106.5px;top:1947.0px;width:1.3px;height:4.0px;background:#1c1c1c;"></div>
<div style="position:absolute;left:0.0px;top:1951.5px;width:2560.0px;height:48.5px;background:#232021;"></div>
<div style="position:absolute;left:0.0px;top:1950.6px;width:2560.0px;height:1.2px;background:#6e6e6e;"></div>
<!-- part_task -->
<div style="position:absolute;left:1260.6px;top:1954.5px;width:40.0px;height:42.0px;background:#4a2a2c;border-radius:5px;"></div>
<div style="position:absolute;left:1272.6px;top:1992.3px;width:16.0px;height:3.2px;background:#e88a96;border-radius:2px;"></div>
<div style="position:absolute;left:969.6px;top:1993.0px;width:6.0px;height:2.6px;background:#9a9a9a;border-radius:1.300px;"></div>
<div style="position:absolute;left:1013.6px;top:1993.0px;width:6.0px;height:2.6px;background:#9a9a9a;border-radius:1.300px;"></div>
<svg width="0" height="0" style="position:absolute"><defs><linearGradient id="acg" x1="0" x2="1" y1="0" y2="1"><stop offset="0" stop-color="#ffffff" stop-opacity="0.55"/><stop offset="0.5" stop-color="#fff" stop-opacity="0"/></linearGradient><linearGradient id="pg" x1="0" x2="1" y1="0" y2="1"><stop offset="0" stop-color="#4a6cf0"/><stop offset="1" stop-color="#c03ad8"/></linearGradient></defs></svg>
<svg style="position:absolute;left:870.6px;top:1961.6px" width="28" height="28" viewBox="-14 -14 28 28"><rect x="-12" y="-12" width="11.300" height="11.300" rx="1" fill="#4cc2f4"/><rect x="0.700" y="-12" width="11.300" height="11.300" rx="1" fill="#4cc2f4"/><rect x="-12" y="0.700" width="11.300" height="11.300" rx="1" fill="#38b0ec"/><rect x="0.700" y="0.700" width="11.300" height="11.300" rx="1" fill="#38b0ec"/></svg>
<svg style="position:absolute;left:914.6px;top:1961.6px" width="28" height="28" viewBox="-14 -14 28 28"><rect x="-9" y="-12" width="18" height="24" rx="1.500" fill="#7a8898"/><rect x="-7" y="-10" width="14" height="5" fill="#9ad4f4"/><g fill="#e8e8e8"><rect x="-7" y="-3" width="3.600" height="3.600"/><rect x="-1.800" y="-3" width="3.600" height="3.600"/><rect x="3.400" y="-3" width="3.600" height="3.600"/><rect x="-7" y="2" width="3.600" height="3.600"/><rect x="-1.800" y="2" width="3.600" height="3.600"/><rect x="-7" y="7" width="3.600" height="3.600"/><rect x="-1.800" y="7" width="3.600" height="3.600"/></g><rect x="3.400" y="2" width="3.600" height="8.600" fill="#3a78c0"/></svg>
<svg style="position:absolute;left:958.6px;top:1961.6px" width="28" height="28" viewBox="-14 -14 28 28"><circle r="12.500" fill="#1c74c8"/><path d="M-12 2a12.500 12.500 0 0 1 24-5c1 4-2 7-6 7h-8c0 4 4 7 9 6a12.500 12.500 0 0 1-19-8z" fill="#35c1a0"/><path d="M-12 2c0-8 8-11 13-9 5 2 7 6 5 9h-8c-1-3-6-3-7 1s1 9 6 11a12.500 12.500 0 0 1-9-12z" fill="#1a5fb4"/><path d="M-3 4c0-3 3-5 6-4 2 1 3 3 3 4z" fill="#232021"/></svg>
<svg style="position:absolute;left:1002.6px;top:1961.6px" width="28" height="28" viewBox="-14 -14 28 28"><path d="M-12 -9h8l2 2.500h14v3h-24z" fill="#e8b030"/><rect x="-12" y="-5" width="24" height="16" rx="1" fill="#f6d35a"/><rect x="-6" y="4" width="12" height="7" fill="#2a7ad0"/><rect x="-4" y="2.500" width="8" height="2" fill="#2a7ad0"/></svg>
<svg style="position:absolute;left:1046.6px;top:1961.6px" width="28" height="28" viewBox="-14 -14 28 28"><path d="M-12 -3l12-9 12 9v14h-24z" fill="#1a6fc8"/><path d="M-12 -3l12 7 12-7v-1h-24z" fill="#e8f4ff"/><path d="M-12 11v-14l12 8 12-8v14z" fill="#3f9ee8"/></svg>
<svg style="position:absolute;left:1090.6px;top:1961.6px" width="28" height="28" viewBox="-14 -14 28 28"><circle r="11.500" fill="#f6f2f8" stroke="#d8c8e8" stroke-width="1"/><path d="M-2 5v-10l7-1.800v9.500" fill="none" stroke="#e050a8" stroke-width="1.800"/><ellipse cx="-3.800" cy="5.200" rx="2.400" ry="1.900" fill="#5a8af0"/><ellipse cx="3.200" cy="3.200" rx="2.400" ry="1.900" fill="#b060e0"/></svg>
<svg style="position:absolute;left:1134.6px;top:1961.6px" width="28" height="28" viewBox="-14 -14 28 28"><circle r="12.500" fill="#1ed760"/><path d="M-7 -3.500c5-1.500 10-1 14.500 1.500M-6.500 0.800c4.500-1.300 9-0.800 12.500 1.300M-5.500 4.800c3.500-1 7-0.600 10 1" fill="none" stroke="#181818" stroke-width="2.200" stroke-linecap="round"/></svg>
<svg style="position:absolute;left:1178.6px;top:1961.6px" width="28" height="28" viewBox="-14 -14 28 28"><rect x="-12" y="-12" width="24" height="24" fill="#eef2f6"/><path d="M-6 -6l7-3.500 6 3-7 3.500zM0 -3v3.500l-6 3v3.500l7 3.500 6-3v-7l-6 3" fill="none" stroke="#1a6fb8" stroke-width="2.200"/></svg>
<svg style="position:absolute;left:1222.6px;top:1961.6px" width="28" height="28" viewBox="-14 -14 28 28"><rect x="-12" y="-12" width="24" height="24" fill="#d83a3a"/><rect x="-12" y="-12" width="24" height="24" fill="url(#acg)"/><path d="M0 -9l9 17h-4.500l-1.500-3.500h-6l-1.500 3.500h-4.500z" fill="#8c1010"/><path d="M0 -3l2 5h-4z" fill="#e86060"/></svg>
<svg style="position:absolute;left:1266.6px;top:1961.6px" width="28" height="28" viewBox="-14 -14 28 28"><rect x="-10.500" y="-12" width="21" height="22" fill="#e6f2f2"/><text x="0" y="5" font-size="19" font-weight="bold" fill="#23a0a8" text-anchor="middle" font-family="Liberation Sans">3</text><text x="4.500" y="9" font-size="4.500" font-weight="bold" fill="#147078" text-anchor="middle" font-family="Liberation Sans">MAX</text></svg>
<svg style="position:absolute;left:1310.6px;top:1961.6px" width="28" height="28" viewBox="-14 -14 28 28"><circle r="12" fill="#7a3cd8"/><circle r="12" fill="url(#pg)"/><path d="M-4 -5.500h4.500a5.500 5.500 0 0 1 0 11h-1.500l-3 2.500z" fill="none" stroke="#fff" stroke-width="2.400"/></svg>
<svg style="position:absolute;left:1354.6px;top:1961.6px" width="28" height="28" viewBox="-14 -14 28 28"><rect x="-11" y="-11" width="22" height="21" fill="#0a1446" stroke="#8ab4f8" stroke-width="1.300"/><text x="0" y="5" font-size="13.500" font-weight="bold" fill="#9ac4ff" text-anchor="middle" font-family="Liberation Sans">Ps</text></svg>
<svg style="position:absolute;left:1398.6px;top:1961.6px" width="28" height="28" viewBox="-14 -14 28 28"><rect x="-11" y="-11" width="22" height="21" fill="#2a1200" stroke="#f09a30" stroke-width="1.300"/><text x="0" y="5" font-size="13.500" font-weight="bold" fill="#f8a848" text-anchor="middle" font-family="Liberation Sans">Ai</text></svg>
<svg style="position:absolute;left:1442.6px;top:1961.6px" width="28" height="28" viewBox="-14 -14 28 28"><path d="M-3.500 -11h7v3l-1 1v3a9 9 0 1 1-5 0v-3l-1-1z" fill="#1c3a44" stroke="#0c2028" stroke-width="1"/><circle cx="0" cy="4" r="6" fill="#48b8c8"/><path d="M-4 2c2-2 4 0 3 2s2 3 4 1" stroke="#1c3a44" stroke-width="1.500" fill="none"/></svg>
<svg style="position:absolute;left:1486.6px;top:1961.6px" width="28" height="28" viewBox="-14 -14 28 28"><path d="M-12 2l9-7h-6v-3h11l8 6a8 8 0 1 1-14 6z" fill="#ea7600"/><circle cx="4" cy="3.500" r="5.500" fill="#fff"/><circle cx="4" cy="3.500" r="3" fill="#265787"/></svg>
<svg style="position:absolute;left:1530.6px;top:1961.6px" width="28" height="28" viewBox="-14 -14 28 28"><rect x="-11.500" y="-11.500" width="23" height="23" fill="#2d9fe0"/><path d="M-4.500 -5.500h7a3 3 0 0 1 1.500 5.500a3 3 0 0 1-1.500 5.500h-7z" fill="#fff"/><rect x="-1.500" y="-3" width="3.500" height="1.800" fill="#2d9fe0"/><rect x="-1.500" y="1.500" width="3.500" height="1.800" fill="#2d9fe0"/></svg>
<svg style="position:absolute;left:1574.6px;top:1961.6px" width="28" height="28" viewBox="-14 -14 28 28"><rect x="-5" y="-11" width="17" height="22" rx="1.500" fill="#2b7cd3"/><rect x="-5" y="-11" width="17" height="7.300" fill="#41a5ee"/><rect x="-5" y="3.700" width="17" height="7.300" fill="#103f91"/><rect x="-12.500" y="-6.500" width="13" height="13" rx="1" fill="#185abd"/><text x="-6" y="4.300" font-size="10.500" font-weight="bold" fill="#fff" text-anchor="middle" font-family="Liberation Sans">W</text></svg>
<svg style="position:absolute;left:1618.6px;top:1961.6px" width="28" height="28" viewBox="-14 -14 28 28"><rect x="-5" y="-11" width="17" height="22" rx="1.500" fill="#21a366"/><rect x="-5" y="-11" width="17" height="7.300" fill="#33c481"/><rect x="-5" y="3.700" width="17" height="7.300" fill="#185c37"/><rect x="-12.500" y="-6.500" width="13" height="13" rx="1" fill="#107c41"/><text x="-6" y="4.300" font-size="10.500" font-weight="bold" fill="#fff" text-anchor="middle" font-family="Liberation Sans">X</text></svg>
<svg style="position:absolute;left:1662.6px;top:1961.6px" width="28" height="28" viewBox="-14 -14 28 28"><path d="M0 -12.500a12.300 12.300 0 0 1 0 24.600c-2.200 0-4.300-0.600-6-1.600l-6.500 2 2.100-6.200a12.300 12.300 0 0 1 10.400-18.800z" fill="#fff"/><circle cx="0" cy="-0.200" r="10.600" fill="#25d366"/><path d="M-5 -5.500c1-1.500 2.500-1 3-0.200l1 2.200-1.300 1.600c1 2 2.500 3.400 4.500 4.300l1.500-1.500 2.400 1.100c0.800 0.500 0.900 1.700-0.400 2.800-4 2.500-12.500-5-10.700-10.300z" fill="#fff"/></svg>
<svg style="position:absolute;left:2093.0px;top:1971.0px;" width="14" height="9" viewBox="0 0 14 9"><path d="M1.500 7.500l5.500-5.500 5.500 5.500" fill="none" stroke="#f0f0f0" stroke-width="1.600"/></svg>
<div style="position:absolute;top:1969.2px;height:17px;line-height:17px;font-size:12.40px;color:#f0f0f0;white-space:pre;letter-spacing:-0.146px;left:2122.9px;width:0;display:flex;justify-content:center;">36</div>
<div style="position:absolute;top:1969.2px;height:17px;line-height:17px;font-size:12.40px;color:#e02020;white-space:pre;letter-spacing:-1.245px;left:2146.4px;width:0;display:flex;justify-content:center;">4.9</div>
<div style="position:absolute;top:1969.2px;height:17px;line-height:17px;font-size:12.40px;color:#f0f0f0;white-space:pre;letter-spacing:-0.146px;left:2170.9px;width:0;display:flex;justify-content:center;">34</div>
<div style="position:absolute;top:1969.2px;height:17px;line-height:17px;font-size:12.40px;color:#f0f0f0;white-space:pre;letter-spacing:-0.146px;left:2194.9px;width:0;display:flex;justify-content:center;">35</div>
<div style="position:absolute;top:1969.2px;height:17px;line-height:17px;font-size:12.40px;color:#f0f0f0;white-space:pre;letter-spacing:-0.146px;left:2218.9px;width:0;display:flex;justify-content:center;">42</div>
<div style="position:absolute;top:1969.2px;height:17px;line-height:17px;font-size:12.40px;color:#f0f0f0;white-space:pre;letter-spacing:-0.146px;left:2242.9px;width:0;display:flex;justify-content:center;">36</div>
<div style="position:absolute;top:1969.2px;height:17px;line-height:17px;font-size:12.40px;color:#f0f0f0;white-space:pre;letter-spacing:-0.146px;left:2266.9px;width:0;display:flex;justify-content:center;">39</div>
<div style="position:absolute;top:1969.2px;height:17px;line-height:17px;font-size:12.40px;color:#f0f0f0;white-space:pre;letter-spacing:-0.146px;left:2290.9px;width:0;display:flex;justify-content:center;">52</div>
<div style="position:absolute;top:1969.2px;height:17px;line-height:17px;font-size:12.40px;color:#f0f0f0;white-space:pre;letter-spacing:-0.146px;left:2314.9px;width:0;display:flex;justify-content:center;">40</div>
<div style="position:absolute;top:1969.2px;height:17px;line-height:17px;font-size:12.40px;color:#f0f0f0;white-space:pre;letter-spacing:-0.146px;left:2338.9px;width:0;display:flex;justify-content:center;">51</div>
<div style="position:absolute;top:1969.2px;height:17px;line-height:17px;font-size:12.40px;color:#f0f0f0;white-space:pre;letter-spacing:-0.146px;left:2362.9px;width:0;display:flex;justify-content:center;">49</div>
<svg style="position:absolute;left:2383.0px;top:1968.0px;" width="18" height="15" viewBox="0 0 18 15"><path d="M1.500 5.500a10.500 10.500 0 0 1 15 0M4 8.300a7 7 0 0 1 10 0M6.500 11a3.500 3.500 0 0 1 5 0" fill="none" stroke="#f0f0f0" stroke-width="1.500"/><circle cx="9" cy="13" r="1.300" fill="#f0f0f0"/></svg>
<svg style="position:absolute;left:2406.0px;top:1967.0px;" width="20" height="16" viewBox="0 0 20 16"><path d="M2 5.500h3l4-3.500v12l-4-3.500h-3z" fill="none" stroke="#f0f0f0" stroke-width="1.300"/><path d="M11.500 5.500a3.500 3.500 0 0 1 0 5" fill="none" stroke="#f0f0f0" stroke-width="1.300"/><path d="M13.500 3a7 7 0 0 1 0 10" fill="none" stroke="#777" stroke-width="1.300"/></svg>
<div style="position:absolute;top:1960.2px;height:16px;line-height:16px;font-size:11.60px;color:#f4f4f4;white-space:pre;letter-spacing:-0.605px;right:21.2px;">12:16</div>
<div style="position:absolute;top:1976.0px;height:16px;line-height:16px;font-size:11.60px;color:#f4f4f4;white-space:pre;letter-spacing:-0.081px;right:20.1px;">23.03.22.Çarşamba</div>
</body></html>
